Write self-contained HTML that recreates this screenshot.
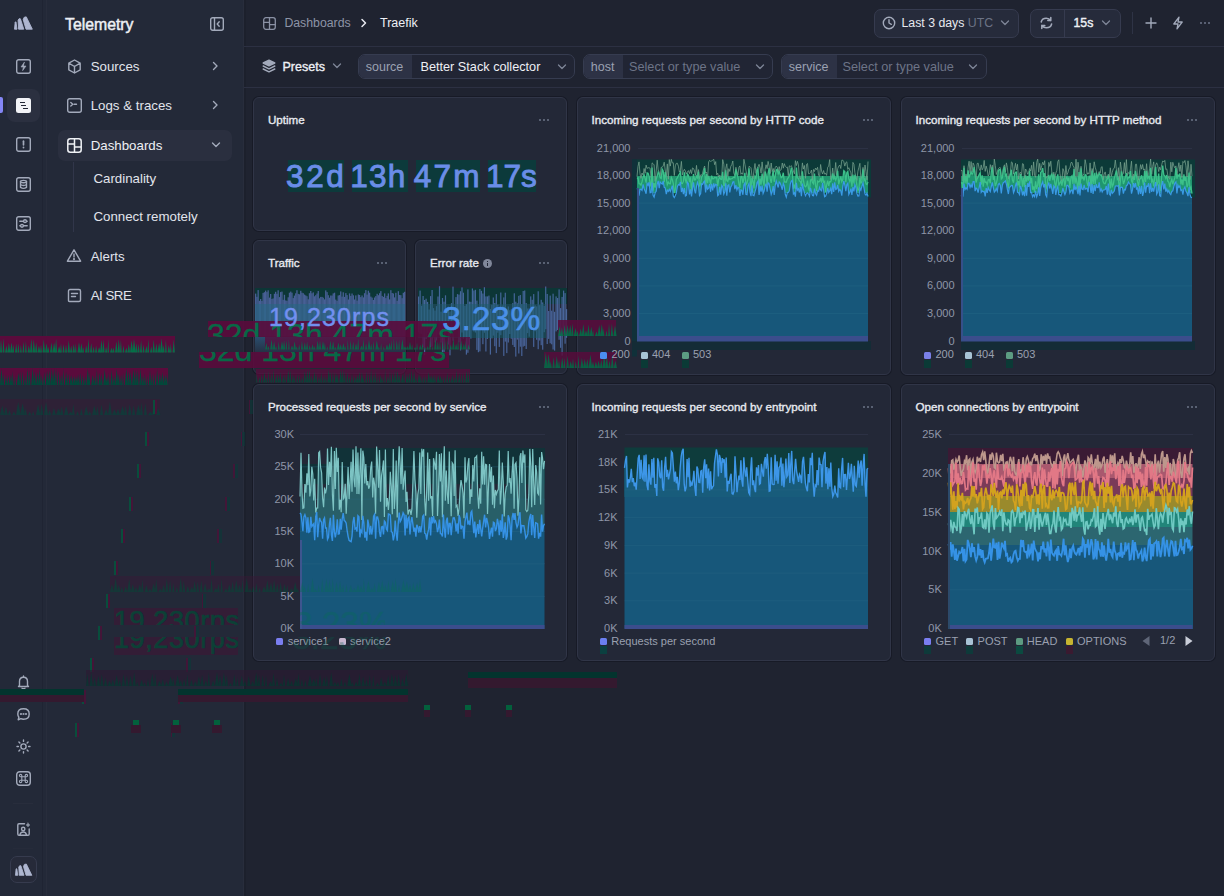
<!DOCTYPE html><html><head><meta charset="utf-8"><style>
*{box-sizing:border-box;margin:0;padding:0}
html,body{width:1224px;height:896px;overflow:hidden;background:#1f2330;font-family:"Liberation Sans",sans-serif;color:#e3e6ee}
.a{position:absolute;white-space:nowrap}
.card{position:absolute;background:#232837;border:1px solid #303547;border-radius:6px;box-shadow:0 0 0 1px rgba(10,12,20,0.35)}
.ttl{position:absolute;font-size:11.6px;font-weight:400;-webkit-text-stroke:0.35px #e8eaf0;color:#e8eaf0;white-space:nowrap}
.dots{position:absolute;width:11px;height:3px}
.dots i{position:absolute;top:0.2px;width:2.2px;height:2.2px;border-radius:50%;background:#6d7488}
.ax{position:absolute;font-size:10.5px;color:#8f96a8;text-align:right;white-space:nowrap;line-height:12px}
.lg{position:absolute;font-size:11px;color:#9aa0b0;white-space:nowrap;line-height:13px}
.sq{position:absolute;width:7px;height:7px;border-radius:1.5px}
.si{position:absolute;font-size:13.3px;color:#e1e4ec;white-space:nowrap;line-height:16px}
svg{position:absolute;overflow:visible}
</style></head><body>

<div class="a" style="left:0;top:0;width:47px;height:896px;background:#232938;border-right:1px solid #282d3c"></div><div class="a" style="left:42px;top:0;width:1px;height:896px;background:#1f2433"></div>
<div class="a" style="left:47px;top:0;width:197px;height:896px;background:#232938;border-right:1px solid #282d3c"></div><div class="a" style="left:244px;top:0;width:1.5px;height:896px;background:#1c202c"></div>
<div class="a" style="left:244px;top:46px;width:980px;height:1px;background:#2c3042"></div>
<div class="a" style="left:244px;top:87px;width:980px;height:1px;background:#2c3042"></div>
<svg style="left:13.9px;top:16px;width:19px;height:14px" viewBox="0 0 19 14"><g fill="#aeb6d0" stroke="#aeb6d0" stroke-width="0.9" stroke-linejoin="round"><path d="M0.5,13.2 L1.2,6.2 Q1.5,5.4 2,6.2 L3,13.2 Z"/><path d="M4.6,13.2 L4.1,4.3 Q4.8,2 6.4,2.8 L9.8,13.2 Z"/><path d="M12,13.2 L9.2,3.6 Q9.6,0.4 12.3,0.9 L18.3,13.2 Z"/></g></svg>
<svg style="left:16px;top:59px;width:15px;height:15px" viewBox="0 0 15 15" fill="none" stroke="#a3aabb" stroke-width="1.4" stroke-linecap="round" stroke-linejoin="round"><rect x="0.7" y="0.7" width="13.6" height="13.6" rx="2"/><path d="M8.3,3.3 L5,8 L7.4,8 L6.6,11.7 L10,7 L7.6,7 Z" fill="#a3aabb" stroke-width="0.6"/></svg>
<div class="a" style="left:7px;top:89px;width:33px;height:33px;border-radius:8px;background:#2b3040"></div>
<div class="a" style="left:0;top:97px;width:2.5px;height:16px;border-radius:0 2px 2px 0;background:#8486f5"></div>
<div class="a" style="left:16px;top:98px;width:15px;height:15px;border-radius:2.5px;background:#f2f3f7"></div>
<div class="a" style="left:19.5px;top:101.5px;width:5px;height:1.6px;background:#232736"></div>
<div class="a" style="left:21px;top:104.7px;width:5px;height:1.6px;background:#232736"></div>
<div class="a" style="left:22.5px;top:107.9px;width:5px;height:1.6px;background:#232736"></div>
<svg style="left:16px;top:137px;width:15px;height:15px" viewBox="0 0 15 15" fill="none" stroke="#a3aabb" stroke-width="1.4" stroke-linecap="round" stroke-linejoin="round"><rect x="0.7" y="0.7" width="13.6" height="13.6" rx="2"/><path d="M7.5,4.2 L7.5,7.8" stroke-width="1.7"/><circle cx="7.5" cy="10.5" r="0.9" fill="#a3aabb" stroke="none"/></svg>
<svg style="left:16px;top:177px;width:15px;height:15px" viewBox="0 0 15 15" fill="none" stroke="#a3aabb" stroke-width="1.4" stroke-linecap="round" stroke-linejoin="round"><rect x="0.7" y="0.7" width="13.6" height="13.6" rx="2"/><ellipse cx="7.5" cy="4.6" rx="3" ry="1.2"/><path d="M4.5,4.6 L4.5,10.4 Q7.5,12.4 10.5,10.4 L10.5,4.6 M4.5,7.5 Q7.5,9.5 10.5,7.5"/></svg>
<svg style="left:16px;top:216px;width:15px;height:15px" viewBox="0 0 15 15" fill="none" stroke="#a3aabb" stroke-width="1.4" stroke-linecap="round" stroke-linejoin="round"><rect x="0.7" y="0.7" width="13.6" height="13.6" rx="2"/><path d="M3.8,5.2 L7.5,5.2 M10.6,5.2 L11.2,5.2 M3.8,9.8 L4.4,9.8 M7.5,9.8 L11.2,9.8"/><circle cx="9" cy="5.2" r="1.4"/><circle cx="6" cy="9.8" r="1.4"/></svg>
<svg style="left:16px;top:675px;width:15px;height:15px" viewBox="0 0 15 15" fill="none" stroke="#a3aabb" stroke-width="1.4" stroke-linecap="round" stroke-linejoin="round"><path d="M3.5,10.5 L3.5,6.5 Q3.5,2.2 7.5,2.2 Q11.5,2.2 11.5,6.5 L11.5,10.5 L12.5,11.5 L2.5,11.5 Z"/><path d="M6,13.2 Q7.5,14.3 9,13.2"/><path d="M7.5,1 L7.5,2.2"/></svg>
<svg style="left:16px;top:707px;width:15px;height:15px" viewBox="0 0 15 15" fill="none" stroke="#a3aabb" stroke-width="1.4" stroke-linecap="round" stroke-linejoin="round"><path d="M7.5,1.8 Q13.2,1.8 13.2,7 Q13.2,12.2 7.5,12.2 Q6,12.2 4.8,11.7 L2.2,12.8 L2.9,10.3 Q1.8,9 1.8,7 Q1.8,1.8 7.5,1.8 Z"/><circle cx="5" cy="7" r="0.4" fill="#a3aabb"/><circle cx="7.5" cy="7" r="0.4" fill="#a3aabb"/><circle cx="10" cy="7" r="0.4" fill="#a3aabb"/></svg>
<svg style="left:16px;top:739px;width:15px;height:15px" viewBox="0 0 15 15" fill="none" stroke="#a3aabb" stroke-width="1.4" stroke-linecap="round" stroke-linejoin="round"><circle cx="7.5" cy="7.5" r="2.6"/><path d="M7.5,1 L7.5,2.4 M7.5,12.6 L7.5,14 M1,7.5 L2.4,7.5 M12.6,7.5 L14,7.5 M2.9,2.9 L3.9,3.9 M11.1,11.1 L12.1,12.1 M2.9,12.1 L3.9,11.1 M11.1,3.9 L12.1,2.9"/></svg>
<svg style="left:16px;top:771px;width:15px;height:15px" viewBox="0 0 15 15" fill="none" stroke="#a3aabb" stroke-width="1.4" stroke-linecap="round" stroke-linejoin="round"><rect x="0.7" y="0.7" width="13.6" height="13.6" rx="3"/><path d="M5.8,5.8 L9.2,5.8 L9.2,9.2 L5.8,9.2 Z M5.8,5.8 L5.8,4.6 A1.2,1.2 0 1 0 4.6,5.8 L5.8,5.8 M9.2,5.8 L9.2,4.6 A1.2,1.2 0 1 1 10.4,5.8 L9.2,5.8 M9.2,9.2 L10.4,9.2 A1.2,1.2 0 1 1 9.2,10.4 L9.2,9.2 M5.8,9.2 L5.8,10.4 A1.2,1.2 0 1 1 4.6,9.2 L5.8,9.2" stroke-width="1.1"/></svg>
<div class="a" style="left:13px;top:803px;width:20px;height:1px;background:#282d3c"></div>
<svg style="left:16px;top:822px;width:15px;height:15px" viewBox="0 0 15 15" fill="none" stroke="#a3aabb" stroke-width="1.4" stroke-linecap="round" stroke-linejoin="round"><path d="M8.5,1.8 L3,1.8 Q1.8,1.8 1.8,3 L1.8,12 Q1.8,13.2 3,13.2 L12,13.2 Q13.2,13.2 13.2,12 L13.2,7"/><circle cx="7.2" cy="7" r="1.7"/><path d="M4,13 Q4.3,10 7.2,10 Q10.1,10 10.4,13"/><path d="M12,1 L12.5,2.5 L14,3 L12.5,3.5 L12,5 L11.5,3.5 L10,3 L11.5,2.5 Z" fill="#a3aabb" stroke-width="0.5"/></svg>
<div class="a" style="left:13px;top:848px;width:20px;height:1px;background:#262b3a"></div>
<div class="a" style="left:10px;top:856px;width:27px;height:27px;border-radius:7px;border:1px solid #363b4e;background:#262a39"></div>
<svg style="left:14.5px;top:863px;width:17.5px;height:13.3px" viewBox="0 0 19 14"><g fill="#aeb6d0" stroke="#aeb6d0" stroke-width="0.9" stroke-linejoin="round"><path d="M0.5,13.2 L1.2,6.2 Q1.5,5.4 2,6.2 L3,13.2 Z"/><path d="M4.6,13.2 L4.1,4.3 Q4.8,2 6.4,2.8 L9.8,13.2 Z"/><path d="M12,13.2 L9.2,3.6 Q9.6,0.4 12.3,0.9 L18.3,13.2 Z"/></g></svg>
<div class="a" style="left:65px;top:15.5px;font-size:15.8px;font-weight:400;-webkit-text-stroke:0.45px #eef0f5;color:#eef0f5;line-height:18px">Telemetry</div>
<svg style="left:210px;top:17px;width:14px;height:14px" viewBox="0 0 14 14" fill="none" stroke="#a3aabb" stroke-width="1.4" stroke-linecap="round" stroke-linejoin="round"><rect x="0.7" y="0.7" width="12.6" height="12.6" rx="2"/><path d="M4.5,0.7 L4.5,13.3 M9.2,4.8 L7.2,7 L9.2,9.2"/></svg>
<svg style="left:67px;top:59px;width:15px;height:15px" viewBox="0 0 15 15" fill="none" stroke="#a3aabb" stroke-width="1.4" stroke-linecap="round" stroke-linejoin="round"><path d="M7.5,1 L13.2,4.2 L13.2,10.8 L7.5,14 L1.8,10.8 L1.8,4.2 Z M1.8,4.2 L7.5,7.5 L13.2,4.2 M7.5,7.5 L7.5,14"/></svg>
<div class="si" style="left:90.7px;top:58.8px">Sources</div>
<svg style="left:211px;top:61px;width:8px;height:10px" viewBox="0 0 8 10" fill="none" stroke="#a3aabb" stroke-width="1.4" stroke-linecap="round" stroke-linejoin="round"><path d="M2.5,1.5 L6,5 L2.5,8.5"/></svg>
<svg style="left:67px;top:98px;width:15px;height:15px" viewBox="0 0 15 15" fill="none" stroke="#a3aabb" stroke-width="1.4" stroke-linecap="round" stroke-linejoin="round"><rect x="0.7" y="0.7" width="13.6" height="13.6" rx="2"/><path d="M3.8,4.5 L5.8,6.3 L3.8,8.1 M7.2,6.3 L9.5,6.3"/></svg>
<div class="si" style="left:90.7px;top:97.8px">Logs &amp; traces</div>
<svg style="left:211px;top:100px;width:8px;height:10px" viewBox="0 0 8 10" fill="none" stroke="#a3aabb" stroke-width="1.4" stroke-linecap="round" stroke-linejoin="round"><path d="M2.5,1.5 L6,5 L2.5,8.5"/></svg>
<div class="a" style="left:58px;top:130px;width:174px;height:31px;border-radius:7px;background:#2a2f3f"></div>
<svg style="left:67px;top:138px;width:15px;height:15px" viewBox="0 0 15 15" fill="none" stroke="#f0f2f6" stroke-width="1.5"><rect x="0.8" y="0.8" width="13.4" height="13.4" rx="2.5"/><path d="M0.8,6 L7.5,6 M7.5,9 L14.2,9 M7.5,0.8 L7.5,14.2"/></svg>
<div class="si" style="left:90.7px;top:137.8px;color:#eef0f5">Dashboards</div>
<svg style="left:211px;top:141px;width:10px;height:8px" viewBox="0 0 10 8" fill="none" stroke="#a3aabb" stroke-width="1.4" stroke-linecap="round" stroke-linejoin="round"><path d="M1.5,2 L5,5.5 L8.5,2"/></svg>
<div class="a" style="left:73px;top:162px;width:1px;height:70px;background:#31364a"></div>
<div class="si" style="left:93.4px;top:171.4px">Cardinality</div>
<div class="si" style="left:93.4px;top:209.4px">Connect remotely</div>
<svg style="left:66px;top:248px;width:16px;height:15px" viewBox="0 0 16 15" fill="none" stroke="#a3aabb" stroke-width="1.4" stroke-linecap="round" stroke-linejoin="round"><path d="M8,1.8 L14.6,13.2 L1.4,13.2 Z" stroke-linejoin="round"/><path d="M8,6 L8,9"/><circle cx="8" cy="11.2" r="0.4" fill="#a3aabb"/></svg>
<div class="si" style="left:90.7px;top:248.8px">Alerts</div>
<svg style="left:67px;top:288px;width:15px;height:15px" viewBox="0 0 15 15" fill="none" stroke="#a3aabb" stroke-width="1.4" stroke-linecap="round" stroke-linejoin="round"><path d="M3,1.5 L12,1.5 Q13.5,1.5 13.5,3 L13.5,12 Q13.5,13.5 12,13.5 L2.5,13.5 Q1.5,13.5 1.5,12.5 L1.5,3 Q1.5,1.5 3,1.5 Z M4.5,5.5 L10.5,5.5 M4.5,8.5 L8.5,8.5"/></svg>
<div class="si" style="left:90.7px;top:287.8px;letter-spacing:-0.5px">AI SRE</div>
<svg style="left:263px;top:17px;width:13px;height:13px" viewBox="0 0 13 13" fill="none" stroke="#8a91a4" stroke-width="1.3" stroke-linecap="round" stroke-linejoin="round"><rect x="0.7" y="0.7" width="11.6" height="11.6" rx="2.2"/><path d="M0.7,5.3 L6.5,5.3 M6.5,7.7 L12.3,7.7 M6.5,0.7 L6.5,12.3"/></svg>
<div class="a" style="left:284.4px;top:16.3px;font-size:12.3px;color:#8d94a7;line-height:15px">Dashboards</div>
<svg style="left:360px;top:18px;width:8px;height:10px" viewBox="0 0 8 10" fill="none" stroke="#e8eaf0" stroke-width="1.5" stroke-linecap="round" stroke-linejoin="round"><path d="M2,1.5 L5.5,5 L2,8.5"/></svg>
<div class="a" style="left:380px;top:16.2px;font-size:12.5px;color:#eef0f5;line-height:15px">Traefik</div>
<div class="a" style="left:873.5px;top:9px;width:145.5px;height:29px;border-radius:7px;border:1px solid #363b4f;background:#262b3b"></div>
<svg style="left:882px;top:16px;width:14px;height:14px" viewBox="0 0 14 14" fill="none" stroke="#a3aabb" stroke-width="1.4" stroke-linecap="round" stroke-linejoin="round"><circle cx="7" cy="7" r="5.7"/><path d="M7,3.8 L7,7 L9.3,8.3"/></svg>
<div class="a" style="left:901.5px;top:16px;font-size:12.3px;color:#e6e9ef;line-height:15px">Last 3 days <span style="color:#6c7386">UTC</span></div>
<svg style="left:1000px;top:19px;width:10px;height:8px" viewBox="0 0 10 8" fill="none" stroke="#7e8597" stroke-width="1.3" stroke-linecap="round" stroke-linejoin="round"><path d="M1.5,2 L5,5.5 L8.5,2"/></svg>
<div class="a" style="left:1029.5px;top:9px;width:91px;height:29px;border-radius:7px;border:1px solid #363b4f;background:#262b3b"></div>
<div class="a" style="left:1063.5px;top:10px;width:1px;height:27px;background:#363b4f"></div>
<svg style="left:1039px;top:16px;width:15px;height:14px" viewBox="0 0 15 14" fill="none" stroke="#a3aabb" stroke-width="1.5" stroke-linecap="round" stroke-linejoin="round"><path d="M2.2,6 Q3,2.2 7.3,2.2 Q10.2,2.2 11.8,4.6 M12.6,8 Q11.8,11.8 7.3,11.8 Q4.4,11.8 2.8,9.4 M11.8,1.6 L11.8,4.6 L8.8,4.6 M2.8,12.4 L2.8,9.4 L5.8,9.4"/></svg>
<div class="a" style="left:1073.5px;top:15.5px;font-size:12.3px;font-weight:400;-webkit-text-stroke:0.4px #eef0f5;color:#eef0f5;line-height:14px">15s</div>
<svg style="left:1101px;top:19px;width:10px;height:8px" viewBox="0 0 10 8" fill="none" stroke="#7e8597" stroke-width="1.3" stroke-linecap="round" stroke-linejoin="round"><path d="M1.5,2 L5,5.5 L8.5,2"/></svg>
<div class="a" style="left:1132px;top:12px;width:1px;height:22px;background:#2e3345"></div>
<svg style="left:1145px;top:17px;width:12px;height:12px" viewBox="0 0 12 12" fill="none" stroke="#a3aabb" stroke-width="1.4" stroke-linecap="round" stroke-linejoin="round"><path d="M6,1 L6,11 M1,6 L11,6"/></svg>
<svg style="left:1171px;top:16px;width:14px;height:14px" viewBox="0 0 14 14" fill="none" stroke="#a3aabb" stroke-width="1.3" stroke-linecap="round" stroke-linejoin="round"><path d="M8,1.2 L2.8,8 L7,8 L6,12.8 L11.2,6 L7,6 Z"/></svg>
<div class="dots" style="left:1200px;top:21.5px"><i style="left:0"></i><i style="left:4px"></i><i style="left:8px"></i></div>
<svg style="left:262px;top:59px;width:14px;height:14px" viewBox="0 0 14 14" fill="none" stroke="#a3aabb" stroke-width="1.4" stroke-linecap="round" stroke-linejoin="round"><path d="M1.2,10 L7,12.8 L12.8,10" /><path d="M1.2,7 L7,9.8 L12.8,7" /><path d="M7,1.2 L12.8,4 L7,6.8 L1.2,4 Z" fill="#a3aabb"/></svg>
<div class="a" style="left:282.5px;top:60px;font-size:12.5px;font-weight:400;-webkit-text-stroke:0.35px #eef0f5;color:#eef0f5;line-height:15px">Presets</div>
<svg style="left:332px;top:62px;width:10px;height:8px" viewBox="0 0 10 8" fill="none" stroke="#7e8597" stroke-width="1.3" stroke-linecap="round" stroke-linejoin="round"><path d="M1.5,2 L5,5.5 L8.5,2"/></svg>
<div class="a" style="left:357.5px;top:54px;width:217.5px;height:25px;border-radius:7px;border:1px solid #363c50;background:#212534;overflow:hidden"><div class="a" style="left:0;top:0;width:53px;height:23px;background:#2d3245"></div></div><div class="a" style="left:365.8px;top:60px;font-size:12.5px;color:#9ba1b2;line-height:15px">source</div><div class="a" style="left:420.5px;top:60px;font-size:12.7px;color:#eef0f5;line-height:15px">Better Stack collector</div><svg style="left:557px;top:63px;width:10px;height:8px" viewBox="0 0 10 8" fill="none" stroke="#7e8597" stroke-width="1.3" stroke-linecap="round" stroke-linejoin="round"><path d="M1.5,2 L5,5.5 L8.5,2"/></svg>
<div class="a" style="left:582.5px;top:54px;width:190.5px;height:25px;border-radius:7px;border:1px solid #363c50;background:#212534;overflow:hidden"><div class="a" style="left:0;top:0;width:39.5px;height:23px;background:#2d3245"></div></div><div class="a" style="left:590.8px;top:60px;font-size:12.5px;color:#9ba1b2;line-height:15px">host</div><div class="a" style="left:629.0px;top:60px;font-size:12.7px;color:#6d7487;line-height:15px">Select or type value</div><svg style="left:754.5px;top:63px;width:10px;height:8px" viewBox="0 0 10 8" fill="none" stroke="#7e8597" stroke-width="1.3" stroke-linecap="round" stroke-linejoin="round"><path d="M1.5,2 L5,5.5 L8.5,2"/></svg>
<div class="a" style="left:780.5px;top:54px;width:206px;height:25px;border-radius:7px;border:1px solid #363c50;background:#212534;overflow:hidden"><div class="a" style="left:0;top:0;width:55.5px;height:23px;background:#2d3245"></div></div><div class="a" style="left:788.8px;top:60px;font-size:12.5px;color:#9ba1b2;line-height:15px">service</div><div class="a" style="left:842.5px;top:60px;font-size:12.7px;color:#6d7487;line-height:15px">Select or type value</div><svg style="left:968px;top:63px;width:10px;height:8px" viewBox="0 0 10 8" fill="none" stroke="#7e8597" stroke-width="1.3" stroke-linecap="round" stroke-linejoin="round"><path d="M1.5,2 L5,5.5 L8.5,2"/></svg>
<div class="card" style="left:253px;top:97px;width:314px;height:134px"></div>
<div class="ttl" style="left:268px;top:113.2px;line-height:13px">Uptime</div>
<div class="dots" style="left:538.5px;top:119px"><i style="left:0"></i><i style="left:4px"></i><i style="left:8px"></i></div>
<div class="card" style="left:253px;top:240px;width:153px;height:134px"></div>
<div class="ttl" style="left:268px;top:256.2px;line-height:13px">Traffic</div>
<div class="dots" style="left:377px;top:262px"><i style="left:0"></i><i style="left:4px"></i><i style="left:8px"></i></div>
<div class="card" style="left:415px;top:240px;width:152px;height:134px"></div>
<div class="ttl" style="left:430px;top:256.2px;line-height:13px">Error rate</div>
<div class="a" style="left:483px;top:258.5px;width:9px;height:9px;border-radius:50%;background:#80879a"></div>
<div class="a" style="left:487px;top:260.5px;width:1.2px;height:1.2px;background:#232736"></div><div class="a" style="left:487px;top:262.5px;width:1.2px;height:3px;background:#232736"></div>
<div class="dots" style="left:539px;top:262px"><i style="left:0"></i><i style="left:4px"></i><i style="left:8px"></i></div>
<div class="card" style="left:577px;top:97px;width:314px;height:278px"></div>
<div class="ttl" style="left:591.5px;top:113.2px;line-height:13px">Incoming requests per second by HTTP code</div>
<div class="dots" style="left:862.5px;top:119px"><i style="left:0"></i><i style="left:4px"></i><i style="left:8px"></i></div>
<div class="card" style="left:901px;top:97px;width:314px;height:278px"></div>
<div class="ttl" style="left:915.5px;top:113.2px;line-height:13px">Incoming requests per second by HTTP method</div>
<div class="dots" style="left:1186.5px;top:119px"><i style="left:0"></i><i style="left:4px"></i><i style="left:8px"></i></div>
<div class="card" style="left:253px;top:384px;width:314px;height:277px"></div>
<div class="ttl" style="left:268px;top:400.2px;line-height:13px">Processed requests per second by service</div>
<div class="dots" style="left:538.5px;top:406px"><i style="left:0"></i><i style="left:4px"></i><i style="left:8px"></i></div>
<div class="card" style="left:577px;top:384px;width:314px;height:277px"></div>
<div class="ttl" style="left:591.5px;top:400.2px;line-height:13px">Incoming requests per second by entrypoint</div>
<div class="dots" style="left:862.5px;top:406px"><i style="left:0"></i><i style="left:4px"></i><i style="left:8px"></i></div>
<div class="card" style="left:901px;top:384px;width:314px;height:277px"></div>
<div class="ttl" style="left:915.5px;top:400.2px;line-height:13px">Open connections by entrypoint</div>
<div class="dots" style="left:1186.5px;top:406px"><i style="left:0"></i><i style="left:4px"></i><i style="left:8px"></i></div>
<div class="ax" style="left:570.5px;top:141.5px;width:60px;font-size:11px">21,000</div>
<div class="a" style="left:637.5px;top:147.5px;width:230.5px;height:1px;background:#2c3144"></div>
<div class="ax" style="left:570.5px;top:169.1px;width:60px;font-size:11px">18,000</div>
<div class="a" style="left:637.5px;top:175.1px;width:230.5px;height:1px;background:#2c3144"></div>
<div class="ax" style="left:570.5px;top:196.6px;width:60px;font-size:11px">15,000</div>
<div class="a" style="left:637.5px;top:202.6px;width:230.5px;height:1px;background:#2c3144"></div>
<div class="ax" style="left:570.5px;top:224.2px;width:60px;font-size:11px">12,000</div>
<div class="a" style="left:637.5px;top:230.2px;width:230.5px;height:1px;background:#2c3144"></div>
<div class="ax" style="left:570.5px;top:251.8px;width:60px;font-size:11px">9,000</div>
<div class="a" style="left:637.5px;top:257.8px;width:230.5px;height:1px;background:#2c3144"></div>
<div class="ax" style="left:570.5px;top:279.4px;width:60px;font-size:11px">6,000</div>
<div class="a" style="left:637.5px;top:285.4px;width:230.5px;height:1px;background:#2c3144"></div>
<div class="ax" style="left:570.5px;top:306.9px;width:60px;font-size:11px">3,000</div>
<div class="a" style="left:637.5px;top:312.9px;width:230.5px;height:1px;background:#2c3144"></div>
<div class="ax" style="left:570.5px;top:334.5px;width:60px;font-size:11px">0</div>
<div class="a" style="left:637.5px;top:340.5px;width:230.5px;height:1px;background:#2c3144"></div>
<svg style="left:625px;top:140px;width:255px;height:220px" viewBox="625 140 255 220"><rect x="632" y="159.5" width="239" height="38" fill="#0c3a38"/><rect x="632" y="159.5" width="5" height="197" fill="#10313a"/><rect x="632" y="341" width="239" height="9" fill="#142c36" transform="translate(0,0)"/><rect x="637" y="176" width="231" height="17" fill="#1f9670"/><path d="M637.0,178.6 L638.0,177.9 L639.0,183.6 L640.0,183.8 L641.0,185.1 L642.0,181.9 L643.1,177.1 L644.1,174.8 L645.1,178.6 L646.1,182.6 L647.1,172.8 L648.1,173.2 L649.1,176.4 L650.1,183.4 L651.1,186.6 L652.1,167.6 L653.1,190.7 L654.1,183.2 L655.2,187.7 L656.2,179.1 L657.2,176.1 L658.2,172.0 L659.2,174.1 L660.2,177.9 L661.2,178.5 L662.2,169.2 L663.2,171.0 L664.2,182.2 L665.2,172.0 L666.3,178.7 L667.3,184.7 L668.3,182.2 L669.3,183.7 L670.3,183.8 L671.3,177.3 L672.3,179.6 L673.3,183.7 L674.3,193.0 L675.3,189.4 L676.3,179.4 L677.3,178.0 L678.4,175.5 L679.4,174.0 L680.4,172.1 L681.4,183.4 L682.4,183.6 L683.4,181.4 L684.4,172.4 L685.4,180.1 L686.4,183.4 L687.4,174.0 L688.4,175.2 L689.5,182.2 L690.5,177.3 L691.5,191.0 L692.5,181.7 L693.5,174.0 L694.5,179.9 L695.5,179.7 L696.5,176.1 L697.5,177.9 L698.5,171.6 L699.5,186.4 L700.6,183.7 L701.6,177.2 L702.6,175.2 L703.6,173.5 L704.6,168.0 L705.6,187.2 L706.6,174.0 L707.6,183.1 L708.6,175.9 L709.6,179.7 L710.6,184.5 L711.6,175.6 L712.7,178.8 L713.7,178.7 L714.7,177.4 L715.7,177.8 L716.7,177.4 L717.7,185.9 L718.7,179.1 L719.7,177.1 L720.7,179.1 L721.7,179.4 L722.7,171.8 L723.8,185.7 L724.8,185.7 L725.8,170.3 L726.8,180.7 L727.8,181.5 L728.8,177.6 L729.8,179.3 L730.8,178.8 L731.8,178.7 L732.8,177.9 L733.8,177.2 L734.8,177.7 L735.9,169.3 L736.9,174.0 L737.9,177.1 L738.9,183.7 L739.9,188.0 L740.9,176.3 L741.9,176.3 L742.9,183.1 L743.9,178.3 L744.9,172.8 L745.9,184.6 L747.0,183.1 L748.0,178.9 L749.0,168.4 L750.0,177.2 L751.0,190.2 L752.0,177.9 L753.0,180.9 L754.0,188.5 L755.0,176.3 L756.0,178.0 L757.0,170.5 L758.0,168.6 L759.1,188.3 L760.1,178.5 L761.1,184.6 L762.1,173.5 L763.1,181.1 L764.1,185.6 L765.1,171.5 L766.1,174.6 L767.1,184.7 L768.1,173.6 L769.1,168.2 L770.2,178.4 L771.2,182.9 L772.2,176.5 L773.2,170.5 L774.2,181.8 L775.2,176.3 L776.2,170.0 L777.2,169.5 L778.2,174.0 L779.2,171.1 L780.2,174.8 L781.2,177.7 L782.3,176.8 L783.3,172.7 L784.3,181.9 L785.3,182.0 L786.3,182.3 L787.3,179.1 L788.3,177.7 L789.3,175.9 L790.3,173.3 L791.3,167.6 L792.3,171.9 L793.4,188.8 L794.4,184.6 L795.4,188.9 L796.4,167.6 L797.4,177.9 L798.4,178.4 L799.4,181.0 L800.4,181.3 L801.4,185.9 L802.4,171.2 L803.4,180.2 L804.4,185.7 L805.5,186.8 L806.5,185.7 L807.5,180.6 L808.5,188.4 L809.5,191.0 L810.5,180.0 L811.5,179.3 L812.5,182.4 L813.5,183.7 L814.5,173.5 L815.5,185.0 L816.6,190.9 L817.6,181.2 L818.6,181.9 L819.6,181.4 L820.6,178.0 L821.6,182.7 L822.6,176.0 L823.6,182.3 L824.6,181.4 L825.6,191.9 L826.6,185.2 L827.7,180.6 L828.7,186.0 L829.7,181.6 L830.7,181.7 L831.7,179.1 L832.7,173.4 L833.7,179.6 L834.7,176.3 L835.7,180.0 L836.7,177.5 L837.7,170.7 L838.7,184.4 L839.8,179.8 L840.8,176.5 L841.8,181.7 L842.8,179.5 L843.8,170.7 L844.8,171.6 L845.8,182.3 L846.8,172.7 L847.8,171.4 L848.8,178.7 L849.8,181.6 L850.9,176.4 L851.9,186.7 L852.9,174.5 L853.9,183.4 L854.9,174.7 L855.9,179.0 L856.9,185.7 L857.9,190.4 L858.9,189.2 L859.9,177.7 L860.9,183.1 L861.9,181.8 L863.0,169.4 L864.0,180.6 L865.0,178.8 L866.0,183.9 L867.0,184.5 L868.0,182.0 L868.0,176.0 L867.0,176.0 L866.0,176.0 L865.0,176.0 L864.0,176.0 L863.0,176.0 L861.9,176.0 L860.9,176.0 L859.9,176.0 L858.9,176.0 L857.9,176.0 L856.9,176.0 L855.9,176.0 L854.9,176.0 L853.9,176.0 L852.9,176.0 L851.9,176.0 L850.9,176.0 L849.8,176.0 L848.8,176.0 L847.8,176.0 L846.8,176.0 L845.8,176.0 L844.8,176.0 L843.8,176.0 L842.8,176.0 L841.8,176.0 L840.8,176.0 L839.8,176.0 L838.7,176.0 L837.7,176.0 L836.7,176.0 L835.7,176.0 L834.7,176.0 L833.7,176.0 L832.7,176.0 L831.7,176.0 L830.7,176.0 L829.7,176.0 L828.7,176.0 L827.7,176.0 L826.6,176.0 L825.6,176.0 L824.6,176.0 L823.6,176.0 L822.6,176.0 L821.6,176.0 L820.6,176.0 L819.6,176.0 L818.6,176.0 L817.6,176.0 L816.6,176.0 L815.5,176.0 L814.5,176.0 L813.5,176.0 L812.5,176.0 L811.5,176.0 L810.5,176.0 L809.5,176.0 L808.5,176.0 L807.5,176.0 L806.5,176.0 L805.5,176.0 L804.4,176.0 L803.4,176.0 L802.4,176.0 L801.4,176.0 L800.4,176.0 L799.4,176.0 L798.4,176.0 L797.4,176.0 L796.4,176.0 L795.4,176.0 L794.4,176.0 L793.4,176.0 L792.3,176.0 L791.3,176.0 L790.3,176.0 L789.3,176.0 L788.3,176.0 L787.3,176.0 L786.3,176.0 L785.3,176.0 L784.3,176.0 L783.3,176.0 L782.3,176.0 L781.2,176.0 L780.2,176.0 L779.2,176.0 L778.2,176.0 L777.2,176.0 L776.2,176.0 L775.2,176.0 L774.2,176.0 L773.2,176.0 L772.2,176.0 L771.2,176.0 L770.2,176.0 L769.1,176.0 L768.1,176.0 L767.1,176.0 L766.1,176.0 L765.1,176.0 L764.1,176.0 L763.1,176.0 L762.1,176.0 L761.1,176.0 L760.1,176.0 L759.1,176.0 L758.0,176.0 L757.0,176.0 L756.0,176.0 L755.0,176.0 L754.0,176.0 L753.0,176.0 L752.0,176.0 L751.0,176.0 L750.0,176.0 L749.0,176.0 L748.0,176.0 L747.0,176.0 L745.9,176.0 L744.9,176.0 L743.9,176.0 L742.9,176.0 L741.9,176.0 L740.9,176.0 L739.9,176.0 L738.9,176.0 L737.9,176.0 L736.9,176.0 L735.9,176.0 L734.8,176.0 L733.8,176.0 L732.8,176.0 L731.8,176.0 L730.8,176.0 L729.8,176.0 L728.8,176.0 L727.8,176.0 L726.8,176.0 L725.8,176.0 L724.8,176.0 L723.8,176.0 L722.7,176.0 L721.7,176.0 L720.7,176.0 L719.7,176.0 L718.7,176.0 L717.7,176.0 L716.7,176.0 L715.7,176.0 L714.7,176.0 L713.7,176.0 L712.7,176.0 L711.6,176.0 L710.6,176.0 L709.6,176.0 L708.6,176.0 L707.6,176.0 L706.6,176.0 L705.6,176.0 L704.6,176.0 L703.6,176.0 L702.6,176.0 L701.6,176.0 L700.6,176.0 L699.5,176.0 L698.5,176.0 L697.5,176.0 L696.5,176.0 L695.5,176.0 L694.5,176.0 L693.5,176.0 L692.5,176.0 L691.5,176.0 L690.5,176.0 L689.5,176.0 L688.4,176.0 L687.4,176.0 L686.4,176.0 L685.4,176.0 L684.4,176.0 L683.4,176.0 L682.4,176.0 L681.4,176.0 L680.4,176.0 L679.4,176.0 L678.4,176.0 L677.3,176.0 L676.3,176.0 L675.3,176.0 L674.3,176.0 L673.3,176.0 L672.3,176.0 L671.3,176.0 L670.3,176.0 L669.3,176.0 L668.3,176.0 L667.3,176.0 L666.3,176.0 L665.2,176.0 L664.2,176.0 L663.2,176.0 L662.2,176.0 L661.2,176.0 L660.2,176.0 L659.2,176.0 L658.2,176.0 L657.2,176.0 L656.2,176.0 L655.2,176.0 L654.1,176.0 L653.1,176.0 L652.1,176.0 L651.1,176.0 L650.1,176.0 L649.1,176.0 L648.1,176.0 L647.1,176.0 L646.1,176.0 L645.1,176.0 L644.1,176.0 L643.1,176.0 L642.0,176.0 L641.0,176.0 L640.0,176.0 L639.0,176.0 L638.0,176.0 L637.0,176.0 Z" fill="#23946e" opacity="0.8"/><path d="M637.0,188.3 L638.0,189.8 L639.0,195.6 L640.0,189.5 L641.0,189.2 L642.0,190.4 L643.1,184.4 L644.1,188.5 L645.1,190.9 L646.1,193.8 L647.1,183.5 L648.1,185.2 L649.1,182.2 L650.1,192.7 L651.1,192.5 L652.1,182.5 L653.1,195.4 L654.1,197.1 L655.2,192.6 L656.2,191.3 L657.2,184.1 L658.2,180.8 L659.2,188.2 L660.2,182.1 L661.2,183.2 L662.2,184.2 L663.2,181.1 L664.2,187.3 L665.2,187.8 L666.3,194.1 L667.3,190.1 L668.3,191.3 L669.3,189.3 L670.3,191.5 L671.3,188.7 L672.3,185.6 L673.3,196.1 L674.3,197.6 L675.3,195.5 L676.3,193.2 L677.3,186.8 L678.4,184.5 L679.4,185.1 L680.4,181.8 L681.4,192.0 L682.4,187.9 L683.4,194.1 L684.4,188.0 L685.4,195.9 L686.4,195.3 L687.4,182.3 L688.4,183.6 L689.5,194.5 L690.5,189.4 L691.5,196.4 L692.5,188.5 L693.5,182.4 L694.5,190.0 L695.5,193.4 L696.5,186.1 L697.5,182.3 L698.5,185.4 L699.5,195.6 L700.6,193.9 L701.6,183.9 L702.6,184.4 L703.6,182.2 L704.6,181.2 L705.6,192.4 L706.6,184.6 L707.6,189.2 L708.6,188.2 L709.6,184.2 L710.6,191.8 L711.6,183.8 L712.7,190.4 L713.7,183.3 L714.7,186.9 L715.7,184.3 L716.7,184.8 L717.7,195.6 L718.7,194.6 L719.7,186.8 L720.7,194.6 L721.7,185.4 L722.7,186.8 L723.8,194.1 L724.8,191.9 L725.8,183.3 L726.8,195.6 L727.8,185.6 L728.8,184.8 L729.8,192.5 L730.8,186.9 L731.8,185.6 L732.8,182.0 L733.8,181.7 L734.8,189.2 L735.9,185.1 L736.9,190.0 L737.9,187.2 L738.9,188.0 L739.9,195.9 L740.9,189.8 L741.9,190.3 L742.9,194.8 L743.9,185.0 L744.9,183.1 L745.9,194.4 L747.0,194.7 L748.0,186.0 L749.0,183.8 L750.0,191.9 L751.0,196.2 L752.0,185.4 L753.0,195.4 L754.0,195.8 L755.0,191.6 L756.0,188.2 L757.0,182.8 L758.0,181.0 L759.1,194.9 L760.1,185.9 L761.1,191.7 L762.1,185.7 L763.1,193.5 L764.1,191.1 L765.1,186.2 L766.1,183.6 L767.1,191.6 L768.1,182.8 L769.1,183.9 L770.2,189.1 L771.2,194.4 L772.2,191.6 L773.2,186.0 L774.2,194.9 L775.2,185.4 L776.2,181.1 L777.2,184.3 L778.2,187.5 L779.2,182.0 L780.2,183.0 L781.2,186.1 L782.3,189.7 L783.3,183.5 L784.3,186.1 L785.3,194.5 L786.3,197.2 L787.3,192.6 L788.3,192.5 L789.3,190.8 L790.3,183.8 L791.3,181.1 L792.3,180.4 L793.4,194.0 L794.4,192.8 L795.4,196.7 L796.4,182.8 L797.4,190.2 L798.4,188.9 L799.4,192.5 L800.4,186.8 L801.4,196.3 L802.4,183.6 L803.4,188.9 L804.4,192.6 L805.5,195.7 L806.5,193.6 L807.5,192.8 L808.5,194.1 L809.5,196.1 L810.5,187.8 L811.5,191.7 L812.5,195.5 L813.5,195.7 L814.5,188.7 L815.5,193.4 L816.6,195.2 L817.6,191.0 L818.6,191.2 L819.6,187.5 L820.6,190.0 L821.6,190.8 L822.6,182.9 L823.6,190.2 L824.6,196.7 L825.6,196.0 L826.6,193.5 L827.7,188.0 L828.7,192.4 L829.7,190.8 L830.7,188.4 L831.7,194.1 L832.7,183.4 L833.7,192.0 L834.7,182.3 L835.7,189.5 L836.7,188.8 L837.7,184.8 L838.7,191.4 L839.8,189.3 L840.8,190.8 L841.8,195.7 L842.8,186.3 L843.8,181.1 L844.8,184.8 L845.8,191.1 L846.8,184.8 L847.8,183.3 L848.8,194.4 L849.8,192.3 L850.9,188.6 L851.9,194.9 L852.9,187.2 L853.9,191.3 L854.9,184.7 L855.9,187.3 L856.9,193.4 L857.9,196.0 L858.9,195.9 L859.9,188.3 L860.9,190.2 L861.9,186.4 L863.0,183.0 L864.0,188.1 L865.0,194.0 L866.0,195.1 L867.0,193.1 L868.0,196.5 L868.0,341.0 L867.0,341.0 L866.0,341.0 L865.0,341.0 L864.0,341.0 L863.0,341.0 L861.9,341.0 L860.9,341.0 L859.9,341.0 L858.9,341.0 L857.9,341.0 L856.9,341.0 L855.9,341.0 L854.9,341.0 L853.9,341.0 L852.9,341.0 L851.9,341.0 L850.9,341.0 L849.8,341.0 L848.8,341.0 L847.8,341.0 L846.8,341.0 L845.8,341.0 L844.8,341.0 L843.8,341.0 L842.8,341.0 L841.8,341.0 L840.8,341.0 L839.8,341.0 L838.7,341.0 L837.7,341.0 L836.7,341.0 L835.7,341.0 L834.7,341.0 L833.7,341.0 L832.7,341.0 L831.7,341.0 L830.7,341.0 L829.7,341.0 L828.7,341.0 L827.7,341.0 L826.6,341.0 L825.6,341.0 L824.6,341.0 L823.6,341.0 L822.6,341.0 L821.6,341.0 L820.6,341.0 L819.6,341.0 L818.6,341.0 L817.6,341.0 L816.6,341.0 L815.5,341.0 L814.5,341.0 L813.5,341.0 L812.5,341.0 L811.5,341.0 L810.5,341.0 L809.5,341.0 L808.5,341.0 L807.5,341.0 L806.5,341.0 L805.5,341.0 L804.4,341.0 L803.4,341.0 L802.4,341.0 L801.4,341.0 L800.4,341.0 L799.4,341.0 L798.4,341.0 L797.4,341.0 L796.4,341.0 L795.4,341.0 L794.4,341.0 L793.4,341.0 L792.3,341.0 L791.3,341.0 L790.3,341.0 L789.3,341.0 L788.3,341.0 L787.3,341.0 L786.3,341.0 L785.3,341.0 L784.3,341.0 L783.3,341.0 L782.3,341.0 L781.2,341.0 L780.2,341.0 L779.2,341.0 L778.2,341.0 L777.2,341.0 L776.2,341.0 L775.2,341.0 L774.2,341.0 L773.2,341.0 L772.2,341.0 L771.2,341.0 L770.2,341.0 L769.1,341.0 L768.1,341.0 L767.1,341.0 L766.1,341.0 L765.1,341.0 L764.1,341.0 L763.1,341.0 L762.1,341.0 L761.1,341.0 L760.1,341.0 L759.1,341.0 L758.0,341.0 L757.0,341.0 L756.0,341.0 L755.0,341.0 L754.0,341.0 L753.0,341.0 L752.0,341.0 L751.0,341.0 L750.0,341.0 L749.0,341.0 L748.0,341.0 L747.0,341.0 L745.9,341.0 L744.9,341.0 L743.9,341.0 L742.9,341.0 L741.9,341.0 L740.9,341.0 L739.9,341.0 L738.9,341.0 L737.9,341.0 L736.9,341.0 L735.9,341.0 L734.8,341.0 L733.8,341.0 L732.8,341.0 L731.8,341.0 L730.8,341.0 L729.8,341.0 L728.8,341.0 L727.8,341.0 L726.8,341.0 L725.8,341.0 L724.8,341.0 L723.8,341.0 L722.7,341.0 L721.7,341.0 L720.7,341.0 L719.7,341.0 L718.7,341.0 L717.7,341.0 L716.7,341.0 L715.7,341.0 L714.7,341.0 L713.7,341.0 L712.7,341.0 L711.6,341.0 L710.6,341.0 L709.6,341.0 L708.6,341.0 L707.6,341.0 L706.6,341.0 L705.6,341.0 L704.6,341.0 L703.6,341.0 L702.6,341.0 L701.6,341.0 L700.6,341.0 L699.5,341.0 L698.5,341.0 L697.5,341.0 L696.5,341.0 L695.5,341.0 L694.5,341.0 L693.5,341.0 L692.5,341.0 L691.5,341.0 L690.5,341.0 L689.5,341.0 L688.4,341.0 L687.4,341.0 L686.4,341.0 L685.4,341.0 L684.4,341.0 L683.4,341.0 L682.4,341.0 L681.4,341.0 L680.4,341.0 L679.4,341.0 L678.4,341.0 L677.3,341.0 L676.3,341.0 L675.3,341.0 L674.3,341.0 L673.3,341.0 L672.3,341.0 L671.3,341.0 L670.3,341.0 L669.3,341.0 L668.3,341.0 L667.3,341.0 L666.3,341.0 L665.2,341.0 L664.2,341.0 L663.2,341.0 L662.2,341.0 L661.2,341.0 L660.2,341.0 L659.2,341.0 L658.2,341.0 L657.2,341.0 L656.2,341.0 L655.2,341.0 L654.1,341.0 L653.1,341.0 L652.1,341.0 L651.1,341.0 L650.1,341.0 L649.1,341.0 L648.1,341.0 L647.1,341.0 L646.1,341.0 L645.1,341.0 L644.1,341.0 L643.1,341.0 L642.0,341.0 L641.0,341.0 L640.0,341.0 L639.0,341.0 L638.0,341.0 L637.0,341.0 Z" fill="#17577a"/><path d="M637.0,176.6 L638.0,166.4 L639.0,161.9 L640.0,173.7 L641.0,178.4 L642.0,173.0 L643.1,175.1 L644.1,168.5 L645.1,173.2 L646.1,165.1 L647.1,168.4 L648.1,167.7 L649.1,167.8 L650.1,168.2 L651.1,177.6 L652.1,162.9 L653.1,163.7 L654.1,164.9 L655.2,181.3 L656.2,171.0 L657.2,160.2 L658.2,170.0 L659.2,172.1 L660.2,175.9 L661.2,167.3 L662.2,167.2 L663.2,166.0 L664.2,162.2 L665.2,170.0 L666.3,176.7 L667.3,163.9 L668.3,179.2 L669.3,159.6 L670.3,166.1 L671.3,159.3 L672.3,162.9 L673.3,162.8 L674.3,175.5 L675.3,165.8 L676.3,163.4 L677.3,163.2 L678.4,166.2 L679.4,172.0 L680.4,170.1 L681.4,161.4 L682.4,174.8 L683.4,171.3 L684.4,169.3 L685.4,171.1 L686.4,174.0 L687.4,172.0 L688.4,170.6 L689.5,173.6 L690.5,169.7 L691.5,173.6 L692.5,167.9 L693.5,168.5 L694.5,170.9 L695.5,175.4 L696.5,165.4 L697.5,175.9 L698.5,169.6 L699.5,178.7 L700.6,174.9 L701.6,175.2 L702.6,173.2 L703.6,168.8 L704.6,166.0 L705.6,173.0 L706.6,172.0 L707.6,178.3 L708.6,162.0 L709.6,160.4 L710.6,161.5 L711.6,160.9 L712.7,160.3 L713.7,159.2 L714.7,164.7 L715.7,161.6 L716.7,174.8 L717.7,173.2 L718.7,177.1 L719.7,175.1 L720.7,176.2 L721.7,177.4 L722.7,159.6 L723.8,164.2 L724.8,180.3 L725.8,168.3 L726.8,163.8 L727.8,176.4 L728.8,168.7 L729.8,171.5 L730.8,166.3 L731.8,164.6 L732.8,161.0 L733.8,173.0 L734.8,175.7 L735.9,167.3 L736.9,172.0 L737.9,175.1 L738.9,167.3 L739.9,165.9 L740.9,174.3 L741.9,172.8 L742.9,174.4 L743.9,159.3 L744.9,164.3 L745.9,170.1 L747.0,175.8 L748.0,176.9 L749.0,166.4 L750.0,166.8 L751.0,167.8 L752.0,175.9 L753.0,178.9 L754.0,170.2 L755.0,163.5 L756.0,173.4 L757.0,168.5 L758.0,166.6 L759.1,164.3 L760.1,167.9 L761.1,173.1 L762.1,161.9 L763.1,171.4 L764.1,180.9 L765.1,169.5 L766.1,164.8 L767.1,168.6 L768.1,161.4 L769.1,166.2 L770.2,173.5 L771.2,163.0 L772.2,171.6 L773.2,168.5 L774.2,172.3 L775.2,167.7 L776.2,166.1 L777.2,167.2 L778.2,172.0 L779.2,166.6 L780.2,170.6 L781.2,169.6 L782.3,163.0 L783.3,168.2 L784.3,163.7 L785.3,166.4 L786.3,167.4 L787.3,167.0 L788.3,175.7 L789.3,165.8 L790.3,166.6 L791.3,165.6 L792.3,168.1 L793.4,170.9 L794.4,173.9 L795.4,160.7 L796.4,165.6 L797.4,161.3 L798.4,164.8 L799.4,177.6 L800.4,179.3 L801.4,174.5 L802.4,162.9 L803.4,169.1 L804.4,165.5 L805.5,178.3 L806.5,164.4 L807.5,163.5 L808.5,173.7 L809.5,173.7 L810.5,172.6 L811.5,170.0 L812.5,180.4 L813.5,169.5 L814.5,171.5 L815.5,168.0 L816.6,169.7 L817.6,167.3 L818.6,175.4 L819.6,176.3 L820.6,164.5 L821.6,171.1 L822.6,174.0 L823.6,170.5 L824.6,174.2 L825.6,173.2 L826.6,175.4 L827.7,167.2 L828.7,166.1 L829.7,159.6 L830.7,179.5 L831.7,177.1 L832.7,168.0 L833.7,177.6 L834.7,174.3 L835.7,162.5 L836.7,175.5 L837.7,168.7 L838.7,166.2 L839.8,165.0 L840.8,168.5 L841.8,160.2 L842.8,160.2 L843.8,161.7 L844.8,166.1 L845.8,162.6 L846.8,161.8 L847.8,169.4 L848.8,167.7 L849.8,170.3 L850.9,172.8 L851.9,180.5 L852.9,162.4 L853.9,164.2 L854.9,172.7 L855.9,177.0 L856.9,180.4 L857.9,171.2 L858.9,167.4 L859.9,163.3 L860.9,179.9 L861.9,176.6 L863.0,167.4 L864.0,177.2 L865.0,165.0 L866.0,171.3 L867.0,179.9 L868.0,161.5" fill="none" stroke="#76a08c" stroke-width="0.9" opacity="0.85"/><path d="M637.0,178.6 L638.0,177.9 L639.0,183.6 L640.0,183.8 L641.0,185.1 L642.0,181.9 L643.1,177.1 L644.1,174.8 L645.1,178.6 L646.1,182.6 L647.1,172.8 L648.1,173.2 L649.1,176.4 L650.1,183.4 L651.1,186.6 L652.1,167.6 L653.1,190.7 L654.1,183.2 L655.2,187.7 L656.2,179.1 L657.2,176.1 L658.2,172.0 L659.2,174.1 L660.2,177.9 L661.2,178.5 L662.2,169.2 L663.2,171.0 L664.2,182.2 L665.2,172.0 L666.3,178.7 L667.3,184.7 L668.3,182.2 L669.3,183.7 L670.3,183.8 L671.3,177.3 L672.3,179.6 L673.3,183.7 L674.3,193.0 L675.3,189.4 L676.3,179.4 L677.3,178.0 L678.4,175.5 L679.4,174.0 L680.4,172.1 L681.4,183.4 L682.4,183.6 L683.4,181.4 L684.4,172.4 L685.4,180.1 L686.4,183.4 L687.4,174.0 L688.4,175.2 L689.5,182.2 L690.5,177.3 L691.5,191.0 L692.5,181.7 L693.5,174.0 L694.5,179.9 L695.5,179.7 L696.5,176.1 L697.5,177.9 L698.5,171.6 L699.5,186.4 L700.6,183.7 L701.6,177.2 L702.6,175.2 L703.6,173.5 L704.6,168.0 L705.6,187.2 L706.6,174.0 L707.6,183.1 L708.6,175.9 L709.6,179.7 L710.6,184.5 L711.6,175.6 L712.7,178.8 L713.7,178.7 L714.7,177.4 L715.7,177.8 L716.7,177.4 L717.7,185.9 L718.7,179.1 L719.7,177.1 L720.7,179.1 L721.7,179.4 L722.7,171.8 L723.8,185.7 L724.8,185.7 L725.8,170.3 L726.8,180.7 L727.8,181.5 L728.8,177.6 L729.8,179.3 L730.8,178.8 L731.8,178.7 L732.8,177.9 L733.8,177.2 L734.8,177.7 L735.9,169.3 L736.9,174.0 L737.9,177.1 L738.9,183.7 L739.9,188.0 L740.9,176.3 L741.9,176.3 L742.9,183.1 L743.9,178.3 L744.9,172.8 L745.9,184.6 L747.0,183.1 L748.0,178.9 L749.0,168.4 L750.0,177.2 L751.0,190.2 L752.0,177.9 L753.0,180.9 L754.0,188.5 L755.0,176.3 L756.0,178.0 L757.0,170.5 L758.0,168.6 L759.1,188.3 L760.1,178.5 L761.1,184.6 L762.1,173.5 L763.1,181.1 L764.1,185.6 L765.1,171.5 L766.1,174.6 L767.1,184.7 L768.1,173.6 L769.1,168.2 L770.2,178.4 L771.2,182.9 L772.2,176.5 L773.2,170.5 L774.2,181.8 L775.2,176.3 L776.2,170.0 L777.2,169.5 L778.2,174.0 L779.2,171.1 L780.2,174.8 L781.2,177.7 L782.3,176.8 L783.3,172.7 L784.3,181.9 L785.3,182.0 L786.3,182.3 L787.3,179.1 L788.3,177.7 L789.3,175.9 L790.3,173.3 L791.3,167.6 L792.3,171.9 L793.4,188.8 L794.4,184.6 L795.4,188.9 L796.4,167.6 L797.4,177.9 L798.4,178.4 L799.4,181.0 L800.4,181.3 L801.4,185.9 L802.4,171.2 L803.4,180.2 L804.4,185.7 L805.5,186.8 L806.5,185.7 L807.5,180.6 L808.5,188.4 L809.5,191.0 L810.5,180.0 L811.5,179.3 L812.5,182.4 L813.5,183.7 L814.5,173.5 L815.5,185.0 L816.6,190.9 L817.6,181.2 L818.6,181.9 L819.6,181.4 L820.6,178.0 L821.6,182.7 L822.6,176.0 L823.6,182.3 L824.6,181.4 L825.6,191.9 L826.6,185.2 L827.7,180.6 L828.7,186.0 L829.7,181.6 L830.7,181.7 L831.7,179.1 L832.7,173.4 L833.7,179.6 L834.7,176.3 L835.7,180.0 L836.7,177.5 L837.7,170.7 L838.7,184.4 L839.8,179.8 L840.8,176.5 L841.8,181.7 L842.8,179.5 L843.8,170.7 L844.8,171.6 L845.8,182.3 L846.8,172.7 L847.8,171.4 L848.8,178.7 L849.8,181.6 L850.9,176.4 L851.9,186.7 L852.9,174.5 L853.9,183.4 L854.9,174.7 L855.9,179.0 L856.9,185.7 L857.9,190.4 L858.9,189.2 L859.9,177.7 L860.9,183.1 L861.9,181.8 L863.0,169.4 L864.0,180.6 L865.0,178.8 L866.0,183.9 L867.0,184.5 L868.0,182.0" fill="none" stroke="#3cc08a" stroke-width="1.3"/><path d="M637.0,188.3 L638.0,189.8 L639.0,195.6 L640.0,189.5 L641.0,189.2 L642.0,190.4 L643.1,184.4 L644.1,188.5 L645.1,190.9 L646.1,193.8 L647.1,183.5 L648.1,185.2 L649.1,182.2 L650.1,192.7 L651.1,192.5 L652.1,182.5 L653.1,195.4 L654.1,197.1 L655.2,192.6 L656.2,191.3 L657.2,184.1 L658.2,180.8 L659.2,188.2 L660.2,182.1 L661.2,183.2 L662.2,184.2 L663.2,181.1 L664.2,187.3 L665.2,187.8 L666.3,194.1 L667.3,190.1 L668.3,191.3 L669.3,189.3 L670.3,191.5 L671.3,188.7 L672.3,185.6 L673.3,196.1 L674.3,197.6 L675.3,195.5 L676.3,193.2 L677.3,186.8 L678.4,184.5 L679.4,185.1 L680.4,181.8 L681.4,192.0 L682.4,187.9 L683.4,194.1 L684.4,188.0 L685.4,195.9 L686.4,195.3 L687.4,182.3 L688.4,183.6 L689.5,194.5 L690.5,189.4 L691.5,196.4 L692.5,188.5 L693.5,182.4 L694.5,190.0 L695.5,193.4 L696.5,186.1 L697.5,182.3 L698.5,185.4 L699.5,195.6 L700.6,193.9 L701.6,183.9 L702.6,184.4 L703.6,182.2 L704.6,181.2 L705.6,192.4 L706.6,184.6 L707.6,189.2 L708.6,188.2 L709.6,184.2 L710.6,191.8 L711.6,183.8 L712.7,190.4 L713.7,183.3 L714.7,186.9 L715.7,184.3 L716.7,184.8 L717.7,195.6 L718.7,194.6 L719.7,186.8 L720.7,194.6 L721.7,185.4 L722.7,186.8 L723.8,194.1 L724.8,191.9 L725.8,183.3 L726.8,195.6 L727.8,185.6 L728.8,184.8 L729.8,192.5 L730.8,186.9 L731.8,185.6 L732.8,182.0 L733.8,181.7 L734.8,189.2 L735.9,185.1 L736.9,190.0 L737.9,187.2 L738.9,188.0 L739.9,195.9 L740.9,189.8 L741.9,190.3 L742.9,194.8 L743.9,185.0 L744.9,183.1 L745.9,194.4 L747.0,194.7 L748.0,186.0 L749.0,183.8 L750.0,191.9 L751.0,196.2 L752.0,185.4 L753.0,195.4 L754.0,195.8 L755.0,191.6 L756.0,188.2 L757.0,182.8 L758.0,181.0 L759.1,194.9 L760.1,185.9 L761.1,191.7 L762.1,185.7 L763.1,193.5 L764.1,191.1 L765.1,186.2 L766.1,183.6 L767.1,191.6 L768.1,182.8 L769.1,183.9 L770.2,189.1 L771.2,194.4 L772.2,191.6 L773.2,186.0 L774.2,194.9 L775.2,185.4 L776.2,181.1 L777.2,184.3 L778.2,187.5 L779.2,182.0 L780.2,183.0 L781.2,186.1 L782.3,189.7 L783.3,183.5 L784.3,186.1 L785.3,194.5 L786.3,197.2 L787.3,192.6 L788.3,192.5 L789.3,190.8 L790.3,183.8 L791.3,181.1 L792.3,180.4 L793.4,194.0 L794.4,192.8 L795.4,196.7 L796.4,182.8 L797.4,190.2 L798.4,188.9 L799.4,192.5 L800.4,186.8 L801.4,196.3 L802.4,183.6 L803.4,188.9 L804.4,192.6 L805.5,195.7 L806.5,193.6 L807.5,192.8 L808.5,194.1 L809.5,196.1 L810.5,187.8 L811.5,191.7 L812.5,195.5 L813.5,195.7 L814.5,188.7 L815.5,193.4 L816.6,195.2 L817.6,191.0 L818.6,191.2 L819.6,187.5 L820.6,190.0 L821.6,190.8 L822.6,182.9 L823.6,190.2 L824.6,196.7 L825.6,196.0 L826.6,193.5 L827.7,188.0 L828.7,192.4 L829.7,190.8 L830.7,188.4 L831.7,194.1 L832.7,183.4 L833.7,192.0 L834.7,182.3 L835.7,189.5 L836.7,188.8 L837.7,184.8 L838.7,191.4 L839.8,189.3 L840.8,190.8 L841.8,195.7 L842.8,186.3 L843.8,181.1 L844.8,184.8 L845.8,191.1 L846.8,184.8 L847.8,183.3 L848.8,194.4 L849.8,192.3 L850.9,188.6 L851.9,194.9 L852.9,187.2 L853.9,191.3 L854.9,184.7 L855.9,187.3 L856.9,193.4 L857.9,196.0 L858.9,195.9 L859.9,188.3 L860.9,190.2 L861.9,186.4 L863.0,183.0 L864.0,188.1 L865.0,194.0 L866.0,195.1 L867.0,193.1 L868.0,196.5" fill="none" stroke="#3a9be6" stroke-width="1.2"/><rect x="637" y="202.6" width="231" height="1" fill="#216484" opacity="0.6"/><rect x="637" y="230.2" width="231" height="1" fill="#216484" opacity="0.6"/><rect x="637" y="257.8" width="231" height="1" fill="#216484" opacity="0.6"/><rect x="637" y="285.4" width="231" height="1" fill="#216484" opacity="0.6"/><rect x="637" y="312.9" width="231" height="1" fill="#216484" opacity="0.6"/><rect x="637" y="336" width="231" height="5.5" fill="#3b4d8c"/><rect x="637" y="188" width="2" height="153" fill="#36508a"/></svg>
<div class="sq" style="left:641px;top:351.5px;background:#a9c3d6"></div>
<div class="lg" style="left:652px;top:348.3px">404</div>
<div class="sq" style="left:681.5px;top:351.5px;background:#5d9b82"></div>
<div class="lg" style="left:693px;top:348.3px">503</div>
<div class="ax" style="left:894.5px;top:141.5px;width:60px;font-size:11px">21,000</div>
<div class="a" style="left:961.5px;top:147.5px;width:230.5px;height:1px;background:#2c3144"></div>
<div class="ax" style="left:894.5px;top:169.1px;width:60px;font-size:11px">18,000</div>
<div class="a" style="left:961.5px;top:175.1px;width:230.5px;height:1px;background:#2c3144"></div>
<div class="ax" style="left:894.5px;top:196.6px;width:60px;font-size:11px">15,000</div>
<div class="a" style="left:961.5px;top:202.6px;width:230.5px;height:1px;background:#2c3144"></div>
<div class="ax" style="left:894.5px;top:224.2px;width:60px;font-size:11px">12,000</div>
<div class="a" style="left:961.5px;top:230.2px;width:230.5px;height:1px;background:#2c3144"></div>
<div class="ax" style="left:894.5px;top:251.8px;width:60px;font-size:11px">9,000</div>
<div class="a" style="left:961.5px;top:257.8px;width:230.5px;height:1px;background:#2c3144"></div>
<div class="ax" style="left:894.5px;top:279.4px;width:60px;font-size:11px">6,000</div>
<div class="a" style="left:961.5px;top:285.4px;width:230.5px;height:1px;background:#2c3144"></div>
<div class="ax" style="left:894.5px;top:306.9px;width:60px;font-size:11px">3,000</div>
<div class="a" style="left:961.5px;top:312.9px;width:230.5px;height:1px;background:#2c3144"></div>
<div class="ax" style="left:894.5px;top:334.5px;width:60px;font-size:11px">0</div>
<div class="a" style="left:961.5px;top:340.5px;width:230.5px;height:1px;background:#2c3144"></div>
<svg style="left:949px;top:140px;width:255px;height:220px" viewBox="949 140 255 220"><rect x="961" y="159.5" width="234" height="38" fill="#0c3a38"/><rect x="637" y="341" width="234" height="9" fill="#142c36" transform="translate(324,0)"/><rect x="961" y="176" width="231" height="17" fill="#1f9670"/><path d="M961.0,183.0 L962.0,182.8 L963.0,190.0 L964.0,167.7 L965.0,183.3 L966.0,175.9 L967.1,184.2 L968.1,170.3 L969.1,177.6 L970.1,174.8 L971.1,171.8 L972.1,174.4 L973.1,172.2 L974.1,167.2 L975.1,175.2 L976.1,182.7 L977.1,178.9 L978.1,177.1 L979.2,174.5 L980.2,172.7 L981.2,184.6 L982.2,175.4 L983.2,186.7 L984.2,178.1 L985.2,182.4 L986.2,182.1 L987.2,184.9 L988.2,179.9 L989.2,179.4 L990.3,183.2 L991.3,171.8 L992.3,167.2 L993.3,179.8 L994.3,177.4 L995.3,186.0 L996.3,183.3 L997.3,179.1 L998.3,170.9 L999.3,169.6 L1000.3,169.6 L1001.3,179.0 L1002.4,177.8 L1003.4,169.6 L1004.4,166.8 L1005.4,175.8 L1006.4,174.4 L1007.4,183.6 L1008.4,188.3 L1009.4,177.4 L1010.4,174.7 L1011.4,169.7 L1012.4,179.9 L1013.5,182.7 L1014.5,174.3 L1015.5,172.3 L1016.5,172.1 L1017.5,185.5 L1018.5,181.1 L1019.5,187.4 L1020.5,174.1 L1021.5,177.4 L1022.5,186.7 L1023.5,177.8 L1024.6,187.3 L1025.6,175.4 L1026.6,181.7 L1027.6,176.2 L1028.6,180.6 L1029.6,170.5 L1030.6,183.4 L1031.6,177.9 L1032.6,189.8 L1033.6,186.4 L1034.6,192.0 L1035.6,181.3 L1036.7,189.0 L1037.7,184.6 L1038.7,174.2 L1039.7,191.6 L1040.7,172.3 L1041.7,171.6 L1042.7,168.1 L1043.7,176.9 L1044.7,173.2 L1045.7,186.0 L1046.7,188.0 L1047.8,179.2 L1048.8,174.8 L1049.8,180.9 L1050.8,175.8 L1051.8,174.0 L1052.8,180.2 L1053.8,174.2 L1054.8,183.1 L1055.8,187.7 L1056.8,178.5 L1057.8,174.3 L1058.8,185.6 L1059.9,183.1 L1060.9,181.0 L1061.9,185.7 L1062.9,179.7 L1063.9,178.7 L1064.9,186.6 L1065.9,179.3 L1066.9,176.7 L1067.9,181.1 L1068.9,177.5 L1069.9,188.0 L1071.0,177.0 L1072.0,175.8 L1073.0,183.8 L1074.0,169.0 L1075.0,183.7 L1076.0,177.3 L1077.0,183.4 L1078.0,189.6 L1079.0,172.0 L1080.0,190.8 L1081.0,168.3 L1082.0,178.4 L1083.1,177.3 L1084.1,180.5 L1085.1,174.5 L1086.1,175.1 L1087.1,182.9 L1088.1,186.0 L1089.1,176.2 L1090.1,176.0 L1091.1,188.0 L1092.1,170.5 L1093.1,183.9 L1094.2,172.7 L1095.2,184.1 L1096.2,172.5 L1097.2,178.1 L1098.2,175.8 L1099.2,173.5 L1100.2,175.2 L1101.2,174.9 L1102.2,177.9 L1103.2,181.9 L1104.2,183.7 L1105.2,183.7 L1106.3,180.4 L1107.3,179.0 L1108.3,176.1 L1109.3,179.5 L1110.3,188.5 L1111.3,178.5 L1112.3,186.4 L1113.3,184.6 L1114.3,178.1 L1115.3,174.8 L1116.3,170.5 L1117.4,179.4 L1118.4,178.3 L1119.4,190.8 L1120.4,181.0 L1121.4,171.3 L1122.4,176.7 L1123.4,183.9 L1124.4,181.3 L1125.4,176.8 L1126.4,173.1 L1127.4,179.2 L1128.4,177.6 L1129.5,177.6 L1130.5,170.8 L1131.5,180.9 L1132.5,183.0 L1133.5,176.3 L1134.5,179.9 L1135.5,170.8 L1136.5,176.1 L1137.5,181.3 L1138.5,186.4 L1139.5,179.3 L1140.6,178.6 L1141.6,175.3 L1142.6,180.6 L1143.6,185.2 L1144.6,170.9 L1145.6,181.9 L1146.6,170.9 L1147.6,178.1 L1148.6,176.5 L1149.6,179.5 L1150.6,167.9 L1151.7,181.7 L1152.7,179.8 L1153.7,186.5 L1154.7,176.9 L1155.7,167.0 L1156.7,186.0 L1157.7,182.8 L1158.7,173.6 L1159.7,188.7 L1160.7,191.0 L1161.7,175.0 L1162.7,165.5 L1163.8,175.0 L1164.8,175.9 L1165.8,178.3 L1166.8,175.0 L1167.8,181.2 L1168.8,182.2 L1169.8,187.0 L1170.8,182.1 L1171.8,179.2 L1172.8,184.2 L1173.8,180.9 L1174.9,177.7 L1175.9,167.9 L1176.9,178.8 L1177.9,175.0 L1178.9,176.0 L1179.9,173.5 L1180.9,184.5 L1181.9,179.5 L1182.9,185.2 L1183.9,174.4 L1184.9,180.9 L1185.9,176.8 L1187.0,187.3 L1188.0,184.8 L1189.0,172.5 L1190.0,189.7 L1191.0,187.4 L1192.0,193.6 L1192.0,176.0 L1191.0,176.0 L1190.0,176.0 L1189.0,176.0 L1188.0,176.0 L1187.0,176.0 L1185.9,176.0 L1184.9,176.0 L1183.9,176.0 L1182.9,176.0 L1181.9,176.0 L1180.9,176.0 L1179.9,176.0 L1178.9,176.0 L1177.9,176.0 L1176.9,176.0 L1175.9,176.0 L1174.9,176.0 L1173.8,176.0 L1172.8,176.0 L1171.8,176.0 L1170.8,176.0 L1169.8,176.0 L1168.8,176.0 L1167.8,176.0 L1166.8,176.0 L1165.8,176.0 L1164.8,176.0 L1163.8,176.0 L1162.7,176.0 L1161.7,176.0 L1160.7,176.0 L1159.7,176.0 L1158.7,176.0 L1157.7,176.0 L1156.7,176.0 L1155.7,176.0 L1154.7,176.0 L1153.7,176.0 L1152.7,176.0 L1151.7,176.0 L1150.6,176.0 L1149.6,176.0 L1148.6,176.0 L1147.6,176.0 L1146.6,176.0 L1145.6,176.0 L1144.6,176.0 L1143.6,176.0 L1142.6,176.0 L1141.6,176.0 L1140.6,176.0 L1139.5,176.0 L1138.5,176.0 L1137.5,176.0 L1136.5,176.0 L1135.5,176.0 L1134.5,176.0 L1133.5,176.0 L1132.5,176.0 L1131.5,176.0 L1130.5,176.0 L1129.5,176.0 L1128.4,176.0 L1127.4,176.0 L1126.4,176.0 L1125.4,176.0 L1124.4,176.0 L1123.4,176.0 L1122.4,176.0 L1121.4,176.0 L1120.4,176.0 L1119.4,176.0 L1118.4,176.0 L1117.4,176.0 L1116.3,176.0 L1115.3,176.0 L1114.3,176.0 L1113.3,176.0 L1112.3,176.0 L1111.3,176.0 L1110.3,176.0 L1109.3,176.0 L1108.3,176.0 L1107.3,176.0 L1106.3,176.0 L1105.2,176.0 L1104.2,176.0 L1103.2,176.0 L1102.2,176.0 L1101.2,176.0 L1100.2,176.0 L1099.2,176.0 L1098.2,176.0 L1097.2,176.0 L1096.2,176.0 L1095.2,176.0 L1094.2,176.0 L1093.1,176.0 L1092.1,176.0 L1091.1,176.0 L1090.1,176.0 L1089.1,176.0 L1088.1,176.0 L1087.1,176.0 L1086.1,176.0 L1085.1,176.0 L1084.1,176.0 L1083.1,176.0 L1082.0,176.0 L1081.0,176.0 L1080.0,176.0 L1079.0,176.0 L1078.0,176.0 L1077.0,176.0 L1076.0,176.0 L1075.0,176.0 L1074.0,176.0 L1073.0,176.0 L1072.0,176.0 L1071.0,176.0 L1069.9,176.0 L1068.9,176.0 L1067.9,176.0 L1066.9,176.0 L1065.9,176.0 L1064.9,176.0 L1063.9,176.0 L1062.9,176.0 L1061.9,176.0 L1060.9,176.0 L1059.9,176.0 L1058.8,176.0 L1057.8,176.0 L1056.8,176.0 L1055.8,176.0 L1054.8,176.0 L1053.8,176.0 L1052.8,176.0 L1051.8,176.0 L1050.8,176.0 L1049.8,176.0 L1048.8,176.0 L1047.8,176.0 L1046.7,176.0 L1045.7,176.0 L1044.7,176.0 L1043.7,176.0 L1042.7,176.0 L1041.7,176.0 L1040.7,176.0 L1039.7,176.0 L1038.7,176.0 L1037.7,176.0 L1036.7,176.0 L1035.6,176.0 L1034.6,176.0 L1033.6,176.0 L1032.6,176.0 L1031.6,176.0 L1030.6,176.0 L1029.6,176.0 L1028.6,176.0 L1027.6,176.0 L1026.6,176.0 L1025.6,176.0 L1024.6,176.0 L1023.5,176.0 L1022.5,176.0 L1021.5,176.0 L1020.5,176.0 L1019.5,176.0 L1018.5,176.0 L1017.5,176.0 L1016.5,176.0 L1015.5,176.0 L1014.5,176.0 L1013.5,176.0 L1012.4,176.0 L1011.4,176.0 L1010.4,176.0 L1009.4,176.0 L1008.4,176.0 L1007.4,176.0 L1006.4,176.0 L1005.4,176.0 L1004.4,176.0 L1003.4,176.0 L1002.4,176.0 L1001.3,176.0 L1000.3,176.0 L999.3,176.0 L998.3,176.0 L997.3,176.0 L996.3,176.0 L995.3,176.0 L994.3,176.0 L993.3,176.0 L992.3,176.0 L991.3,176.0 L990.3,176.0 L989.2,176.0 L988.2,176.0 L987.2,176.0 L986.2,176.0 L985.2,176.0 L984.2,176.0 L983.2,176.0 L982.2,176.0 L981.2,176.0 L980.2,176.0 L979.2,176.0 L978.1,176.0 L977.1,176.0 L976.1,176.0 L975.1,176.0 L974.1,176.0 L973.1,176.0 L972.1,176.0 L971.1,176.0 L970.1,176.0 L969.1,176.0 L968.1,176.0 L967.1,176.0 L966.0,176.0 L965.0,176.0 L964.0,176.0 L963.0,176.0 L962.0,176.0 L961.0,176.0 Z" fill="#23946e" opacity="0.8"/><path d="M961.0,195.5 L962.0,196.8 L963.0,196.2 L964.0,183.7 L965.0,189.6 L966.0,187.9 L967.1,189.3 L968.1,183.4 L969.1,183.4 L970.1,187.3 L971.1,184.5 L972.1,187.6 L973.1,181.5 L974.1,181.5 L975.1,191.1 L976.1,188.1 L977.1,189.1 L978.1,192.6 L979.2,187.4 L980.2,182.0 L981.2,192.3 L982.2,190.9 L983.2,191.7 L984.2,191.3 L985.2,196.5 L986.2,188.0 L987.2,192.8 L988.2,187.6 L989.2,189.9 L990.3,191.6 L991.3,186.5 L992.3,182.3 L993.3,187.6 L994.3,192.1 L995.3,190.9 L996.3,188.5 L997.3,191.1 L998.3,184.4 L999.3,183.4 L1000.3,185.5 L1001.3,193.3 L1002.4,185.0 L1003.4,182.5 L1004.4,181.9 L1005.4,180.9 L1006.4,184.3 L1007.4,189.4 L1008.4,194.0 L1009.4,187.2 L1010.4,186.7 L1011.4,185.4 L1012.4,185.5 L1013.5,192.7 L1014.5,190.3 L1015.5,185.5 L1016.5,182.5 L1017.5,192.4 L1018.5,192.7 L1019.5,194.6 L1020.5,185.8 L1021.5,189.2 L1022.5,195.4 L1023.5,191.4 L1024.6,196.2 L1025.6,185.0 L1026.6,195.7 L1027.6,183.2 L1028.6,186.8 L1029.6,181.4 L1030.6,192.6 L1031.6,192.4 L1032.6,196.8 L1033.6,194.8 L1034.6,196.7 L1035.6,190.8 L1036.7,196.7 L1037.7,194.0 L1038.7,187.4 L1039.7,196.0 L1040.7,188.2 L1041.7,184.2 L1042.7,181.8 L1043.7,187.4 L1044.7,184.1 L1045.7,194.9 L1046.7,196.8 L1047.8,185.8 L1048.8,182.5 L1049.8,188.5 L1050.8,183.9 L1051.8,188.9 L1052.8,193.8 L1053.8,185.9 L1054.8,187.3 L1055.8,194.9 L1056.8,189.0 L1057.8,186.6 L1058.8,194.6 L1059.9,194.6 L1060.9,195.9 L1061.9,192.9 L1062.9,188.2 L1063.9,191.8 L1064.9,194.5 L1065.9,192.0 L1066.9,185.4 L1067.9,185.3 L1068.9,187.1 L1069.9,192.9 L1071.0,190.5 L1072.0,190.0 L1073.0,194.1 L1074.0,183.8 L1075.0,190.2 L1076.0,186.6 L1077.0,189.6 L1078.0,194.2 L1079.0,185.9 L1080.0,195.4 L1081.0,183.5 L1082.0,189.1 L1083.1,189.7 L1084.1,185.0 L1085.1,189.3 L1086.1,188.6 L1087.1,188.2 L1088.1,192.2 L1089.1,181.9 L1090.1,186.1 L1091.1,192.9 L1092.1,184.1 L1093.1,193.9 L1094.2,185.2 L1095.2,191.2 L1096.2,184.3 L1097.2,187.5 L1098.2,187.6 L1099.2,182.4 L1100.2,191.1 L1101.2,189.0 L1102.2,191.9 L1103.2,190.0 L1104.2,190.0 L1105.2,189.6 L1106.3,186.0 L1107.3,194.6 L1108.3,183.5 L1109.3,193.9 L1110.3,195.3 L1111.3,189.9 L1112.3,193.4 L1113.3,192.3 L1114.3,191.1 L1115.3,186.1 L1116.3,185.8 L1117.4,186.2 L1118.4,185.6 L1119.4,195.5 L1120.4,187.5 L1121.4,187.1 L1122.4,187.5 L1123.4,193.6 L1124.4,189.4 L1125.4,189.9 L1126.4,185.4 L1127.4,185.1 L1128.4,182.1 L1129.5,183.6 L1130.5,184.6 L1131.5,193.7 L1132.5,189.7 L1133.5,183.2 L1134.5,187.6 L1135.5,183.0 L1136.5,189.1 L1137.5,188.1 L1138.5,194.4 L1139.5,186.1 L1140.6,193.9 L1141.6,185.9 L1142.6,195.9 L1143.6,192.1 L1144.6,182.5 L1145.6,192.7 L1146.6,186.1 L1147.6,186.5 L1148.6,183.2 L1149.6,193.3 L1150.6,183.4 L1151.7,191.8 L1152.7,187.8 L1153.7,191.6 L1154.7,186.2 L1155.7,182.1 L1156.7,194.3 L1157.7,192.2 L1158.7,184.4 L1159.7,195.6 L1160.7,196.3 L1161.7,185.2 L1162.7,181.1 L1163.8,189.5 L1164.8,183.6 L1165.8,191.7 L1166.8,188.9 L1167.8,192.2 L1168.8,190.5 L1169.8,193.4 L1170.8,194.6 L1171.8,191.4 L1172.8,190.8 L1173.8,186.6 L1174.9,183.0 L1175.9,181.9 L1176.9,193.4 L1177.9,185.2 L1178.9,187.3 L1179.9,185.9 L1180.9,190.4 L1181.9,189.7 L1182.9,194.6 L1183.9,188.9 L1184.9,186.9 L1185.9,191.0 L1187.0,193.0 L1188.0,196.1 L1189.0,187.2 L1190.0,194.6 L1191.0,197.2 L1192.0,197.6 L1192.0,341.0 L1191.0,341.0 L1190.0,341.0 L1189.0,341.0 L1188.0,341.0 L1187.0,341.0 L1185.9,341.0 L1184.9,341.0 L1183.9,341.0 L1182.9,341.0 L1181.9,341.0 L1180.9,341.0 L1179.9,341.0 L1178.9,341.0 L1177.9,341.0 L1176.9,341.0 L1175.9,341.0 L1174.9,341.0 L1173.8,341.0 L1172.8,341.0 L1171.8,341.0 L1170.8,341.0 L1169.8,341.0 L1168.8,341.0 L1167.8,341.0 L1166.8,341.0 L1165.8,341.0 L1164.8,341.0 L1163.8,341.0 L1162.7,341.0 L1161.7,341.0 L1160.7,341.0 L1159.7,341.0 L1158.7,341.0 L1157.7,341.0 L1156.7,341.0 L1155.7,341.0 L1154.7,341.0 L1153.7,341.0 L1152.7,341.0 L1151.7,341.0 L1150.6,341.0 L1149.6,341.0 L1148.6,341.0 L1147.6,341.0 L1146.6,341.0 L1145.6,341.0 L1144.6,341.0 L1143.6,341.0 L1142.6,341.0 L1141.6,341.0 L1140.6,341.0 L1139.5,341.0 L1138.5,341.0 L1137.5,341.0 L1136.5,341.0 L1135.5,341.0 L1134.5,341.0 L1133.5,341.0 L1132.5,341.0 L1131.5,341.0 L1130.5,341.0 L1129.5,341.0 L1128.4,341.0 L1127.4,341.0 L1126.4,341.0 L1125.4,341.0 L1124.4,341.0 L1123.4,341.0 L1122.4,341.0 L1121.4,341.0 L1120.4,341.0 L1119.4,341.0 L1118.4,341.0 L1117.4,341.0 L1116.3,341.0 L1115.3,341.0 L1114.3,341.0 L1113.3,341.0 L1112.3,341.0 L1111.3,341.0 L1110.3,341.0 L1109.3,341.0 L1108.3,341.0 L1107.3,341.0 L1106.3,341.0 L1105.2,341.0 L1104.2,341.0 L1103.2,341.0 L1102.2,341.0 L1101.2,341.0 L1100.2,341.0 L1099.2,341.0 L1098.2,341.0 L1097.2,341.0 L1096.2,341.0 L1095.2,341.0 L1094.2,341.0 L1093.1,341.0 L1092.1,341.0 L1091.1,341.0 L1090.1,341.0 L1089.1,341.0 L1088.1,341.0 L1087.1,341.0 L1086.1,341.0 L1085.1,341.0 L1084.1,341.0 L1083.1,341.0 L1082.0,341.0 L1081.0,341.0 L1080.0,341.0 L1079.0,341.0 L1078.0,341.0 L1077.0,341.0 L1076.0,341.0 L1075.0,341.0 L1074.0,341.0 L1073.0,341.0 L1072.0,341.0 L1071.0,341.0 L1069.9,341.0 L1068.9,341.0 L1067.9,341.0 L1066.9,341.0 L1065.9,341.0 L1064.9,341.0 L1063.9,341.0 L1062.9,341.0 L1061.9,341.0 L1060.9,341.0 L1059.9,341.0 L1058.8,341.0 L1057.8,341.0 L1056.8,341.0 L1055.8,341.0 L1054.8,341.0 L1053.8,341.0 L1052.8,341.0 L1051.8,341.0 L1050.8,341.0 L1049.8,341.0 L1048.8,341.0 L1047.8,341.0 L1046.7,341.0 L1045.7,341.0 L1044.7,341.0 L1043.7,341.0 L1042.7,341.0 L1041.7,341.0 L1040.7,341.0 L1039.7,341.0 L1038.7,341.0 L1037.7,341.0 L1036.7,341.0 L1035.6,341.0 L1034.6,341.0 L1033.6,341.0 L1032.6,341.0 L1031.6,341.0 L1030.6,341.0 L1029.6,341.0 L1028.6,341.0 L1027.6,341.0 L1026.6,341.0 L1025.6,341.0 L1024.6,341.0 L1023.5,341.0 L1022.5,341.0 L1021.5,341.0 L1020.5,341.0 L1019.5,341.0 L1018.5,341.0 L1017.5,341.0 L1016.5,341.0 L1015.5,341.0 L1014.5,341.0 L1013.5,341.0 L1012.4,341.0 L1011.4,341.0 L1010.4,341.0 L1009.4,341.0 L1008.4,341.0 L1007.4,341.0 L1006.4,341.0 L1005.4,341.0 L1004.4,341.0 L1003.4,341.0 L1002.4,341.0 L1001.3,341.0 L1000.3,341.0 L999.3,341.0 L998.3,341.0 L997.3,341.0 L996.3,341.0 L995.3,341.0 L994.3,341.0 L993.3,341.0 L992.3,341.0 L991.3,341.0 L990.3,341.0 L989.2,341.0 L988.2,341.0 L987.2,341.0 L986.2,341.0 L985.2,341.0 L984.2,341.0 L983.2,341.0 L982.2,341.0 L981.2,341.0 L980.2,341.0 L979.2,341.0 L978.1,341.0 L977.1,341.0 L976.1,341.0 L975.1,341.0 L974.1,341.0 L973.1,341.0 L972.1,341.0 L971.1,341.0 L970.1,341.0 L969.1,341.0 L968.1,341.0 L967.1,341.0 L966.0,341.0 L965.0,341.0 L964.0,341.0 L963.0,341.0 L962.0,341.0 L961.0,341.0 Z" fill="#17577a"/><path d="M961.0,170.7 L962.0,170.2 L963.0,181.1 L964.0,165.7 L965.0,179.9 L966.0,173.9 L967.1,178.4 L968.1,167.1 L969.1,161.2 L970.1,172.8 L971.1,161.6 L972.1,172.4 L973.1,163.1 L974.1,165.2 L975.1,173.2 L976.1,180.7 L977.1,163.6 L978.1,163.0 L979.2,168.7 L980.2,170.7 L981.2,164.9 L982.2,169.9 L983.2,167.8 L984.2,160.4 L985.2,171.4 L986.2,166.1 L987.2,169.8 L988.2,176.0 L989.2,174.3 L990.3,164.6 L991.3,169.8 L992.3,165.2 L993.3,176.6 L994.3,159.1 L995.3,165.5 L996.3,174.5 L997.3,171.8 L998.3,168.9 L999.3,167.6 L1000.3,167.6 L1001.3,175.9 L1002.4,175.8 L1003.4,167.6 L1004.4,164.8 L1005.4,172.2 L1006.4,162.9 L1007.4,167.5 L1008.4,178.8 L1009.4,175.4 L1010.4,172.7 L1011.4,161.9 L1012.4,162.7 L1013.5,174.1 L1014.5,168.7 L1015.5,163.3 L1016.5,170.1 L1017.5,164.3 L1018.5,179.1 L1019.5,173.3 L1020.5,172.1 L1021.5,175.4 L1022.5,163.6 L1023.5,164.2 L1024.6,178.8 L1025.6,169.0 L1026.6,170.6 L1027.6,174.2 L1028.6,172.9 L1029.6,168.5 L1030.6,171.0 L1031.6,165.3 L1032.6,175.6 L1033.6,161.9 L1034.6,175.7 L1035.6,177.3 L1036.7,162.3 L1037.7,159.1 L1038.7,172.2 L1039.7,163.3 L1040.7,170.3 L1041.7,165.7 L1042.7,162.2 L1043.7,164.9 L1044.7,160.7 L1045.7,178.5 L1046.7,176.7 L1047.8,177.0 L1048.8,162.4 L1049.8,166.4 L1050.8,161.2 L1051.8,172.0 L1052.8,178.2 L1053.8,172.2 L1054.8,178.4 L1055.8,173.1 L1056.8,170.4 L1057.8,161.6 L1058.8,159.8 L1059.9,173.2 L1060.9,179.0 L1061.9,181.6 L1062.9,168.6 L1063.9,171.0 L1064.9,179.3 L1065.9,165.5 L1066.9,174.7 L1067.9,172.8 L1068.9,169.0 L1069.9,168.0 L1071.0,162.6 L1072.0,162.4 L1073.0,165.8 L1074.0,167.0 L1075.0,177.8 L1076.0,159.2 L1077.0,176.4 L1078.0,162.2 L1079.0,170.0 L1080.0,180.2 L1081.0,166.3 L1082.0,176.4 L1083.1,175.3 L1084.1,173.5 L1085.1,159.7 L1086.1,164.8 L1087.1,174.4 L1088.1,172.7 L1089.1,174.2 L1090.1,162.9 L1091.1,179.4 L1092.1,168.5 L1093.1,172.6 L1094.2,161.8 L1095.2,167.2 L1096.2,170.5 L1097.2,176.1 L1098.2,173.8 L1099.2,171.5 L1100.2,173.2 L1101.2,167.1 L1102.2,166.7 L1103.2,179.9 L1104.2,174.4 L1105.2,171.9 L1106.3,178.4 L1107.3,177.0 L1108.3,174.1 L1109.3,177.5 L1110.3,167.8 L1111.3,176.5 L1112.3,172.3 L1113.3,168.8 L1114.3,168.2 L1115.3,160.1 L1116.3,168.5 L1117.4,177.4 L1118.4,167.7 L1119.4,180.8 L1120.4,162.0 L1121.4,169.3 L1122.4,174.7 L1123.4,173.5 L1124.4,162.6 L1125.4,173.6 L1126.4,159.6 L1127.4,175.6 L1128.4,172.5 L1129.5,173.8 L1130.5,168.8 L1131.5,161.2 L1132.5,179.3 L1133.5,174.3 L1134.5,177.9 L1135.5,164.3 L1136.5,164.2 L1137.5,175.6 L1138.5,180.2 L1139.5,172.1 L1140.6,164.6 L1141.6,169.2 L1142.6,164.5 L1143.6,170.1 L1144.6,168.9 L1145.6,174.6 L1146.6,163.7 L1147.6,176.1 L1148.6,174.5 L1149.6,168.3 L1150.6,159.0 L1151.7,174.3 L1152.7,166.5 L1153.7,161.9 L1154.7,174.9 L1155.7,165.0 L1156.7,162.8 L1157.7,165.5 L1158.7,171.6 L1159.7,167.1 L1160.7,169.9 L1161.7,164.8 L1162.7,160.9 L1163.8,162.0 L1164.8,160.4 L1165.8,169.5 L1166.8,168.9 L1167.8,175.2 L1168.8,178.2 L1169.8,179.1 L1170.8,162.2 L1171.8,171.8 L1172.8,162.3 L1173.8,165.8 L1174.9,167.9 L1175.9,165.9 L1176.9,176.8 L1177.9,168.8 L1178.9,162.7 L1179.9,171.5 L1180.9,165.0 L1181.9,177.5 L1182.9,161.5 L1183.9,162.6 L1184.9,160.5 L1185.9,165.8 L1187.0,177.0 L1188.0,160.8 L1189.0,170.5 L1190.0,179.6 L1191.0,164.3 L1192.0,176.1" fill="none" stroke="#76a08c" stroke-width="0.9" opacity="0.85"/><path d="M961.0,183.0 L962.0,182.8 L963.0,190.0 L964.0,167.7 L965.0,183.3 L966.0,175.9 L967.1,184.2 L968.1,170.3 L969.1,177.6 L970.1,174.8 L971.1,171.8 L972.1,174.4 L973.1,172.2 L974.1,167.2 L975.1,175.2 L976.1,182.7 L977.1,178.9 L978.1,177.1 L979.2,174.5 L980.2,172.7 L981.2,184.6 L982.2,175.4 L983.2,186.7 L984.2,178.1 L985.2,182.4 L986.2,182.1 L987.2,184.9 L988.2,179.9 L989.2,179.4 L990.3,183.2 L991.3,171.8 L992.3,167.2 L993.3,179.8 L994.3,177.4 L995.3,186.0 L996.3,183.3 L997.3,179.1 L998.3,170.9 L999.3,169.6 L1000.3,169.6 L1001.3,179.0 L1002.4,177.8 L1003.4,169.6 L1004.4,166.8 L1005.4,175.8 L1006.4,174.4 L1007.4,183.6 L1008.4,188.3 L1009.4,177.4 L1010.4,174.7 L1011.4,169.7 L1012.4,179.9 L1013.5,182.7 L1014.5,174.3 L1015.5,172.3 L1016.5,172.1 L1017.5,185.5 L1018.5,181.1 L1019.5,187.4 L1020.5,174.1 L1021.5,177.4 L1022.5,186.7 L1023.5,177.8 L1024.6,187.3 L1025.6,175.4 L1026.6,181.7 L1027.6,176.2 L1028.6,180.6 L1029.6,170.5 L1030.6,183.4 L1031.6,177.9 L1032.6,189.8 L1033.6,186.4 L1034.6,192.0 L1035.6,181.3 L1036.7,189.0 L1037.7,184.6 L1038.7,174.2 L1039.7,191.6 L1040.7,172.3 L1041.7,171.6 L1042.7,168.1 L1043.7,176.9 L1044.7,173.2 L1045.7,186.0 L1046.7,188.0 L1047.8,179.2 L1048.8,174.8 L1049.8,180.9 L1050.8,175.8 L1051.8,174.0 L1052.8,180.2 L1053.8,174.2 L1054.8,183.1 L1055.8,187.7 L1056.8,178.5 L1057.8,174.3 L1058.8,185.6 L1059.9,183.1 L1060.9,181.0 L1061.9,185.7 L1062.9,179.7 L1063.9,178.7 L1064.9,186.6 L1065.9,179.3 L1066.9,176.7 L1067.9,181.1 L1068.9,177.5 L1069.9,188.0 L1071.0,177.0 L1072.0,175.8 L1073.0,183.8 L1074.0,169.0 L1075.0,183.7 L1076.0,177.3 L1077.0,183.4 L1078.0,189.6 L1079.0,172.0 L1080.0,190.8 L1081.0,168.3 L1082.0,178.4 L1083.1,177.3 L1084.1,180.5 L1085.1,174.5 L1086.1,175.1 L1087.1,182.9 L1088.1,186.0 L1089.1,176.2 L1090.1,176.0 L1091.1,188.0 L1092.1,170.5 L1093.1,183.9 L1094.2,172.7 L1095.2,184.1 L1096.2,172.5 L1097.2,178.1 L1098.2,175.8 L1099.2,173.5 L1100.2,175.2 L1101.2,174.9 L1102.2,177.9 L1103.2,181.9 L1104.2,183.7 L1105.2,183.7 L1106.3,180.4 L1107.3,179.0 L1108.3,176.1 L1109.3,179.5 L1110.3,188.5 L1111.3,178.5 L1112.3,186.4 L1113.3,184.6 L1114.3,178.1 L1115.3,174.8 L1116.3,170.5 L1117.4,179.4 L1118.4,178.3 L1119.4,190.8 L1120.4,181.0 L1121.4,171.3 L1122.4,176.7 L1123.4,183.9 L1124.4,181.3 L1125.4,176.8 L1126.4,173.1 L1127.4,179.2 L1128.4,177.6 L1129.5,177.6 L1130.5,170.8 L1131.5,180.9 L1132.5,183.0 L1133.5,176.3 L1134.5,179.9 L1135.5,170.8 L1136.5,176.1 L1137.5,181.3 L1138.5,186.4 L1139.5,179.3 L1140.6,178.6 L1141.6,175.3 L1142.6,180.6 L1143.6,185.2 L1144.6,170.9 L1145.6,181.9 L1146.6,170.9 L1147.6,178.1 L1148.6,176.5 L1149.6,179.5 L1150.6,167.9 L1151.7,181.7 L1152.7,179.8 L1153.7,186.5 L1154.7,176.9 L1155.7,167.0 L1156.7,186.0 L1157.7,182.8 L1158.7,173.6 L1159.7,188.7 L1160.7,191.0 L1161.7,175.0 L1162.7,165.5 L1163.8,175.0 L1164.8,175.9 L1165.8,178.3 L1166.8,175.0 L1167.8,181.2 L1168.8,182.2 L1169.8,187.0 L1170.8,182.1 L1171.8,179.2 L1172.8,184.2 L1173.8,180.9 L1174.9,177.7 L1175.9,167.9 L1176.9,178.8 L1177.9,175.0 L1178.9,176.0 L1179.9,173.5 L1180.9,184.5 L1181.9,179.5 L1182.9,185.2 L1183.9,174.4 L1184.9,180.9 L1185.9,176.8 L1187.0,187.3 L1188.0,184.8 L1189.0,172.5 L1190.0,189.7 L1191.0,187.4 L1192.0,193.6" fill="none" stroke="#3cc08a" stroke-width="1.3"/><path d="M961.0,195.5 L962.0,196.8 L963.0,196.2 L964.0,183.7 L965.0,189.6 L966.0,187.9 L967.1,189.3 L968.1,183.4 L969.1,183.4 L970.1,187.3 L971.1,184.5 L972.1,187.6 L973.1,181.5 L974.1,181.5 L975.1,191.1 L976.1,188.1 L977.1,189.1 L978.1,192.6 L979.2,187.4 L980.2,182.0 L981.2,192.3 L982.2,190.9 L983.2,191.7 L984.2,191.3 L985.2,196.5 L986.2,188.0 L987.2,192.8 L988.2,187.6 L989.2,189.9 L990.3,191.6 L991.3,186.5 L992.3,182.3 L993.3,187.6 L994.3,192.1 L995.3,190.9 L996.3,188.5 L997.3,191.1 L998.3,184.4 L999.3,183.4 L1000.3,185.5 L1001.3,193.3 L1002.4,185.0 L1003.4,182.5 L1004.4,181.9 L1005.4,180.9 L1006.4,184.3 L1007.4,189.4 L1008.4,194.0 L1009.4,187.2 L1010.4,186.7 L1011.4,185.4 L1012.4,185.5 L1013.5,192.7 L1014.5,190.3 L1015.5,185.5 L1016.5,182.5 L1017.5,192.4 L1018.5,192.7 L1019.5,194.6 L1020.5,185.8 L1021.5,189.2 L1022.5,195.4 L1023.5,191.4 L1024.6,196.2 L1025.6,185.0 L1026.6,195.7 L1027.6,183.2 L1028.6,186.8 L1029.6,181.4 L1030.6,192.6 L1031.6,192.4 L1032.6,196.8 L1033.6,194.8 L1034.6,196.7 L1035.6,190.8 L1036.7,196.7 L1037.7,194.0 L1038.7,187.4 L1039.7,196.0 L1040.7,188.2 L1041.7,184.2 L1042.7,181.8 L1043.7,187.4 L1044.7,184.1 L1045.7,194.9 L1046.7,196.8 L1047.8,185.8 L1048.8,182.5 L1049.8,188.5 L1050.8,183.9 L1051.8,188.9 L1052.8,193.8 L1053.8,185.9 L1054.8,187.3 L1055.8,194.9 L1056.8,189.0 L1057.8,186.6 L1058.8,194.6 L1059.9,194.6 L1060.9,195.9 L1061.9,192.9 L1062.9,188.2 L1063.9,191.8 L1064.9,194.5 L1065.9,192.0 L1066.9,185.4 L1067.9,185.3 L1068.9,187.1 L1069.9,192.9 L1071.0,190.5 L1072.0,190.0 L1073.0,194.1 L1074.0,183.8 L1075.0,190.2 L1076.0,186.6 L1077.0,189.6 L1078.0,194.2 L1079.0,185.9 L1080.0,195.4 L1081.0,183.5 L1082.0,189.1 L1083.1,189.7 L1084.1,185.0 L1085.1,189.3 L1086.1,188.6 L1087.1,188.2 L1088.1,192.2 L1089.1,181.9 L1090.1,186.1 L1091.1,192.9 L1092.1,184.1 L1093.1,193.9 L1094.2,185.2 L1095.2,191.2 L1096.2,184.3 L1097.2,187.5 L1098.2,187.6 L1099.2,182.4 L1100.2,191.1 L1101.2,189.0 L1102.2,191.9 L1103.2,190.0 L1104.2,190.0 L1105.2,189.6 L1106.3,186.0 L1107.3,194.6 L1108.3,183.5 L1109.3,193.9 L1110.3,195.3 L1111.3,189.9 L1112.3,193.4 L1113.3,192.3 L1114.3,191.1 L1115.3,186.1 L1116.3,185.8 L1117.4,186.2 L1118.4,185.6 L1119.4,195.5 L1120.4,187.5 L1121.4,187.1 L1122.4,187.5 L1123.4,193.6 L1124.4,189.4 L1125.4,189.9 L1126.4,185.4 L1127.4,185.1 L1128.4,182.1 L1129.5,183.6 L1130.5,184.6 L1131.5,193.7 L1132.5,189.7 L1133.5,183.2 L1134.5,187.6 L1135.5,183.0 L1136.5,189.1 L1137.5,188.1 L1138.5,194.4 L1139.5,186.1 L1140.6,193.9 L1141.6,185.9 L1142.6,195.9 L1143.6,192.1 L1144.6,182.5 L1145.6,192.7 L1146.6,186.1 L1147.6,186.5 L1148.6,183.2 L1149.6,193.3 L1150.6,183.4 L1151.7,191.8 L1152.7,187.8 L1153.7,191.6 L1154.7,186.2 L1155.7,182.1 L1156.7,194.3 L1157.7,192.2 L1158.7,184.4 L1159.7,195.6 L1160.7,196.3 L1161.7,185.2 L1162.7,181.1 L1163.8,189.5 L1164.8,183.6 L1165.8,191.7 L1166.8,188.9 L1167.8,192.2 L1168.8,190.5 L1169.8,193.4 L1170.8,194.6 L1171.8,191.4 L1172.8,190.8 L1173.8,186.6 L1174.9,183.0 L1175.9,181.9 L1176.9,193.4 L1177.9,185.2 L1178.9,187.3 L1179.9,185.9 L1180.9,190.4 L1181.9,189.7 L1182.9,194.6 L1183.9,188.9 L1184.9,186.9 L1185.9,191.0 L1187.0,193.0 L1188.0,196.1 L1189.0,187.2 L1190.0,194.6 L1191.0,197.2 L1192.0,197.6" fill="none" stroke="#3a9be6" stroke-width="1.2"/><rect x="961" y="202.6" width="231" height="1" fill="#216484" opacity="0.6"/><rect x="961" y="230.2" width="231" height="1" fill="#216484" opacity="0.6"/><rect x="961" y="257.8" width="231" height="1" fill="#216484" opacity="0.6"/><rect x="961" y="285.4" width="231" height="1" fill="#216484" opacity="0.6"/><rect x="961" y="312.9" width="231" height="1" fill="#216484" opacity="0.6"/><rect x="961" y="336" width="231" height="5.5" fill="#3b4d8c"/><rect x="961" y="188" width="2" height="153" fill="#36508a"/></svg>
<div class="sq" style="left:924px;top:351.5px;background:#7a80e8"></div>
<div class="lg" style="left:935.5px;top:348.3px">200</div>
<div class="sq" style="left:965px;top:351.5px;background:#a9c3d6"></div>
<div class="lg" style="left:976px;top:348.3px">404</div>
<div class="sq" style="left:1005.5px;top:351.5px;background:#5d9b82"></div>
<div class="lg" style="left:1017px;top:348.3px">503</div>
<div class="ax" style="left:234px;top:427.9px;width:60px;font-size:11px">30K</div>
<div class="a" style="left:300px;top:433.9px;width:244.5px;height:1px;background:#2c3144"></div>
<div class="ax" style="left:234px;top:460.3px;width:60px;font-size:11px">25K</div>
<div class="a" style="left:300px;top:466.3px;width:244.5px;height:1px;background:#2c3144"></div>
<div class="ax" style="left:234px;top:492.6px;width:60px;font-size:11px">20K</div>
<div class="a" style="left:300px;top:498.6px;width:244.5px;height:1px;background:#2c3144"></div>
<div class="ax" style="left:234px;top:525.0px;width:60px;font-size:11px">15K</div>
<div class="a" style="left:300px;top:531.0px;width:244.5px;height:1px;background:#2c3144"></div>
<div class="ax" style="left:234px;top:557.4px;width:60px;font-size:11px">10K</div>
<div class="a" style="left:300px;top:563.4px;width:244.5px;height:1px;background:#2c3144"></div>
<div class="ax" style="left:234px;top:589.8px;width:60px;font-size:11px">5K</div>
<div class="a" style="left:300px;top:595.8px;width:244.5px;height:1px;background:#2c3144"></div>
<div class="ax" style="left:234px;top:622.1px;width:60px;font-size:11px">0K</div>
<div class="a" style="left:300px;top:628.1px;width:244.5px;height:1px;background:#2c3144"></div>
<svg style="left:295px;top:430px;width:255px;height:202px" viewBox="295 430 255 202"><rect x="328" y="448" width="217" height="16" fill="#113238"/><rect x="300" y="464" width="245" height="20" fill="#113238"/><path d="M300.0,496.5 L301.0,452.8 L302.0,491.7 L302.9,508.3 L303.9,507.8 L304.9,484.1 L305.9,492.7 L306.9,473.3 L307.9,485.1 L308.8,454.0 L309.8,496.5 L310.8,490.4 L311.8,466.9 L312.8,474.0 L313.7,500.5 L314.7,478.8 L315.7,512.5 L316.7,508.1 L317.7,508.0 L318.7,452.7 L319.6,451.6 L320.6,467.4 L321.6,472.7 L322.6,498.2 L323.6,507.2 L324.5,487.6 L325.5,493.3 L326.5,488.4 L327.5,448.5 L328.5,485.0 L329.5,461.8 L330.4,476.9 L331.4,446.7 L332.4,494.5 L333.4,510.8 L334.4,451.1 L335.3,488.9 L336.3,447.7 L337.3,472.0 L338.3,457.8 L339.3,509.7 L340.3,499.9 L341.2,512.3 L342.2,462.1 L343.2,499.2 L344.2,497.8 L345.2,483.8 L346.2,513.8 L347.1,492.2 L348.1,466.9 L349.1,499.1 L350.1,481.6 L351.1,461.8 L352.0,491.7 L353.0,449.6 L354.0,479.2 L355.0,487.2 L356.0,446.2 L357.0,494.0 L357.9,452.5 L358.9,494.1 L359.9,471.2 L360.9,448.2 L361.9,520.0 L362.8,450.7 L363.8,457.6 L364.8,483.4 L365.8,464.1 L366.8,485.3 L367.8,481.1 L368.7,488.7 L369.7,486.2 L370.7,467.8 L371.7,461.6 L372.7,497.4 L373.6,477.7 L374.6,484.5 L375.6,513.8 L376.6,446.6 L377.6,466.5 L378.6,487.7 L379.5,450.0 L380.5,501.8 L381.5,475.7 L382.5,469.4 L383.5,460.4 L384.4,517.1 L385.4,449.4 L386.4,506.8 L387.4,498.1 L388.4,510.0 L389.4,497.9 L390.3,471.7 L391.3,486.7 L392.3,514.2 L393.3,449.0 L394.3,508.9 L395.2,495.8 L396.2,460.6 L397.2,517.5 L398.2,468.2 L399.2,446.3 L400.2,465.8 L401.1,484.1 L402.1,448.1 L403.1,489.8 L404.1,478.9 L405.1,470.6 L406.0,501.9 L407.0,491.8 L408.0,514.5 L409.0,510.4 L410.0,509.7 L411.0,515.0 L411.9,508.9 L412.9,482.0 L413.9,451.1 L414.9,479.1 L415.9,491.8 L416.8,517.7 L417.8,494.4 L418.8,488.5 L419.8,452.4 L420.8,494.1 L421.8,448.7 L422.7,456.6 L423.7,449.2 L424.7,500.2 L425.7,515.7 L426.7,490.0 L427.7,452.5 L428.6,500.7 L429.6,458.9 L430.6,498.5 L431.6,496.1 L432.6,515.9 L433.5,458.2 L434.5,463.3 L435.5,469.6 L436.5,451.7 L437.5,516.0 L438.5,492.1 L439.4,453.9 L440.4,481.4 L441.4,453.3 L442.4,517.3 L443.4,472.6 L444.3,446.2 L445.3,500.8 L446.3,470.5 L447.3,494.1 L448.3,503.9 L449.3,451.5 L450.2,486.4 L451.2,516.3 L452.2,462.8 L453.2,464.5 L454.2,495.9 L455.1,450.3 L456.1,506.7 L457.1,505.4 L458.1,516.0 L459.1,507.7 L460.1,489.0 L461.0,480.0 L462.0,485.7 L463.0,493.1 L464.0,518.3 L465.0,457.3 L465.9,482.6 L466.9,479.3 L467.9,464.2 L468.9,458.1 L469.9,504.0 L470.9,489.3 L471.8,497.0 L472.8,465.0 L473.8,481.5 L474.8,457.8 L475.8,457.2 L476.7,456.0 L477.7,494.0 L478.7,508.7 L479.7,488.3 L480.7,503.7 L481.7,451.8 L482.6,484.4 L483.6,456.3 L484.6,484.8 L485.6,464.4 L486.6,464.8 L487.5,514.0 L488.5,486.6 L489.5,464.0 L490.5,482.3 L491.5,467.0 L492.5,504.8 L493.4,475.4 L494.4,508.3 L495.4,490.0 L496.4,494.2 L497.4,491.0 L498.3,489.4 L499.3,450.6 L500.3,504.5 L501.3,491.4 L502.3,462.6 L503.3,482.8 L504.2,516.4 L505.2,494.4 L506.2,486.9 L507.2,485.3 L508.2,451.1 L509.2,482.7 L510.1,478.0 L511.1,493.6 L512.1,472.8 L513.1,456.7 L514.1,508.8 L515.0,464.4 L516.0,462.7 L517.0,478.2 L518.0,515.8 L519.0,497.8 L520.0,456.5 L520.9,453.1 L521.9,483.0 L522.9,450.6 L523.9,462.8 L524.9,454.4 L525.8,509.9 L526.8,511.5 L527.8,510.3 L528.8,494.4 L529.8,448.9 L530.8,466.4 L531.7,507.3 L532.7,449.0 L533.7,482.9 L534.7,504.9 L535.7,465.0 L536.6,471.7 L537.6,493.0 L538.6,494.5 L539.6,457.3 L540.6,504.5 L541.6,452.1 L542.5,457.9 L543.5,469.3 L544.5,460.9 L544.5,523.7 L543.5,525.7 L542.5,531.7 L541.6,514.6 L540.6,536.6 L539.6,532.9 L538.6,538.6 L537.6,523.9 L536.6,523.0 L535.7,522.7 L534.7,538.0 L533.7,527.3 L532.7,515.0 L531.7,535.3 L530.8,514.1 L529.8,516.9 L528.8,522.7 L527.8,533.9 L526.8,536.8 L525.8,538.2 L524.9,531.6 L523.9,525.8 L522.9,525.8 L521.9,525.5 L520.9,533.5 L520.0,512.2 L519.0,516.3 L518.0,524.9 L517.0,527.2 L516.0,522.6 L515.0,513.1 L514.1,519.9 L513.1,513.0 L512.1,517.9 L511.1,540.3 L510.1,525.5 L509.2,518.4 L508.2,515.2 L507.2,536.1 L506.2,539.6 L505.2,522.2 L504.2,532.8 L503.3,538.0 L502.3,514.4 L501.3,531.6 L500.3,520.2 L499.3,535.2 L498.3,523.3 L497.4,518.9 L496.4,528.5 L495.4,531.1 L494.4,522.9 L493.4,522.2 L492.5,536.6 L491.5,527.6 L490.5,532.6 L489.5,538.9 L488.5,527.2 L487.5,522.1 L486.6,517.9 L485.6,527.4 L484.6,514.7 L483.6,521.7 L482.6,528.6 L481.7,536.4 L480.7,528.8 L479.7,519.8 L478.7,534.0 L477.7,524.1 L476.7,529.8 L475.8,537.5 L474.8,521.6 L473.8,533.2 L472.8,521.6 L471.8,511.2 L470.9,512.6 L469.9,525.2 L468.9,520.7 L467.9,524.6 L466.9,512.6 L465.9,517.1 L465.0,521.5 L464.0,538.6 L463.0,526.5 L462.0,526.2 L461.0,529.2 L460.1,518.4 L459.1,515.1 L458.1,533.7 L457.1,523.3 L456.1,531.5 L455.1,521.3 L454.2,517.7 L453.2,517.8 L452.2,524.1 L451.2,535.1 L450.2,523.4 L449.3,523.5 L448.3,534.4 L447.3,517.6 L446.3,520.9 L445.3,537.7 L444.3,528.5 L443.4,514.5 L442.4,536.4 L441.4,533.8 L440.4,533.6 L439.4,519.5 L438.5,528.2 L437.5,532.1 L436.5,523.8 L435.5,520.7 L434.5,522.1 L433.5,516.2 L432.6,523.4 L431.6,516.8 L430.6,535.4 L429.6,517.5 L428.6,529.4 L427.7,533.1 L426.7,539.6 L425.7,534.0 L424.7,533.2 L423.7,515.0 L422.7,516.2 L421.8,526.2 L420.8,532.5 L419.8,526.0 L418.8,532.6 L417.8,527.0 L416.8,524.8 L415.9,536.7 L414.9,527.7 L413.9,531.7 L412.9,524.3 L411.9,517.2 L411.0,521.7 L410.0,534.5 L409.0,517.1 L408.0,518.5 L407.0,528.5 L406.0,514.8 L405.1,535.5 L404.1,514.7 L403.1,512.8 L402.1,516.8 L401.1,519.9 L400.2,521.6 L399.2,512.6 L398.2,523.7 L397.2,540.7 L396.2,533.3 L395.2,520.5 L394.3,535.3 L393.3,540.3 L392.3,532.4 L391.3,531.7 L390.3,515.2 L389.4,514.4 L388.4,514.0 L387.4,530.6 L386.4,529.2 L385.4,522.4 L384.4,521.1 L383.5,534.5 L382.5,526.5 L381.5,526.9 L380.5,536.9 L379.5,531.9 L378.6,521.0 L377.6,517.0 L376.6,517.1 L375.6,538.8 L374.6,514.3 L373.6,516.1 L372.7,529.0 L371.7,534.5 L370.7,525.8 L369.7,534.7 L368.7,524.5 L367.8,519.5 L366.8,540.7 L365.8,531.8 L364.8,537.6 L363.8,522.6 L362.8,515.8 L361.9,532.3 L360.9,530.4 L359.9,537.3 L358.9,516.8 L357.9,515.7 L357.0,531.5 L356.0,528.0 L355.0,529.0 L354.0,517.0 L353.0,522.1 L352.0,536.1 L351.1,541.7 L350.1,541.2 L349.1,540.3 L348.1,536.3 L347.1,530.3 L346.2,523.1 L345.2,521.3 L344.2,520.6 L343.2,513.0 L342.2,519.0 L341.2,529.6 L340.3,518.7 L339.3,533.7 L338.3,534.0 L337.3,519.2 L336.3,531.8 L335.3,537.3 L334.4,531.9 L333.4,514.8 L332.4,541.0 L331.4,535.0 L330.4,517.9 L329.5,523.5 L328.5,537.2 L327.5,539.3 L326.5,528.0 L325.5,528.0 L324.5,517.9 L323.6,519.6 L322.6,538.8 L321.6,522.2 L320.6,520.9 L319.6,517.9 L318.7,524.9 L317.7,537.3 L316.7,512.1 L315.7,516.5 L314.7,540.1 L313.7,523.9 L312.8,525.0 L311.8,526.5 L310.8,516.9 L309.8,531.6 L308.8,532.3 L307.9,517.3 L306.9,532.8 L305.9,517.8 L304.9,514.7 L303.9,516.9 L302.9,531.2 L302.0,522.3 L301.0,514.3 L300.0,512.9 Z" fill="#285f68"/><path d="M300.0,512.9 L301.0,514.3 L302.0,522.3 L302.9,531.2 L303.9,516.9 L304.9,514.7 L305.9,517.8 L306.9,532.8 L307.9,517.3 L308.8,532.3 L309.8,531.6 L310.8,516.9 L311.8,526.5 L312.8,525.0 L313.7,523.9 L314.7,540.1 L315.7,516.5 L316.7,512.1 L317.7,537.3 L318.7,524.9 L319.6,517.9 L320.6,520.9 L321.6,522.2 L322.6,538.8 L323.6,519.6 L324.5,517.9 L325.5,528.0 L326.5,528.0 L327.5,539.3 L328.5,537.2 L329.5,523.5 L330.4,517.9 L331.4,535.0 L332.4,541.0 L333.4,514.8 L334.4,531.9 L335.3,537.3 L336.3,531.8 L337.3,519.2 L338.3,534.0 L339.3,533.7 L340.3,518.7 L341.2,529.6 L342.2,519.0 L343.2,513.0 L344.2,520.6 L345.2,521.3 L346.2,523.1 L347.1,530.3 L348.1,536.3 L349.1,540.3 L350.1,541.2 L351.1,541.7 L352.0,536.1 L353.0,522.1 L354.0,517.0 L355.0,529.0 L356.0,528.0 L357.0,531.5 L357.9,515.7 L358.9,516.8 L359.9,537.3 L360.9,530.4 L361.9,532.3 L362.8,515.8 L363.8,522.6 L364.8,537.6 L365.8,531.8 L366.8,540.7 L367.8,519.5 L368.7,524.5 L369.7,534.7 L370.7,525.8 L371.7,534.5 L372.7,529.0 L373.6,516.1 L374.6,514.3 L375.6,538.8 L376.6,517.1 L377.6,517.0 L378.6,521.0 L379.5,531.9 L380.5,536.9 L381.5,526.9 L382.5,526.5 L383.5,534.5 L384.4,521.1 L385.4,522.4 L386.4,529.2 L387.4,530.6 L388.4,514.0 L389.4,514.4 L390.3,515.2 L391.3,531.7 L392.3,532.4 L393.3,540.3 L394.3,535.3 L395.2,520.5 L396.2,533.3 L397.2,540.7 L398.2,523.7 L399.2,512.6 L400.2,521.6 L401.1,519.9 L402.1,516.8 L403.1,512.8 L404.1,514.7 L405.1,535.5 L406.0,514.8 L407.0,528.5 L408.0,518.5 L409.0,517.1 L410.0,534.5 L411.0,521.7 L411.9,517.2 L412.9,524.3 L413.9,531.7 L414.9,527.7 L415.9,536.7 L416.8,524.8 L417.8,527.0 L418.8,532.6 L419.8,526.0 L420.8,532.5 L421.8,526.2 L422.7,516.2 L423.7,515.0 L424.7,533.2 L425.7,534.0 L426.7,539.6 L427.7,533.1 L428.6,529.4 L429.6,517.5 L430.6,535.4 L431.6,516.8 L432.6,523.4 L433.5,516.2 L434.5,522.1 L435.5,520.7 L436.5,523.8 L437.5,532.1 L438.5,528.2 L439.4,519.5 L440.4,533.6 L441.4,533.8 L442.4,536.4 L443.4,514.5 L444.3,528.5 L445.3,537.7 L446.3,520.9 L447.3,517.6 L448.3,534.4 L449.3,523.5 L450.2,523.4 L451.2,535.1 L452.2,524.1 L453.2,517.8 L454.2,517.7 L455.1,521.3 L456.1,531.5 L457.1,523.3 L458.1,533.7 L459.1,515.1 L460.1,518.4 L461.0,529.2 L462.0,526.2 L463.0,526.5 L464.0,538.6 L465.0,521.5 L465.9,517.1 L466.9,512.6 L467.9,524.6 L468.9,520.7 L469.9,525.2 L470.9,512.6 L471.8,511.2 L472.8,521.6 L473.8,533.2 L474.8,521.6 L475.8,537.5 L476.7,529.8 L477.7,524.1 L478.7,534.0 L479.7,519.8 L480.7,528.8 L481.7,536.4 L482.6,528.6 L483.6,521.7 L484.6,514.7 L485.6,527.4 L486.6,517.9 L487.5,522.1 L488.5,527.2 L489.5,538.9 L490.5,532.6 L491.5,527.6 L492.5,536.6 L493.4,522.2 L494.4,522.9 L495.4,531.1 L496.4,528.5 L497.4,518.9 L498.3,523.3 L499.3,535.2 L500.3,520.2 L501.3,531.6 L502.3,514.4 L503.3,538.0 L504.2,532.8 L505.2,522.2 L506.2,539.6 L507.2,536.1 L508.2,515.2 L509.2,518.4 L510.1,525.5 L511.1,540.3 L512.1,517.9 L513.1,513.0 L514.1,519.9 L515.0,513.1 L516.0,522.6 L517.0,527.2 L518.0,524.9 L519.0,516.3 L520.0,512.2 L520.9,533.5 L521.9,525.5 L522.9,525.8 L523.9,525.8 L524.9,531.6 L525.8,538.2 L526.8,536.8 L527.8,533.9 L528.8,522.7 L529.8,516.9 L530.8,514.1 L531.7,535.3 L532.7,515.0 L533.7,527.3 L534.7,538.0 L535.7,522.7 L536.6,523.0 L537.6,523.9 L538.6,538.6 L539.6,532.9 L540.6,536.6 L541.6,514.6 L542.5,531.7 L543.5,525.7 L544.5,523.7 L544.5,628.5 L543.5,628.5 L542.5,628.5 L541.6,628.5 L540.6,628.5 L539.6,628.5 L538.6,628.5 L537.6,628.5 L536.6,628.5 L535.7,628.5 L534.7,628.5 L533.7,628.5 L532.7,628.5 L531.7,628.5 L530.8,628.5 L529.8,628.5 L528.8,628.5 L527.8,628.5 L526.8,628.5 L525.8,628.5 L524.9,628.5 L523.9,628.5 L522.9,628.5 L521.9,628.5 L520.9,628.5 L520.0,628.5 L519.0,628.5 L518.0,628.5 L517.0,628.5 L516.0,628.5 L515.0,628.5 L514.1,628.5 L513.1,628.5 L512.1,628.5 L511.1,628.5 L510.1,628.5 L509.2,628.5 L508.2,628.5 L507.2,628.5 L506.2,628.5 L505.2,628.5 L504.2,628.5 L503.3,628.5 L502.3,628.5 L501.3,628.5 L500.3,628.5 L499.3,628.5 L498.3,628.5 L497.4,628.5 L496.4,628.5 L495.4,628.5 L494.4,628.5 L493.4,628.5 L492.5,628.5 L491.5,628.5 L490.5,628.5 L489.5,628.5 L488.5,628.5 L487.5,628.5 L486.6,628.5 L485.6,628.5 L484.6,628.5 L483.6,628.5 L482.6,628.5 L481.7,628.5 L480.7,628.5 L479.7,628.5 L478.7,628.5 L477.7,628.5 L476.7,628.5 L475.8,628.5 L474.8,628.5 L473.8,628.5 L472.8,628.5 L471.8,628.5 L470.9,628.5 L469.9,628.5 L468.9,628.5 L467.9,628.5 L466.9,628.5 L465.9,628.5 L465.0,628.5 L464.0,628.5 L463.0,628.5 L462.0,628.5 L461.0,628.5 L460.1,628.5 L459.1,628.5 L458.1,628.5 L457.1,628.5 L456.1,628.5 L455.1,628.5 L454.2,628.5 L453.2,628.5 L452.2,628.5 L451.2,628.5 L450.2,628.5 L449.3,628.5 L448.3,628.5 L447.3,628.5 L446.3,628.5 L445.3,628.5 L444.3,628.5 L443.4,628.5 L442.4,628.5 L441.4,628.5 L440.4,628.5 L439.4,628.5 L438.5,628.5 L437.5,628.5 L436.5,628.5 L435.5,628.5 L434.5,628.5 L433.5,628.5 L432.6,628.5 L431.6,628.5 L430.6,628.5 L429.6,628.5 L428.6,628.5 L427.7,628.5 L426.7,628.5 L425.7,628.5 L424.7,628.5 L423.7,628.5 L422.7,628.5 L421.8,628.5 L420.8,628.5 L419.8,628.5 L418.8,628.5 L417.8,628.5 L416.8,628.5 L415.9,628.5 L414.9,628.5 L413.9,628.5 L412.9,628.5 L411.9,628.5 L411.0,628.5 L410.0,628.5 L409.0,628.5 L408.0,628.5 L407.0,628.5 L406.0,628.5 L405.1,628.5 L404.1,628.5 L403.1,628.5 L402.1,628.5 L401.1,628.5 L400.2,628.5 L399.2,628.5 L398.2,628.5 L397.2,628.5 L396.2,628.5 L395.2,628.5 L394.3,628.5 L393.3,628.5 L392.3,628.5 L391.3,628.5 L390.3,628.5 L389.4,628.5 L388.4,628.5 L387.4,628.5 L386.4,628.5 L385.4,628.5 L384.4,628.5 L383.5,628.5 L382.5,628.5 L381.5,628.5 L380.5,628.5 L379.5,628.5 L378.6,628.5 L377.6,628.5 L376.6,628.5 L375.6,628.5 L374.6,628.5 L373.6,628.5 L372.7,628.5 L371.7,628.5 L370.7,628.5 L369.7,628.5 L368.7,628.5 L367.8,628.5 L366.8,628.5 L365.8,628.5 L364.8,628.5 L363.8,628.5 L362.8,628.5 L361.9,628.5 L360.9,628.5 L359.9,628.5 L358.9,628.5 L357.9,628.5 L357.0,628.5 L356.0,628.5 L355.0,628.5 L354.0,628.5 L353.0,628.5 L352.0,628.5 L351.1,628.5 L350.1,628.5 L349.1,628.5 L348.1,628.5 L347.1,628.5 L346.2,628.5 L345.2,628.5 L344.2,628.5 L343.2,628.5 L342.2,628.5 L341.2,628.5 L340.3,628.5 L339.3,628.5 L338.3,628.5 L337.3,628.5 L336.3,628.5 L335.3,628.5 L334.4,628.5 L333.4,628.5 L332.4,628.5 L331.4,628.5 L330.4,628.5 L329.5,628.5 L328.5,628.5 L327.5,628.5 L326.5,628.5 L325.5,628.5 L324.5,628.5 L323.6,628.5 L322.6,628.5 L321.6,628.5 L320.6,628.5 L319.6,628.5 L318.7,628.5 L317.7,628.5 L316.7,628.5 L315.7,628.5 L314.7,628.5 L313.7,628.5 L312.8,628.5 L311.8,628.5 L310.8,628.5 L309.8,628.5 L308.8,628.5 L307.9,628.5 L306.9,628.5 L305.9,628.5 L304.9,628.5 L303.9,628.5 L302.9,628.5 L302.0,628.5 L301.0,628.5 L300.0,628.5 Z" fill="#17577a"/><rect x="300" y="466.3" width="244.5" height="1" fill="#2a6a88" opacity="0.35"/><rect x="300" y="498.6" width="244.5" height="1" fill="#2a6a88" opacity="0.35"/><rect x="300" y="531.0" width="244.5" height="1" fill="#2a6a88" opacity="0.35"/><rect x="300" y="563.4" width="244.5" height="1" fill="#2a6a88" opacity="0.35"/><rect x="300" y="595.8" width="244.5" height="1" fill="#2a6a88" opacity="0.35"/><path d="M300.0,496.5 L301.0,452.8 L302.0,491.7 L302.9,508.3 L303.9,507.8 L304.9,484.1 L305.9,492.7 L306.9,473.3 L307.9,485.1 L308.8,454.0 L309.8,496.5 L310.8,490.4 L311.8,466.9 L312.8,474.0 L313.7,500.5 L314.7,478.8 L315.7,512.5 L316.7,508.1 L317.7,508.0 L318.7,452.7 L319.6,451.6 L320.6,467.4 L321.6,472.7 L322.6,498.2 L323.6,507.2 L324.5,487.6 L325.5,493.3 L326.5,488.4 L327.5,448.5 L328.5,485.0 L329.5,461.8 L330.4,476.9 L331.4,446.7 L332.4,494.5 L333.4,510.8 L334.4,451.1 L335.3,488.9 L336.3,447.7 L337.3,472.0 L338.3,457.8 L339.3,509.7 L340.3,499.9 L341.2,512.3 L342.2,462.1 L343.2,499.2 L344.2,497.8 L345.2,483.8 L346.2,513.8 L347.1,492.2 L348.1,466.9 L349.1,499.1 L350.1,481.6 L351.1,461.8 L352.0,491.7 L353.0,449.6 L354.0,479.2 L355.0,487.2 L356.0,446.2 L357.0,494.0 L357.9,452.5 L358.9,494.1 L359.9,471.2 L360.9,448.2 L361.9,520.0 L362.8,450.7 L363.8,457.6 L364.8,483.4 L365.8,464.1 L366.8,485.3 L367.8,481.1 L368.7,488.7 L369.7,486.2 L370.7,467.8 L371.7,461.6 L372.7,497.4 L373.6,477.7 L374.6,484.5 L375.6,513.8 L376.6,446.6 L377.6,466.5 L378.6,487.7 L379.5,450.0 L380.5,501.8 L381.5,475.7 L382.5,469.4 L383.5,460.4 L384.4,517.1 L385.4,449.4 L386.4,506.8 L387.4,498.1 L388.4,510.0 L389.4,497.9 L390.3,471.7 L391.3,486.7 L392.3,514.2 L393.3,449.0 L394.3,508.9 L395.2,495.8 L396.2,460.6 L397.2,517.5 L398.2,468.2 L399.2,446.3 L400.2,465.8 L401.1,484.1 L402.1,448.1 L403.1,489.8 L404.1,478.9 L405.1,470.6 L406.0,501.9 L407.0,491.8 L408.0,514.5 L409.0,510.4 L410.0,509.7 L411.0,515.0 L411.9,508.9 L412.9,482.0 L413.9,451.1 L414.9,479.1 L415.9,491.8 L416.8,517.7 L417.8,494.4 L418.8,488.5 L419.8,452.4 L420.8,494.1 L421.8,448.7 L422.7,456.6 L423.7,449.2 L424.7,500.2 L425.7,515.7 L426.7,490.0 L427.7,452.5 L428.6,500.7 L429.6,458.9 L430.6,498.5 L431.6,496.1 L432.6,515.9 L433.5,458.2 L434.5,463.3 L435.5,469.6 L436.5,451.7 L437.5,516.0 L438.5,492.1 L439.4,453.9 L440.4,481.4 L441.4,453.3 L442.4,517.3 L443.4,472.6 L444.3,446.2 L445.3,500.8 L446.3,470.5 L447.3,494.1 L448.3,503.9 L449.3,451.5 L450.2,486.4 L451.2,516.3 L452.2,462.8 L453.2,464.5 L454.2,495.9 L455.1,450.3 L456.1,506.7 L457.1,505.4 L458.1,516.0 L459.1,507.7 L460.1,489.0 L461.0,480.0 L462.0,485.7 L463.0,493.1 L464.0,518.3 L465.0,457.3 L465.9,482.6 L466.9,479.3 L467.9,464.2 L468.9,458.1 L469.9,504.0 L470.9,489.3 L471.8,497.0 L472.8,465.0 L473.8,481.5 L474.8,457.8 L475.8,457.2 L476.7,456.0 L477.7,494.0 L478.7,508.7 L479.7,488.3 L480.7,503.7 L481.7,451.8 L482.6,484.4 L483.6,456.3 L484.6,484.8 L485.6,464.4 L486.6,464.8 L487.5,514.0 L488.5,486.6 L489.5,464.0 L490.5,482.3 L491.5,467.0 L492.5,504.8 L493.4,475.4 L494.4,508.3 L495.4,490.0 L496.4,494.2 L497.4,491.0 L498.3,489.4 L499.3,450.6 L500.3,504.5 L501.3,491.4 L502.3,462.6 L503.3,482.8 L504.2,516.4 L505.2,494.4 L506.2,486.9 L507.2,485.3 L508.2,451.1 L509.2,482.7 L510.1,478.0 L511.1,493.6 L512.1,472.8 L513.1,456.7 L514.1,508.8 L515.0,464.4 L516.0,462.7 L517.0,478.2 L518.0,515.8 L519.0,497.8 L520.0,456.5 L520.9,453.1 L521.9,483.0 L522.9,450.6 L523.9,462.8 L524.9,454.4 L525.8,509.9 L526.8,511.5 L527.8,510.3 L528.8,494.4 L529.8,448.9 L530.8,466.4 L531.7,507.3 L532.7,449.0 L533.7,482.9 L534.7,504.9 L535.7,465.0 L536.6,471.7 L537.6,493.0 L538.6,494.5 L539.6,457.3 L540.6,504.5 L541.6,452.1 L542.5,457.9 L543.5,469.3 L544.5,460.9" fill="none" stroke="#7cc3c3" stroke-width="1.2"/><path d="M300.0,512.9 L301.0,514.3 L302.0,522.3 L302.9,531.2 L303.9,516.9 L304.9,514.7 L305.9,517.8 L306.9,532.8 L307.9,517.3 L308.8,532.3 L309.8,531.6 L310.8,516.9 L311.8,526.5 L312.8,525.0 L313.7,523.9 L314.7,540.1 L315.7,516.5 L316.7,512.1 L317.7,537.3 L318.7,524.9 L319.6,517.9 L320.6,520.9 L321.6,522.2 L322.6,538.8 L323.6,519.6 L324.5,517.9 L325.5,528.0 L326.5,528.0 L327.5,539.3 L328.5,537.2 L329.5,523.5 L330.4,517.9 L331.4,535.0 L332.4,541.0 L333.4,514.8 L334.4,531.9 L335.3,537.3 L336.3,531.8 L337.3,519.2 L338.3,534.0 L339.3,533.7 L340.3,518.7 L341.2,529.6 L342.2,519.0 L343.2,513.0 L344.2,520.6 L345.2,521.3 L346.2,523.1 L347.1,530.3 L348.1,536.3 L349.1,540.3 L350.1,541.2 L351.1,541.7 L352.0,536.1 L353.0,522.1 L354.0,517.0 L355.0,529.0 L356.0,528.0 L357.0,531.5 L357.9,515.7 L358.9,516.8 L359.9,537.3 L360.9,530.4 L361.9,532.3 L362.8,515.8 L363.8,522.6 L364.8,537.6 L365.8,531.8 L366.8,540.7 L367.8,519.5 L368.7,524.5 L369.7,534.7 L370.7,525.8 L371.7,534.5 L372.7,529.0 L373.6,516.1 L374.6,514.3 L375.6,538.8 L376.6,517.1 L377.6,517.0 L378.6,521.0 L379.5,531.9 L380.5,536.9 L381.5,526.9 L382.5,526.5 L383.5,534.5 L384.4,521.1 L385.4,522.4 L386.4,529.2 L387.4,530.6 L388.4,514.0 L389.4,514.4 L390.3,515.2 L391.3,531.7 L392.3,532.4 L393.3,540.3 L394.3,535.3 L395.2,520.5 L396.2,533.3 L397.2,540.7 L398.2,523.7 L399.2,512.6 L400.2,521.6 L401.1,519.9 L402.1,516.8 L403.1,512.8 L404.1,514.7 L405.1,535.5 L406.0,514.8 L407.0,528.5 L408.0,518.5 L409.0,517.1 L410.0,534.5 L411.0,521.7 L411.9,517.2 L412.9,524.3 L413.9,531.7 L414.9,527.7 L415.9,536.7 L416.8,524.8 L417.8,527.0 L418.8,532.6 L419.8,526.0 L420.8,532.5 L421.8,526.2 L422.7,516.2 L423.7,515.0 L424.7,533.2 L425.7,534.0 L426.7,539.6 L427.7,533.1 L428.6,529.4 L429.6,517.5 L430.6,535.4 L431.6,516.8 L432.6,523.4 L433.5,516.2 L434.5,522.1 L435.5,520.7 L436.5,523.8 L437.5,532.1 L438.5,528.2 L439.4,519.5 L440.4,533.6 L441.4,533.8 L442.4,536.4 L443.4,514.5 L444.3,528.5 L445.3,537.7 L446.3,520.9 L447.3,517.6 L448.3,534.4 L449.3,523.5 L450.2,523.4 L451.2,535.1 L452.2,524.1 L453.2,517.8 L454.2,517.7 L455.1,521.3 L456.1,531.5 L457.1,523.3 L458.1,533.7 L459.1,515.1 L460.1,518.4 L461.0,529.2 L462.0,526.2 L463.0,526.5 L464.0,538.6 L465.0,521.5 L465.9,517.1 L466.9,512.6 L467.9,524.6 L468.9,520.7 L469.9,525.2 L470.9,512.6 L471.8,511.2 L472.8,521.6 L473.8,533.2 L474.8,521.6 L475.8,537.5 L476.7,529.8 L477.7,524.1 L478.7,534.0 L479.7,519.8 L480.7,528.8 L481.7,536.4 L482.6,528.6 L483.6,521.7 L484.6,514.7 L485.6,527.4 L486.6,517.9 L487.5,522.1 L488.5,527.2 L489.5,538.9 L490.5,532.6 L491.5,527.6 L492.5,536.6 L493.4,522.2 L494.4,522.9 L495.4,531.1 L496.4,528.5 L497.4,518.9 L498.3,523.3 L499.3,535.2 L500.3,520.2 L501.3,531.6 L502.3,514.4 L503.3,538.0 L504.2,532.8 L505.2,522.2 L506.2,539.6 L507.2,536.1 L508.2,515.2 L509.2,518.4 L510.1,525.5 L511.1,540.3 L512.1,517.9 L513.1,513.0 L514.1,519.9 L515.0,513.1 L516.0,522.6 L517.0,527.2 L518.0,524.9 L519.0,516.3 L520.0,512.2 L520.9,533.5 L521.9,525.5 L522.9,525.8 L523.9,525.8 L524.9,531.6 L525.8,538.2 L526.8,536.8 L527.8,533.9 L528.8,522.7 L529.8,516.9 L530.8,514.1 L531.7,535.3 L532.7,515.0 L533.7,527.3 L534.7,538.0 L535.7,522.7 L536.6,523.0 L537.6,523.9 L538.6,538.6 L539.6,532.9 L540.6,536.6 L541.6,514.6 L542.5,531.7 L543.5,525.7 L544.5,523.7" fill="none" stroke="#3592e6" stroke-width="1.4"/><rect x="300" y="625" width="244.5" height="4" fill="#3b4d8c"/><rect x="300" y="540" width="2" height="89" fill="#3e558f"/></svg>
<div class="sq" style="left:275.8px;top:638px;background:#7a7ef0"></div>
<div class="lg" style="left:287.7px;top:634.8px">service1</div>
<div class="sq" style="left:338.5px;top:638px;background:#c8b8d0"></div>
<div class="lg" style="left:350px;top:634.8px">service2</div>
<div class="ax" style="left:557.5px;top:427.9px;width:60px;font-size:11px">21K</div>
<div class="a" style="left:624.5px;top:433.9px;width:243.5px;height:1px;background:#2c3144"></div>
<div class="ax" style="left:557.5px;top:455.6px;width:60px;font-size:11px">18K</div>
<div class="a" style="left:624.5px;top:461.6px;width:243.5px;height:1px;background:#2c3144"></div>
<div class="ax" style="left:557.5px;top:483.4px;width:60px;font-size:11px">15K</div>
<div class="a" style="left:624.5px;top:489.4px;width:243.5px;height:1px;background:#2c3144"></div>
<div class="ax" style="left:557.5px;top:511.1px;width:60px;font-size:11px">12K</div>
<div class="a" style="left:624.5px;top:517.1px;width:243.5px;height:1px;background:#2c3144"></div>
<div class="ax" style="left:557.5px;top:538.9px;width:60px;font-size:11px">9K</div>
<div class="a" style="left:624.5px;top:544.9px;width:243.5px;height:1px;background:#2c3144"></div>
<div class="ax" style="left:557.5px;top:566.6px;width:60px;font-size:11px">6K</div>
<div class="a" style="left:624.5px;top:572.6px;width:243.5px;height:1px;background:#2c3144"></div>
<div class="ax" style="left:557.5px;top:594.3px;width:60px;font-size:11px">3K</div>
<div class="a" style="left:624.5px;top:600.3px;width:243.5px;height:1px;background:#2c3144"></div>
<div class="ax" style="left:557.5px;top:622.1px;width:60px;font-size:11px">0K</div>
<div class="a" style="left:624.5px;top:628.1px;width:243.5px;height:1px;background:#2c3144"></div>
<svg style="left:620px;top:430px;width:252px;height:215px" viewBox="620 430 252 215"><rect x="624.5" y="447.5" width="243.5" height="49" fill="#0e3c3c"/><clipPath id="ec"><rect x="620" y="440" width="260" height="57"/></clipPath><path d="M624.5,467.9 L625.5,460.3 L626.5,456.0 L627.4,487.5 L628.4,479.3 L629.4,482.5 L630.4,477.2 L631.3,468.8 L632.3,482.2 L633.3,478.1 L634.3,486.2 L635.3,482.6 L636.2,489.6 L637.2,473.7 L638.2,458.2 L639.2,454.9 L640.1,479.0 L641.1,459.8 L642.1,477.0 L643.1,479.0 L644.1,455.2 L645.0,481.7 L646.0,454.6 L647.0,485.2 L648.0,490.2 L648.9,464.2 L649.9,481.0 L650.9,484.6 L651.9,459.1 L652.9,477.6 L653.8,457.7 L654.8,487.8 L655.8,484.1 L656.8,496.0 L657.7,458.3 L658.7,462.2 L659.7,476.0 L660.7,478.3 L661.7,460.3 L662.6,487.2 L663.6,490.8 L664.6,468.0 L665.6,456.7 L666.6,477.0 L667.5,469.8 L668.5,479.4 L669.5,474.0 L670.5,468.7 L671.4,451.5 L672.4,452.9 L673.4,467.2 L674.4,481.7 L675.4,471.5 L676.3,483.3 L677.3,476.8 L678.3,490.2 L679.3,483.1 L680.2,467.3 L681.2,456.3 L682.2,450.9 L683.2,448.7 L684.2,483.8 L685.1,491.3 L686.1,487.5 L687.1,459.0 L688.1,477.1 L689.0,457.7 L690.0,486.8 L691.0,482.5 L692.0,485.7 L693.0,480.2 L693.9,470.9 L694.9,487.6 L695.9,495.9 L696.9,466.4 L697.8,469.0 L698.8,482.3 L699.8,482.6 L700.8,471.1 L701.8,470.5 L702.7,492.7 L703.7,467.3 L704.7,459.4 L705.7,478.3 L706.6,464.4 L707.6,488.5 L708.6,468.6 L709.6,490.5 L710.6,471.3 L711.5,489.3 L712.5,487.1 L713.5,485.8 L714.5,463.2 L715.4,456.5 L716.4,449.4 L717.4,454.5 L718.4,476.5 L719.4,454.9 L720.3,458.0 L721.3,472.9 L722.3,458.1 L723.3,462.6 L724.2,459.2 L725.2,477.8 L726.2,457.5 L727.2,491.4 L728.2,480.9 L729.1,483.8 L730.1,477.4 L731.1,473.8 L732.1,493.5 L733.0,494.1 L734.0,491.1 L735.0,456.3 L736.0,473.5 L737.0,492.2 L737.9,482.8 L738.9,475.5 L739.9,480.0 L740.9,460.4 L741.8,480.3 L742.8,486.7 L743.8,457.2 L744.8,470.3 L745.8,476.6 L746.7,467.3 L747.7,479.7 L748.7,492.6 L749.7,494.5 L750.7,469.0 L751.6,457.2 L752.6,485.1 L753.6,480.3 L754.6,488.7 L755.5,492.1 L756.5,467.3 L757.5,475.6 L758.5,465.0 L759.5,484.3 L760.4,483.5 L761.4,463.8 L762.4,471.2 L763.4,476.7 L764.3,462.2 L765.3,457.1 L766.3,468.7 L767.3,453.7 L768.3,468.9 L769.2,491.2 L770.2,490.7 L771.2,457.3 L772.2,483.9 L773.1,484.5 L774.1,484.3 L775.1,454.8 L776.1,480.6 L777.1,461.4 L778.0,483.8 L779.0,467.5 L780.0,466.1 L781.0,457.5 L781.9,485.8 L782.9,463.5 L783.9,487.2 L784.9,476.4 L785.9,458.5 L786.8,476.8 L787.8,475.1 L788.8,453.0 L789.8,483.0 L790.7,465.1 L791.7,450.9 L792.7,480.1 L793.7,484.2 L794.7,470.3 L795.6,458.9 L796.6,471.3 L797.6,476.4 L798.6,481.9 L799.5,474.3 L800.5,476.2 L801.5,483.2 L802.5,461.6 L803.5,456.9 L804.4,469.1 L805.4,483.2 L806.4,488.1 L807.4,491.3 L808.3,474.0 L809.3,482.4 L810.3,457.9 L811.3,465.2 L812.3,452.7 L813.2,483.4 L814.2,496.7 L815.2,485.1 L816.2,486.3 L817.1,470.1 L818.1,485.2 L819.1,457.5 L820.1,464.3 L821.1,464.8 L822.0,487.1 L823.0,461.7 L824.0,456.0 L825.0,451.9 L825.9,483.6 L826.9,467.1 L827.9,489.2 L828.9,468.2 L829.9,486.6 L830.8,462.5 L831.8,488.3 L832.8,496.5 L833.8,494.1 L834.8,485.5 L835.7,492.6 L836.7,494.8 L837.7,497.4 L838.7,468.2 L839.6,487.2 L840.6,487.9 L841.6,469.3 L842.6,457.9 L843.6,487.3 L844.5,474.7 L845.5,474.6 L846.5,490.0 L847.5,475.7 L848.4,462.8 L849.4,479.0 L850.4,475.6 L851.4,463.7 L852.4,479.4 L853.3,491.7 L854.3,465.8 L855.3,485.1 L856.3,486.4 L857.2,476.6 L858.2,460.5 L859.2,477.6 L860.2,464.5 L861.2,460.5 L862.1,485.8 L863.1,465.6 L864.1,453.9 L865.1,484.1 L866.0,496.6 L867.0,469.3 L868.0,468.2 L868.0,628.5 L867.0,628.5 L866.0,628.5 L865.1,628.5 L864.1,628.5 L863.1,628.5 L862.1,628.5 L861.2,628.5 L860.2,628.5 L859.2,628.5 L858.2,628.5 L857.2,628.5 L856.3,628.5 L855.3,628.5 L854.3,628.5 L853.3,628.5 L852.4,628.5 L851.4,628.5 L850.4,628.5 L849.4,628.5 L848.4,628.5 L847.5,628.5 L846.5,628.5 L845.5,628.5 L844.5,628.5 L843.6,628.5 L842.6,628.5 L841.6,628.5 L840.6,628.5 L839.6,628.5 L838.7,628.5 L837.7,628.5 L836.7,628.5 L835.7,628.5 L834.8,628.5 L833.8,628.5 L832.8,628.5 L831.8,628.5 L830.8,628.5 L829.9,628.5 L828.9,628.5 L827.9,628.5 L826.9,628.5 L825.9,628.5 L825.0,628.5 L824.0,628.5 L823.0,628.5 L822.0,628.5 L821.1,628.5 L820.1,628.5 L819.1,628.5 L818.1,628.5 L817.1,628.5 L816.2,628.5 L815.2,628.5 L814.2,628.5 L813.2,628.5 L812.3,628.5 L811.3,628.5 L810.3,628.5 L809.3,628.5 L808.3,628.5 L807.4,628.5 L806.4,628.5 L805.4,628.5 L804.4,628.5 L803.5,628.5 L802.5,628.5 L801.5,628.5 L800.5,628.5 L799.5,628.5 L798.6,628.5 L797.6,628.5 L796.6,628.5 L795.6,628.5 L794.7,628.5 L793.7,628.5 L792.7,628.5 L791.7,628.5 L790.7,628.5 L789.8,628.5 L788.8,628.5 L787.8,628.5 L786.8,628.5 L785.9,628.5 L784.9,628.5 L783.9,628.5 L782.9,628.5 L781.9,628.5 L781.0,628.5 L780.0,628.5 L779.0,628.5 L778.0,628.5 L777.1,628.5 L776.1,628.5 L775.1,628.5 L774.1,628.5 L773.1,628.5 L772.2,628.5 L771.2,628.5 L770.2,628.5 L769.2,628.5 L768.3,628.5 L767.3,628.5 L766.3,628.5 L765.3,628.5 L764.3,628.5 L763.4,628.5 L762.4,628.5 L761.4,628.5 L760.4,628.5 L759.5,628.5 L758.5,628.5 L757.5,628.5 L756.5,628.5 L755.5,628.5 L754.6,628.5 L753.6,628.5 L752.6,628.5 L751.6,628.5 L750.7,628.5 L749.7,628.5 L748.7,628.5 L747.7,628.5 L746.7,628.5 L745.8,628.5 L744.8,628.5 L743.8,628.5 L742.8,628.5 L741.8,628.5 L740.9,628.5 L739.9,628.5 L738.9,628.5 L737.9,628.5 L737.0,628.5 L736.0,628.5 L735.0,628.5 L734.0,628.5 L733.0,628.5 L732.1,628.5 L731.1,628.5 L730.1,628.5 L729.1,628.5 L728.2,628.5 L727.2,628.5 L726.2,628.5 L725.2,628.5 L724.2,628.5 L723.3,628.5 L722.3,628.5 L721.3,628.5 L720.3,628.5 L719.4,628.5 L718.4,628.5 L717.4,628.5 L716.4,628.5 L715.4,628.5 L714.5,628.5 L713.5,628.5 L712.5,628.5 L711.5,628.5 L710.6,628.5 L709.6,628.5 L708.6,628.5 L707.6,628.5 L706.6,628.5 L705.7,628.5 L704.7,628.5 L703.7,628.5 L702.7,628.5 L701.8,628.5 L700.8,628.5 L699.8,628.5 L698.8,628.5 L697.8,628.5 L696.9,628.5 L695.9,628.5 L694.9,628.5 L693.9,628.5 L693.0,628.5 L692.0,628.5 L691.0,628.5 L690.0,628.5 L689.0,628.5 L688.1,628.5 L687.1,628.5 L686.1,628.5 L685.1,628.5 L684.2,628.5 L683.2,628.5 L682.2,628.5 L681.2,628.5 L680.2,628.5 L679.3,628.5 L678.3,628.5 L677.3,628.5 L676.3,628.5 L675.4,628.5 L674.4,628.5 L673.4,628.5 L672.4,628.5 L671.4,628.5 L670.5,628.5 L669.5,628.5 L668.5,628.5 L667.5,628.5 L666.6,628.5 L665.6,628.5 L664.6,628.5 L663.6,628.5 L662.6,628.5 L661.7,628.5 L660.7,628.5 L659.7,628.5 L658.7,628.5 L657.7,628.5 L656.8,628.5 L655.8,628.5 L654.8,628.5 L653.8,628.5 L652.9,628.5 L651.9,628.5 L650.9,628.5 L649.9,628.5 L648.9,628.5 L648.0,628.5 L647.0,628.5 L646.0,628.5 L645.0,628.5 L644.1,628.5 L643.1,628.5 L642.1,628.5 L641.1,628.5 L640.1,628.5 L639.2,628.5 L638.2,628.5 L637.2,628.5 L636.2,628.5 L635.3,628.5 L634.3,628.5 L633.3,628.5 L632.3,628.5 L631.3,628.5 L630.4,628.5 L629.4,628.5 L628.4,628.5 L627.4,628.5 L626.5,628.5 L625.5,628.5 L624.5,628.5 Z" fill="#17577a"/><path d="M624.5,467.9 L625.5,460.3 L626.5,456.0 L627.4,487.5 L628.4,479.3 L629.4,482.5 L630.4,477.2 L631.3,468.8 L632.3,482.2 L633.3,478.1 L634.3,486.2 L635.3,482.6 L636.2,489.6 L637.2,473.7 L638.2,458.2 L639.2,454.9 L640.1,479.0 L641.1,459.8 L642.1,477.0 L643.1,479.0 L644.1,455.2 L645.0,481.7 L646.0,454.6 L647.0,485.2 L648.0,490.2 L648.9,464.2 L649.9,481.0 L650.9,484.6 L651.9,459.1 L652.9,477.6 L653.8,457.7 L654.8,487.8 L655.8,484.1 L656.8,496.0 L657.7,458.3 L658.7,462.2 L659.7,476.0 L660.7,478.3 L661.7,460.3 L662.6,487.2 L663.6,490.8 L664.6,468.0 L665.6,456.7 L666.6,477.0 L667.5,469.8 L668.5,479.4 L669.5,474.0 L670.5,468.7 L671.4,451.5 L672.4,452.9 L673.4,467.2 L674.4,481.7 L675.4,471.5 L676.3,483.3 L677.3,476.8 L678.3,490.2 L679.3,483.1 L680.2,467.3 L681.2,456.3 L682.2,450.9 L683.2,448.7 L684.2,483.8 L685.1,491.3 L686.1,487.5 L687.1,459.0 L688.1,477.1 L689.0,457.7 L690.0,486.8 L691.0,482.5 L692.0,485.7 L693.0,480.2 L693.9,470.9 L694.9,487.6 L695.9,495.9 L696.9,466.4 L697.8,469.0 L698.8,482.3 L699.8,482.6 L700.8,471.1 L701.8,470.5 L702.7,492.7 L703.7,467.3 L704.7,459.4 L705.7,478.3 L706.6,464.4 L707.6,488.5 L708.6,468.6 L709.6,490.5 L710.6,471.3 L711.5,489.3 L712.5,487.1 L713.5,485.8 L714.5,463.2 L715.4,456.5 L716.4,449.4 L717.4,454.5 L718.4,476.5 L719.4,454.9 L720.3,458.0 L721.3,472.9 L722.3,458.1 L723.3,462.6 L724.2,459.2 L725.2,477.8 L726.2,457.5 L727.2,491.4 L728.2,480.9 L729.1,483.8 L730.1,477.4 L731.1,473.8 L732.1,493.5 L733.0,494.1 L734.0,491.1 L735.0,456.3 L736.0,473.5 L737.0,492.2 L737.9,482.8 L738.9,475.5 L739.9,480.0 L740.9,460.4 L741.8,480.3 L742.8,486.7 L743.8,457.2 L744.8,470.3 L745.8,476.6 L746.7,467.3 L747.7,479.7 L748.7,492.6 L749.7,494.5 L750.7,469.0 L751.6,457.2 L752.6,485.1 L753.6,480.3 L754.6,488.7 L755.5,492.1 L756.5,467.3 L757.5,475.6 L758.5,465.0 L759.5,484.3 L760.4,483.5 L761.4,463.8 L762.4,471.2 L763.4,476.7 L764.3,462.2 L765.3,457.1 L766.3,468.7 L767.3,453.7 L768.3,468.9 L769.2,491.2 L770.2,490.7 L771.2,457.3 L772.2,483.9 L773.1,484.5 L774.1,484.3 L775.1,454.8 L776.1,480.6 L777.1,461.4 L778.0,483.8 L779.0,467.5 L780.0,466.1 L781.0,457.5 L781.9,485.8 L782.9,463.5 L783.9,487.2 L784.9,476.4 L785.9,458.5 L786.8,476.8 L787.8,475.1 L788.8,453.0 L789.8,483.0 L790.7,465.1 L791.7,450.9 L792.7,480.1 L793.7,484.2 L794.7,470.3 L795.6,458.9 L796.6,471.3 L797.6,476.4 L798.6,481.9 L799.5,474.3 L800.5,476.2 L801.5,483.2 L802.5,461.6 L803.5,456.9 L804.4,469.1 L805.4,483.2 L806.4,488.1 L807.4,491.3 L808.3,474.0 L809.3,482.4 L810.3,457.9 L811.3,465.2 L812.3,452.7 L813.2,483.4 L814.2,496.7 L815.2,485.1 L816.2,486.3 L817.1,470.1 L818.1,485.2 L819.1,457.5 L820.1,464.3 L821.1,464.8 L822.0,487.1 L823.0,461.7 L824.0,456.0 L825.0,451.9 L825.9,483.6 L826.9,467.1 L827.9,489.2 L828.9,468.2 L829.9,486.6 L830.8,462.5 L831.8,488.3 L832.8,496.5 L833.8,494.1 L834.8,485.5 L835.7,492.6 L836.7,494.8 L837.7,497.4 L838.7,468.2 L839.6,487.2 L840.6,487.9 L841.6,469.3 L842.6,457.9 L843.6,487.3 L844.5,474.7 L845.5,474.6 L846.5,490.0 L847.5,475.7 L848.4,462.8 L849.4,479.0 L850.4,475.6 L851.4,463.7 L852.4,479.4 L853.3,491.7 L854.3,465.8 L855.3,485.1 L856.3,486.4 L857.2,476.6 L858.2,460.5 L859.2,477.6 L860.2,464.5 L861.2,460.5 L862.1,485.8 L863.1,465.6 L864.1,453.9 L865.1,484.1 L866.0,496.6 L867.0,469.3 L868.0,468.2 L868.0,628.5 L867.0,628.5 L866.0,628.5 L865.1,628.5 L864.1,628.5 L863.1,628.5 L862.1,628.5 L861.2,628.5 L860.2,628.5 L859.2,628.5 L858.2,628.5 L857.2,628.5 L856.3,628.5 L855.3,628.5 L854.3,628.5 L853.3,628.5 L852.4,628.5 L851.4,628.5 L850.4,628.5 L849.4,628.5 L848.4,628.5 L847.5,628.5 L846.5,628.5 L845.5,628.5 L844.5,628.5 L843.6,628.5 L842.6,628.5 L841.6,628.5 L840.6,628.5 L839.6,628.5 L838.7,628.5 L837.7,628.5 L836.7,628.5 L835.7,628.5 L834.8,628.5 L833.8,628.5 L832.8,628.5 L831.8,628.5 L830.8,628.5 L829.9,628.5 L828.9,628.5 L827.9,628.5 L826.9,628.5 L825.9,628.5 L825.0,628.5 L824.0,628.5 L823.0,628.5 L822.0,628.5 L821.1,628.5 L820.1,628.5 L819.1,628.5 L818.1,628.5 L817.1,628.5 L816.2,628.5 L815.2,628.5 L814.2,628.5 L813.2,628.5 L812.3,628.5 L811.3,628.5 L810.3,628.5 L809.3,628.5 L808.3,628.5 L807.4,628.5 L806.4,628.5 L805.4,628.5 L804.4,628.5 L803.5,628.5 L802.5,628.5 L801.5,628.5 L800.5,628.5 L799.5,628.5 L798.6,628.5 L797.6,628.5 L796.6,628.5 L795.6,628.5 L794.7,628.5 L793.7,628.5 L792.7,628.5 L791.7,628.5 L790.7,628.5 L789.8,628.5 L788.8,628.5 L787.8,628.5 L786.8,628.5 L785.9,628.5 L784.9,628.5 L783.9,628.5 L782.9,628.5 L781.9,628.5 L781.0,628.5 L780.0,628.5 L779.0,628.5 L778.0,628.5 L777.1,628.5 L776.1,628.5 L775.1,628.5 L774.1,628.5 L773.1,628.5 L772.2,628.5 L771.2,628.5 L770.2,628.5 L769.2,628.5 L768.3,628.5 L767.3,628.5 L766.3,628.5 L765.3,628.5 L764.3,628.5 L763.4,628.5 L762.4,628.5 L761.4,628.5 L760.4,628.5 L759.5,628.5 L758.5,628.5 L757.5,628.5 L756.5,628.5 L755.5,628.5 L754.6,628.5 L753.6,628.5 L752.6,628.5 L751.6,628.5 L750.7,628.5 L749.7,628.5 L748.7,628.5 L747.7,628.5 L746.7,628.5 L745.8,628.5 L744.8,628.5 L743.8,628.5 L742.8,628.5 L741.8,628.5 L740.9,628.5 L739.9,628.5 L738.9,628.5 L737.9,628.5 L737.0,628.5 L736.0,628.5 L735.0,628.5 L734.0,628.5 L733.0,628.5 L732.1,628.5 L731.1,628.5 L730.1,628.5 L729.1,628.5 L728.2,628.5 L727.2,628.5 L726.2,628.5 L725.2,628.5 L724.2,628.5 L723.3,628.5 L722.3,628.5 L721.3,628.5 L720.3,628.5 L719.4,628.5 L718.4,628.5 L717.4,628.5 L716.4,628.5 L715.4,628.5 L714.5,628.5 L713.5,628.5 L712.5,628.5 L711.5,628.5 L710.6,628.5 L709.6,628.5 L708.6,628.5 L707.6,628.5 L706.6,628.5 L705.7,628.5 L704.7,628.5 L703.7,628.5 L702.7,628.5 L701.8,628.5 L700.8,628.5 L699.8,628.5 L698.8,628.5 L697.8,628.5 L696.9,628.5 L695.9,628.5 L694.9,628.5 L693.9,628.5 L693.0,628.5 L692.0,628.5 L691.0,628.5 L690.0,628.5 L689.0,628.5 L688.1,628.5 L687.1,628.5 L686.1,628.5 L685.1,628.5 L684.2,628.5 L683.2,628.5 L682.2,628.5 L681.2,628.5 L680.2,628.5 L679.3,628.5 L678.3,628.5 L677.3,628.5 L676.3,628.5 L675.4,628.5 L674.4,628.5 L673.4,628.5 L672.4,628.5 L671.4,628.5 L670.5,628.5 L669.5,628.5 L668.5,628.5 L667.5,628.5 L666.6,628.5 L665.6,628.5 L664.6,628.5 L663.6,628.5 L662.6,628.5 L661.7,628.5 L660.7,628.5 L659.7,628.5 L658.7,628.5 L657.7,628.5 L656.8,628.5 L655.8,628.5 L654.8,628.5 L653.8,628.5 L652.9,628.5 L651.9,628.5 L650.9,628.5 L649.9,628.5 L648.9,628.5 L648.0,628.5 L647.0,628.5 L646.0,628.5 L645.0,628.5 L644.1,628.5 L643.1,628.5 L642.1,628.5 L641.1,628.5 L640.1,628.5 L639.2,628.5 L638.2,628.5 L637.2,628.5 L636.2,628.5 L635.3,628.5 L634.3,628.5 L633.3,628.5 L632.3,628.5 L631.3,628.5 L630.4,628.5 L629.4,628.5 L628.4,628.5 L627.4,628.5 L626.5,628.5 L625.5,628.5 L624.5,628.5 Z" fill="#185c7b" clip-path="url(#ec)"/><rect x="624.5" y="489.4" width="243.5" height="1" fill="#2a6a88" opacity="0.35"/><rect x="624.5" y="517.1" width="243.5" height="1" fill="#2a6a88" opacity="0.35"/><rect x="624.5" y="544.9" width="243.5" height="1" fill="#2a6a88" opacity="0.35"/><rect x="624.5" y="572.6" width="243.5" height="1" fill="#2a6a88" opacity="0.35"/><rect x="624.5" y="600.3" width="243.5" height="1" fill="#2a6a88" opacity="0.35"/><path d="M624.5,467.9 L625.5,460.3 L626.5,456.0 L627.4,487.5 L628.4,479.3 L629.4,482.5 L630.4,477.2 L631.3,468.8 L632.3,482.2 L633.3,478.1 L634.3,486.2 L635.3,482.6 L636.2,489.6 L637.2,473.7 L638.2,458.2 L639.2,454.9 L640.1,479.0 L641.1,459.8 L642.1,477.0 L643.1,479.0 L644.1,455.2 L645.0,481.7 L646.0,454.6 L647.0,485.2 L648.0,490.2 L648.9,464.2 L649.9,481.0 L650.9,484.6 L651.9,459.1 L652.9,477.6 L653.8,457.7 L654.8,487.8 L655.8,484.1 L656.8,496.0 L657.7,458.3 L658.7,462.2 L659.7,476.0 L660.7,478.3 L661.7,460.3 L662.6,487.2 L663.6,490.8 L664.6,468.0 L665.6,456.7 L666.6,477.0 L667.5,469.8 L668.5,479.4 L669.5,474.0 L670.5,468.7 L671.4,451.5 L672.4,452.9 L673.4,467.2 L674.4,481.7 L675.4,471.5 L676.3,483.3 L677.3,476.8 L678.3,490.2 L679.3,483.1 L680.2,467.3 L681.2,456.3 L682.2,450.9 L683.2,448.7 L684.2,483.8 L685.1,491.3 L686.1,487.5 L687.1,459.0 L688.1,477.1 L689.0,457.7 L690.0,486.8 L691.0,482.5 L692.0,485.7 L693.0,480.2 L693.9,470.9 L694.9,487.6 L695.9,495.9 L696.9,466.4 L697.8,469.0 L698.8,482.3 L699.8,482.6 L700.8,471.1 L701.8,470.5 L702.7,492.7 L703.7,467.3 L704.7,459.4 L705.7,478.3 L706.6,464.4 L707.6,488.5 L708.6,468.6 L709.6,490.5 L710.6,471.3 L711.5,489.3 L712.5,487.1 L713.5,485.8 L714.5,463.2 L715.4,456.5 L716.4,449.4 L717.4,454.5 L718.4,476.5 L719.4,454.9 L720.3,458.0 L721.3,472.9 L722.3,458.1 L723.3,462.6 L724.2,459.2 L725.2,477.8 L726.2,457.5 L727.2,491.4 L728.2,480.9 L729.1,483.8 L730.1,477.4 L731.1,473.8 L732.1,493.5 L733.0,494.1 L734.0,491.1 L735.0,456.3 L736.0,473.5 L737.0,492.2 L737.9,482.8 L738.9,475.5 L739.9,480.0 L740.9,460.4 L741.8,480.3 L742.8,486.7 L743.8,457.2 L744.8,470.3 L745.8,476.6 L746.7,467.3 L747.7,479.7 L748.7,492.6 L749.7,494.5 L750.7,469.0 L751.6,457.2 L752.6,485.1 L753.6,480.3 L754.6,488.7 L755.5,492.1 L756.5,467.3 L757.5,475.6 L758.5,465.0 L759.5,484.3 L760.4,483.5 L761.4,463.8 L762.4,471.2 L763.4,476.7 L764.3,462.2 L765.3,457.1 L766.3,468.7 L767.3,453.7 L768.3,468.9 L769.2,491.2 L770.2,490.7 L771.2,457.3 L772.2,483.9 L773.1,484.5 L774.1,484.3 L775.1,454.8 L776.1,480.6 L777.1,461.4 L778.0,483.8 L779.0,467.5 L780.0,466.1 L781.0,457.5 L781.9,485.8 L782.9,463.5 L783.9,487.2 L784.9,476.4 L785.9,458.5 L786.8,476.8 L787.8,475.1 L788.8,453.0 L789.8,483.0 L790.7,465.1 L791.7,450.9 L792.7,480.1 L793.7,484.2 L794.7,470.3 L795.6,458.9 L796.6,471.3 L797.6,476.4 L798.6,481.9 L799.5,474.3 L800.5,476.2 L801.5,483.2 L802.5,461.6 L803.5,456.9 L804.4,469.1 L805.4,483.2 L806.4,488.1 L807.4,491.3 L808.3,474.0 L809.3,482.4 L810.3,457.9 L811.3,465.2 L812.3,452.7 L813.2,483.4 L814.2,496.7 L815.2,485.1 L816.2,486.3 L817.1,470.1 L818.1,485.2 L819.1,457.5 L820.1,464.3 L821.1,464.8 L822.0,487.1 L823.0,461.7 L824.0,456.0 L825.0,451.9 L825.9,483.6 L826.9,467.1 L827.9,489.2 L828.9,468.2 L829.9,486.6 L830.8,462.5 L831.8,488.3 L832.8,496.5 L833.8,494.1 L834.8,485.5 L835.7,492.6 L836.7,494.8 L837.7,497.4 L838.7,468.2 L839.6,487.2 L840.6,487.9 L841.6,469.3 L842.6,457.9 L843.6,487.3 L844.5,474.7 L845.5,474.6 L846.5,490.0 L847.5,475.7 L848.4,462.8 L849.4,479.0 L850.4,475.6 L851.4,463.7 L852.4,479.4 L853.3,491.7 L854.3,465.8 L855.3,485.1 L856.3,486.4 L857.2,476.6 L858.2,460.5 L859.2,477.6 L860.2,464.5 L861.2,460.5 L862.1,485.8 L863.1,465.6 L864.1,453.9 L865.1,484.1 L866.0,496.6 L867.0,469.3 L868.0,468.2" fill="none" stroke="#3d96e8" stroke-width="1.4"/><rect x="624.5" y="625" width="243.5" height="4" fill="#3b4d8c"/></svg>
<div class="sq" style="left:600px;top:638px;background:#6b7ff0"></div>
<div class="lg" style="left:611.3px;top:634.8px">Requests per second</div>
<div class="ax" style="left:881.8px;top:427.9px;width:60px;font-size:11px">25K</div>
<div class="a" style="left:948.5px;top:433.9px;width:244.0px;height:1px;background:#2c3144"></div>
<div class="ax" style="left:881.8px;top:466.8px;width:60px;font-size:11px">20K</div>
<div class="a" style="left:948.5px;top:472.8px;width:244.0px;height:1px;background:#2c3144"></div>
<div class="ax" style="left:881.8px;top:505.6px;width:60px;font-size:11px">15K</div>
<div class="a" style="left:948.5px;top:511.6px;width:244.0px;height:1px;background:#2c3144"></div>
<div class="ax" style="left:881.8px;top:544.5px;width:60px;font-size:11px">10K</div>
<div class="a" style="left:948.5px;top:550.5px;width:244.0px;height:1px;background:#2c3144"></div>
<div class="ax" style="left:881.8px;top:583.3px;width:60px;font-size:11px">5K</div>
<div class="a" style="left:948.5px;top:589.3px;width:244.0px;height:1px;background:#2c3144"></div>
<div class="ax" style="left:881.8px;top:622.2px;width:60px;font-size:11px">0K</div>
<div class="a" style="left:948.5px;top:628.2px;width:244.0px;height:1px;background:#2c3144"></div>
<svg style="left:944px;top:430px;width:252px;height:202px" viewBox="944 430 252 202"><rect x="948" y="448" width="245" height="16" fill="#3a1a34"/><rect x="948.5" y="464" width="244.0" height="14" fill="#a9586e"/><rect x="948.5" y="478" width="244.0" height="18" fill="#7a3a58"/><rect x="948.5" y="496" width="244.0" height="16" fill="#9a8a2c"/><rect x="948.5" y="512" width="244.0" height="15" fill="#21857a"/><rect x="948.5" y="527" width="244.0" height="18" fill="#2c6670"/><path d="M948.5,544.0 L949.6,549.5 L950.6,542.0 L951.7,556.7 L952.8,544.4 L953.8,550.7 L954.9,560.0 L956.0,548.6 L957.0,560.8 L958.1,556.5 L959.2,551.8 L960.2,553.2 L961.3,552.3 L962.4,547.0 L963.4,561.3 L964.5,548.9 L965.5,561.2 L966.6,559.4 L967.7,539.9 L968.7,543.3 L969.8,548.8 L970.9,557.2 L971.9,543.2 L973.0,552.0 L974.1,547.1 L975.1,556.4 L976.2,560.6 L977.3,557.2 L978.3,543.5 L979.4,555.4 L980.5,549.1 L981.5,557.8 L982.6,550.1 L983.7,559.5 L984.7,562.3 L985.8,558.8 L986.9,558.5 L987.9,558.3 L989.0,553.0 L990.1,542.7 L991.1,560.6 L992.2,550.2 L993.3,538.7 L994.3,547.3 L995.4,547.7 L996.4,542.8 L997.5,560.0 L998.6,541.9 L999.6,558.6 L1000.7,552.0 L1001.8,542.7 L1002.8,546.0 L1003.9,548.4 L1005.0,540.9 L1006.0,555.2 L1007.1,554.1 L1008.2,561.7 L1009.2,558.9 L1010.3,557.6 L1011.4,562.4 L1012.4,561.3 L1013.5,554.5 L1014.6,551.4 L1015.6,550.7 L1016.7,557.4 L1017.8,560.7 L1018.8,558.8 L1019.9,558.8 L1021.0,539.8 L1022.0,547.1 L1023.1,540.1 L1024.2,551.0 L1025.2,552.0 L1026.3,551.6 L1027.3,558.5 L1028.4,544.4 L1029.5,554.8 L1030.5,552.5 L1031.6,543.5 L1032.7,560.5 L1033.7,540.6 L1034.8,548.2 L1035.9,550.7 L1036.9,552.3 L1038.0,561.5 L1039.1,552.4 L1040.1,559.3 L1041.2,546.1 L1042.3,549.2 L1043.3,541.7 L1044.4,552.4 L1045.5,548.4 L1046.5,556.5 L1047.6,541.6 L1048.7,548.3 L1049.7,560.6 L1050.8,539.6 L1051.9,552.7 L1052.9,554.4 L1054.0,555.7 L1055.1,551.9 L1056.1,550.2 L1057.2,560.8 L1058.2,546.0 L1059.3,554.4 L1060.4,554.4 L1061.4,555.8 L1062.5,550.1 L1063.6,538.7 L1064.6,555.3 L1065.7,545.4 L1066.8,556.1 L1067.8,562.0 L1068.9,557.7 L1070.0,548.5 L1071.0,558.2 L1072.1,548.2 L1073.2,545.6 L1074.2,551.2 L1075.3,553.7 L1076.4,554.7 L1077.4,551.7 L1078.5,548.0 L1079.6,555.5 L1080.6,546.4 L1081.7,552.1 L1082.8,538.6 L1083.8,540.2 L1084.9,557.6 L1085.9,544.1 L1087.0,547.4 L1088.1,539.3 L1089.1,555.1 L1090.2,546.5 L1091.3,539.1 L1092.3,543.6 L1093.4,559.4 L1094.5,556.9 L1095.5,539.1 L1096.6,559.5 L1097.7,540.9 L1098.7,548.7 L1099.8,550.7 L1100.9,556.7 L1101.9,542.3 L1103.0,556.8 L1104.1,545.4 L1105.1,555.1 L1106.2,560.5 L1107.3,553.2 L1108.3,538.7 L1109.4,552.8 L1110.5,548.8 L1111.5,555.3 L1112.6,557.2 L1113.7,541.5 L1114.7,550.7 L1115.8,553.4 L1116.8,560.3 L1117.9,553.7 L1119.0,553.1 L1120.0,556.6 L1121.1,542.7 L1122.2,557.7 L1123.2,552.7 L1124.3,553.5 L1125.4,542.3 L1126.4,549.8 L1127.5,547.9 L1128.6,542.9 L1129.6,559.6 L1130.7,559.1 L1131.8,549.9 L1132.8,540.1 L1133.9,560.3 L1135.0,542.1 L1136.0,549.4 L1137.1,551.5 L1138.2,558.5 L1139.2,554.5 L1140.3,552.9 L1141.4,550.6 L1142.4,561.3 L1143.5,558.6 L1144.6,547.5 L1145.6,556.6 L1146.7,561.1 L1147.7,550.8 L1148.8,540.4 L1149.9,538.9 L1150.9,559.8 L1152.0,544.1 L1153.1,556.5 L1154.1,543.5 L1155.2,542.9 L1156.3,541.3 L1157.3,556.5 L1158.4,541.1 L1159.5,548.4 L1160.5,557.1 L1161.6,551.3 L1162.7,538.6 L1163.7,537.6 L1164.8,556.5 L1165.9,546.0 L1166.9,539.8 L1168.0,549.6 L1169.1,556.6 L1170.1,546.1 L1171.2,541.0 L1172.3,541.7 L1173.3,548.6 L1174.4,556.4 L1175.5,540.9 L1176.5,555.2 L1177.6,554.8 L1178.6,551.8 L1179.7,547.4 L1180.8,538.8 L1181.8,549.0 L1182.9,547.8 L1184.0,554.0 L1185.0,540.2 L1186.1,541.2 L1187.2,537.9 L1188.2,548.5 L1189.3,539.5 L1190.4,549.7 L1191.4,548.5 L1192.5,545.9 L1192.5,628.5 L1191.4,628.5 L1190.4,628.5 L1189.3,628.5 L1188.2,628.5 L1187.2,628.5 L1186.1,628.5 L1185.0,628.5 L1184.0,628.5 L1182.9,628.5 L1181.8,628.5 L1180.8,628.5 L1179.7,628.5 L1178.6,628.5 L1177.6,628.5 L1176.5,628.5 L1175.5,628.5 L1174.4,628.5 L1173.3,628.5 L1172.3,628.5 L1171.2,628.5 L1170.1,628.5 L1169.1,628.5 L1168.0,628.5 L1166.9,628.5 L1165.9,628.5 L1164.8,628.5 L1163.7,628.5 L1162.7,628.5 L1161.6,628.5 L1160.5,628.5 L1159.5,628.5 L1158.4,628.5 L1157.3,628.5 L1156.3,628.5 L1155.2,628.5 L1154.1,628.5 L1153.1,628.5 L1152.0,628.5 L1150.9,628.5 L1149.9,628.5 L1148.8,628.5 L1147.7,628.5 L1146.7,628.5 L1145.6,628.5 L1144.6,628.5 L1143.5,628.5 L1142.4,628.5 L1141.4,628.5 L1140.3,628.5 L1139.2,628.5 L1138.2,628.5 L1137.1,628.5 L1136.0,628.5 L1135.0,628.5 L1133.9,628.5 L1132.8,628.5 L1131.8,628.5 L1130.7,628.5 L1129.6,628.5 L1128.6,628.5 L1127.5,628.5 L1126.4,628.5 L1125.4,628.5 L1124.3,628.5 L1123.2,628.5 L1122.2,628.5 L1121.1,628.5 L1120.0,628.5 L1119.0,628.5 L1117.9,628.5 L1116.8,628.5 L1115.8,628.5 L1114.7,628.5 L1113.7,628.5 L1112.6,628.5 L1111.5,628.5 L1110.5,628.5 L1109.4,628.5 L1108.3,628.5 L1107.3,628.5 L1106.2,628.5 L1105.1,628.5 L1104.1,628.5 L1103.0,628.5 L1101.9,628.5 L1100.9,628.5 L1099.8,628.5 L1098.7,628.5 L1097.7,628.5 L1096.6,628.5 L1095.5,628.5 L1094.5,628.5 L1093.4,628.5 L1092.3,628.5 L1091.3,628.5 L1090.2,628.5 L1089.1,628.5 L1088.1,628.5 L1087.0,628.5 L1085.9,628.5 L1084.9,628.5 L1083.8,628.5 L1082.8,628.5 L1081.7,628.5 L1080.6,628.5 L1079.6,628.5 L1078.5,628.5 L1077.4,628.5 L1076.4,628.5 L1075.3,628.5 L1074.2,628.5 L1073.2,628.5 L1072.1,628.5 L1071.0,628.5 L1070.0,628.5 L1068.9,628.5 L1067.8,628.5 L1066.8,628.5 L1065.7,628.5 L1064.6,628.5 L1063.6,628.5 L1062.5,628.5 L1061.4,628.5 L1060.4,628.5 L1059.3,628.5 L1058.2,628.5 L1057.2,628.5 L1056.1,628.5 L1055.1,628.5 L1054.0,628.5 L1052.9,628.5 L1051.9,628.5 L1050.8,628.5 L1049.7,628.5 L1048.7,628.5 L1047.6,628.5 L1046.5,628.5 L1045.5,628.5 L1044.4,628.5 L1043.3,628.5 L1042.3,628.5 L1041.2,628.5 L1040.1,628.5 L1039.1,628.5 L1038.0,628.5 L1036.9,628.5 L1035.9,628.5 L1034.8,628.5 L1033.7,628.5 L1032.7,628.5 L1031.6,628.5 L1030.5,628.5 L1029.5,628.5 L1028.4,628.5 L1027.3,628.5 L1026.3,628.5 L1025.2,628.5 L1024.2,628.5 L1023.1,628.5 L1022.0,628.5 L1021.0,628.5 L1019.9,628.5 L1018.8,628.5 L1017.8,628.5 L1016.7,628.5 L1015.6,628.5 L1014.6,628.5 L1013.5,628.5 L1012.4,628.5 L1011.4,628.5 L1010.3,628.5 L1009.2,628.5 L1008.2,628.5 L1007.1,628.5 L1006.0,628.5 L1005.0,628.5 L1003.9,628.5 L1002.8,628.5 L1001.8,628.5 L1000.7,628.5 L999.6,628.5 L998.6,628.5 L997.5,628.5 L996.4,628.5 L995.4,628.5 L994.3,628.5 L993.3,628.5 L992.2,628.5 L991.1,628.5 L990.1,628.5 L989.0,628.5 L987.9,628.5 L986.9,628.5 L985.8,628.5 L984.7,628.5 L983.7,628.5 L982.6,628.5 L981.5,628.5 L980.5,628.5 L979.4,628.5 L978.3,628.5 L977.3,628.5 L976.2,628.5 L975.1,628.5 L974.1,628.5 L973.0,628.5 L971.9,628.5 L970.9,628.5 L969.8,628.5 L968.7,628.5 L967.7,628.5 L966.6,628.5 L965.5,628.5 L964.5,628.5 L963.4,628.5 L962.4,628.5 L961.3,628.5 L960.2,628.5 L959.2,628.5 L958.1,628.5 L957.0,628.5 L956.0,628.5 L954.9,628.5 L953.8,628.5 L952.8,628.5 L951.7,628.5 L950.6,628.5 L949.6,628.5 L948.5,628.5 Z" fill="#17577a"/><rect x="948" y="545" width="245" height="84" fill="#17577a"/><rect x="948.5" y="550.5" width="244.0" height="1" fill="#2a6a88" opacity="0.35"/><rect x="948.5" y="589.3" width="244.0" height="1" fill="#2a6a88" opacity="0.35"/><path d="M948.5,464.9 L949.6,466.5 L950.6,473.5 L951.7,460.7 L952.8,459.8 L953.8,469.7 L954.9,465.1 L956.0,459.5 L957.0,462.1 L958.1,460.1 L959.2,455.5 L960.2,467.6 L961.3,475.9 L962.4,471.2 L963.4,469.1 L964.5,461.0 L965.5,462.8 L966.6,455.2 L967.7,470.2 L968.7,460.0 L969.8,458.9 L970.9,477.4 L971.9,461.9 L973.0,459.4 L974.1,469.4 L975.1,472.5 L976.2,469.2 L977.3,456.7 L978.3,460.6 L979.4,459.0 L980.5,461.9 L981.5,454.7 L982.6,452.0 L983.7,460.1 L984.7,451.4 L985.8,460.5 L986.9,474.0 L987.9,472.4 L989.0,464.4 L990.1,454.3 L991.1,459.8 L992.2,452.7 L993.3,456.1 L994.3,467.3 L995.4,468.4 L996.4,452.7 L997.5,461.4 L998.6,462.8 L999.6,462.0 L1000.7,454.8 L1001.8,461.1 L1002.8,453.9 L1003.9,468.9 L1005.0,467.0 L1006.0,462.2 L1007.1,461.7 L1008.2,473.4 L1009.2,462.7 L1010.3,456.8 L1011.4,460.8 L1012.4,471.3 L1013.5,456.8 L1014.6,471.3 L1015.6,474.0 L1016.7,475.7 L1017.8,465.1 L1018.8,459.1 L1019.9,474.9 L1021.0,470.0 L1022.0,469.7 L1023.1,457.2 L1024.2,467.1 L1025.2,471.6 L1026.3,458.6 L1027.3,456.5 L1028.4,459.9 L1029.5,467.7 L1030.5,462.7 L1031.6,464.4 L1032.7,458.4 L1033.7,457.5 L1034.8,453.6 L1035.9,461.2 L1036.9,455.1 L1038.0,461.5 L1039.1,471.3 L1040.1,468.8 L1041.2,454.3 L1042.3,464.5 L1043.3,455.9 L1044.4,460.6 L1045.5,454.5 L1046.5,463.9 L1047.6,453.4 L1048.7,457.9 L1049.7,457.1 L1050.8,463.3 L1051.9,464.9 L1052.9,468.3 L1054.0,461.2 L1055.1,471.9 L1056.1,460.9 L1057.2,453.5 L1058.2,451.9 L1059.3,453.8 L1060.4,458.1 L1061.4,460.6 L1062.5,476.2 L1063.6,458.0 L1064.6,454.4 L1065.7,465.1 L1066.8,458.7 L1067.8,453.2 L1068.9,459.6 L1070.0,463.0 L1071.0,462.0 L1072.1,460.5 L1073.2,459.3 L1074.2,462.1 L1075.3,477.0 L1076.4,465.4 L1077.4,459.3 L1078.5,454.7 L1079.6,472.9 L1080.6,466.2 L1081.7,468.6 L1082.8,477.4 L1083.8,469.9 L1084.9,460.4 L1085.9,463.3 L1087.0,477.0 L1088.1,457.5 L1089.1,458.9 L1090.2,463.9 L1091.3,454.4 L1092.3,463.7 L1093.4,470.3 L1094.5,465.5 L1095.5,458.8 L1096.6,469.8 L1097.7,454.9 L1098.7,468.6 L1099.8,461.6 L1100.9,467.7 L1101.9,465.5 L1103.0,459.1 L1104.1,456.5 L1105.1,472.8 L1106.2,464.6 L1107.3,459.1 L1108.3,466.9 L1109.4,467.2 L1110.5,454.6 L1111.5,462.8 L1112.6,455.4 L1113.7,467.7 L1114.7,453.4 L1115.8,472.8 L1116.8,467.4 L1117.9,463.0 L1119.0,466.1 L1120.0,459.1 L1121.1,463.1 L1122.2,455.9 L1123.2,460.2 L1124.3,467.1 L1125.4,468.2 L1126.4,460.6 L1127.5,465.3 L1128.6,470.9 L1129.6,466.4 L1130.7,452.4 L1131.8,463.8 L1132.8,456.0 L1133.9,472.7 L1135.0,468.0 L1136.0,463.2 L1137.1,467.8 L1138.2,464.9 L1139.2,457.2 L1140.3,468.9 L1141.4,454.1 L1142.4,451.4 L1143.5,458.1 L1144.6,454.6 L1145.6,460.5 L1146.7,467.7 L1147.7,461.1 L1148.8,462.3 L1149.9,461.6 L1150.9,476.5 L1152.0,461.4 L1153.1,467.7 L1154.1,473.5 L1155.2,454.4 L1156.3,475.6 L1157.3,464.5 L1158.4,460.6 L1159.5,472.6 L1160.5,463.4 L1161.6,453.7 L1162.7,451.1 L1163.7,471.7 L1164.8,457.0 L1165.9,467.9 L1166.9,454.1 L1168.0,459.2 L1169.1,478.4 L1170.1,462.8 L1171.2,472.8 L1172.3,476.5 L1173.3,459.0 L1174.4,463.7 L1175.5,476.4 L1176.5,478.5 L1177.6,460.1 L1178.6,457.7 L1179.7,452.2 L1180.8,472.6 L1181.8,477.8 L1182.9,468.0 L1184.0,458.1 L1185.0,454.2 L1186.1,467.6 L1187.2,470.5 L1188.2,468.2 L1189.3,474.5 L1190.4,453.4 L1191.4,450.5 L1192.5,452.8" fill="none" stroke="#bd978c" stroke-width="1.6"/><path d="M948.5,468.1 L949.6,487.7 L950.6,490.0 L951.7,463.7 L952.8,484.8 L953.8,483.0 L954.9,481.9 L956.0,462.5 L957.0,484.1 L958.1,473.3 L959.2,484.6 L960.2,477.9 L961.3,483.7 L962.4,483.4 L963.4,472.1 L964.5,480.5 L965.5,490.0 L966.6,488.7 L967.7,489.0 L968.7,465.8 L969.8,479.0 L970.9,486.3 L971.9,471.4 L973.0,462.4 L974.1,481.8 L975.1,478.4 L976.2,489.7 L977.3,470.3 L978.3,463.6 L979.4,477.0 L980.5,486.0 L981.5,481.3 L982.6,465.2 L983.7,470.3 L984.7,464.7 L985.8,472.1 L986.9,483.6 L987.9,475.4 L989.0,477.0 L990.1,468.2 L991.1,475.7 L992.2,490.1 L993.3,474.5 L994.3,470.3 L995.4,480.9 L996.4,487.6 L997.5,464.4 L998.6,478.8 L999.6,479.2 L1000.7,479.3 L1001.8,476.7 L1002.8,481.3 L1003.9,486.6 L1005.0,470.0 L1006.0,465.2 L1007.1,464.7 L1008.2,476.4 L1009.2,468.6 L1010.3,474.5 L1011.4,476.6 L1012.4,474.3 L1013.5,479.5 L1014.6,477.1 L1015.6,477.0 L1016.7,484.2 L1017.8,473.1 L1018.8,462.1 L1019.9,486.4 L1021.0,473.0 L1022.0,472.7 L1023.1,464.7 L1024.2,477.1 L1025.2,485.0 L1026.3,464.7 L1027.3,476.7 L1028.4,462.9 L1029.5,472.4 L1030.5,465.7 L1031.6,481.6 L1032.7,488.9 L1033.7,478.2 L1034.8,472.2 L1035.9,482.4 L1036.9,485.6 L1038.0,464.5 L1039.1,474.3 L1040.1,482.4 L1041.2,488.6 L1042.3,467.5 L1043.3,486.2 L1044.4,469.3 L1045.5,478.4 L1046.5,486.0 L1047.6,486.1 L1048.7,471.8 L1049.7,481.6 L1050.8,472.7 L1051.9,467.9 L1052.9,488.3 L1054.0,464.2 L1055.1,488.6 L1056.1,463.9 L1057.2,484.4 L1058.2,469.8 L1059.3,470.6 L1060.4,461.1 L1061.4,476.6 L1062.5,483.4 L1063.6,486.1 L1064.6,469.0 L1065.7,468.1 L1066.8,461.7 L1067.8,464.0 L1068.9,478.2 L1070.0,467.2 L1071.0,465.0 L1072.1,463.5 L1073.2,462.3 L1074.2,465.1 L1075.3,480.0 L1076.4,479.4 L1077.4,477.9 L1078.5,470.6 L1079.6,482.7 L1080.6,469.2 L1081.7,481.2 L1082.8,480.4 L1083.8,483.0 L1084.9,479.0 L1085.9,466.3 L1087.0,480.4 L1088.1,476.3 L1089.1,461.9 L1090.2,474.3 L1091.3,468.0 L1092.3,466.7 L1093.4,473.3 L1094.5,487.5 L1095.5,468.1 L1096.6,472.8 L1097.7,483.7 L1098.7,476.0 L1099.8,489.6 L1100.9,487.4 L1101.9,484.3 L1103.0,477.4 L1104.1,478.1 L1105.1,480.5 L1106.2,487.3 L1107.3,463.1 L1108.3,486.1 L1109.4,470.2 L1110.5,461.4 L1111.5,474.2 L1112.6,467.5 L1113.7,470.7 L1114.7,464.2 L1115.8,479.1 L1116.8,473.1 L1117.9,466.0 L1119.0,486.0 L1120.0,463.5 L1121.1,486.5 L1122.2,489.3 L1123.2,469.7 L1124.3,483.0 L1125.4,475.9 L1126.4,466.2 L1127.5,468.3 L1128.6,473.9 L1129.6,469.4 L1130.7,468.1 L1131.8,478.1 L1132.8,474.5 L1133.9,488.0 L1135.0,487.4 L1136.0,466.2 L1137.1,483.2 L1138.2,467.9 L1139.2,479.5 L1140.3,471.9 L1141.4,486.9 L1142.4,473.5 L1143.5,485.8 L1144.6,488.5 L1145.6,467.1 L1146.7,485.8 L1147.7,464.1 L1148.8,465.3 L1149.9,467.7 L1150.9,479.5 L1152.0,464.4 L1153.1,476.6 L1154.1,488.8 L1155.2,463.8 L1156.3,485.0 L1157.3,477.1 L1158.4,476.4 L1159.5,475.6 L1160.5,474.4 L1161.6,475.1 L1162.7,488.2 L1163.7,488.8 L1164.8,485.8 L1165.9,483.3 L1166.9,472.1 L1168.0,462.2 L1169.1,484.9 L1170.1,476.4 L1171.2,476.5 L1172.3,481.7 L1173.3,471.8 L1174.4,474.9 L1175.5,479.4 L1176.5,483.3 L1177.6,463.1 L1178.6,460.7 L1179.7,487.7 L1180.8,487.5 L1181.8,485.0 L1182.9,487.0 L1184.0,480.8 L1185.0,462.1 L1186.1,472.3 L1187.2,473.5 L1188.2,477.9 L1189.3,480.7 L1190.4,477.6 L1191.4,487.6 L1192.5,467.5" fill="none" stroke="#e27886" stroke-width="1.7"/><path d="M948.5,482.8 L949.6,497.3 L950.6,482.3 L951.7,495.0 L952.8,509.6 L953.8,491.3 L954.9,509.2 L956.0,501.2 L957.0,507.6 L958.1,483.3 L959.2,501.5 L960.2,497.0 L961.3,499.1 L962.4,492.8 L963.4,509.4 L964.5,501.8 L965.5,503.1 L966.6,502.0 L967.7,497.9 L968.7,505.2 L969.8,500.3 L970.9,498.3 L971.9,485.8 L973.0,496.6 L974.1,486.1 L975.1,497.5 L976.2,494.0 L977.3,503.4 L978.3,499.3 L979.4,492.4 L980.5,496.2 L981.5,487.9 L982.6,509.1 L983.7,507.5 L984.7,494.1 L985.8,487.7 L986.9,493.6 L987.9,499.7 L989.0,494.8 L990.1,508.6 L991.1,484.3 L992.2,490.3 L993.3,495.9 L994.3,482.9 L995.4,493.7 L996.4,497.9 L997.5,490.5 L998.6,509.7 L999.6,493.0 L1000.7,491.9 L1001.8,498.3 L1002.8,489.5 L1003.9,494.5 L1005.0,486.0 L1006.0,482.2 L1007.1,499.9 L1008.2,490.0 L1009.2,485.6 L1010.3,488.0 L1011.4,492.8 L1012.4,485.5 L1013.5,500.6 L1014.6,502.9 L1015.6,510.2 L1016.7,484.3 L1017.8,489.5 L1018.8,500.3 L1019.9,506.4 L1021.0,489.8 L1022.0,505.9 L1023.1,483.8 L1024.2,496.1 L1025.2,482.3 L1026.3,484.8 L1027.3,501.1 L1028.4,495.0 L1029.5,507.7 L1030.5,509.8 L1031.6,495.8 L1032.7,496.9 L1033.7,492.6 L1034.8,486.1 L1035.9,492.7 L1036.9,504.2 L1038.0,494.3 L1039.1,504.6 L1040.1,486.4 L1041.2,483.7 L1042.3,508.6 L1043.3,489.6 L1044.4,485.1 L1045.5,506.0 L1046.5,504.3 L1047.6,507.8 L1048.7,507.7 L1049.7,486.3 L1050.8,497.2 L1051.9,500.2 L1052.9,489.7 L1054.0,498.4 L1055.1,492.0 L1056.1,490.4 L1057.2,492.4 L1058.2,497.2 L1059.3,487.0 L1060.4,501.9 L1061.4,492.8 L1062.5,492.7 L1063.6,493.3 L1064.6,497.6 L1065.7,509.5 L1066.8,508.5 L1067.8,497.8 L1068.9,485.3 L1070.0,482.7 L1071.0,504.7 L1072.1,482.7 L1073.2,488.1 L1074.2,495.5 L1075.3,481.7 L1076.4,498.6 L1077.4,507.5 L1078.5,501.9 L1079.6,502.4 L1080.6,503.2 L1081.7,500.5 L1082.8,482.4 L1083.8,481.2 L1084.9,502.0 L1085.9,504.1 L1087.0,506.2 L1088.1,503.7 L1089.1,489.2 L1090.2,481.6 L1091.3,496.0 L1092.3,482.8 L1093.4,499.4 L1094.5,490.8 L1095.5,501.0 L1096.6,503.7 L1097.7,509.5 L1098.7,497.9 L1099.8,495.6 L1100.9,486.7 L1101.9,487.9 L1103.0,482.1 L1104.1,508.0 L1105.1,487.1 L1106.2,502.4 L1107.3,482.8 L1108.3,493.5 L1109.4,486.7 L1110.5,502.5 L1111.5,485.8 L1112.6,502.5 L1113.7,505.3 L1114.7,498.3 L1115.8,497.3 L1116.8,494.5 L1117.9,501.5 L1119.0,495.0 L1120.0,506.6 L1121.1,487.9 L1122.2,484.2 L1123.2,497.4 L1124.3,487.2 L1125.4,486.3 L1126.4,498.7 L1127.5,510.0 L1128.6,487.0 L1129.6,488.3 L1130.7,488.0 L1131.8,490.7 L1132.8,499.5 L1133.9,497.6 L1135.0,488.2 L1136.0,507.0 L1137.1,487.8 L1138.2,490.0 L1139.2,506.2 L1140.3,504.0 L1141.4,502.2 L1142.4,488.8 L1143.5,487.2 L1144.6,500.5 L1145.6,490.4 L1146.7,487.0 L1147.7,495.9 L1148.8,495.7 L1149.9,492.6 L1150.9,506.5 L1152.0,491.0 L1153.1,508.8 L1154.1,493.1 L1155.2,481.9 L1156.3,491.2 L1157.3,488.4 L1158.4,483.9 L1159.5,489.9 L1160.5,492.5 L1161.6,488.7 L1162.7,501.3 L1163.7,510.5 L1164.8,486.0 L1165.9,484.7 L1166.9,490.1 L1168.0,505.8 L1169.1,492.5 L1170.1,502.5 L1171.2,490.7 L1172.3,487.2 L1173.3,482.7 L1174.4,483.6 L1175.5,494.3 L1176.5,501.2 L1177.6,502.3 L1178.6,485.9 L1179.7,487.2 L1180.8,501.8 L1181.8,506.5 L1182.9,500.7 L1184.0,488.5 L1185.0,502.1 L1186.1,509.5 L1187.2,484.1 L1188.2,497.5 L1189.3,486.8 L1190.4,503.4 L1191.4,503.7 L1192.5,499.9" fill="none" stroke="#d3a21e" stroke-width="1.7"/><path d="M948.5,523.4 L949.6,531.6 L950.6,519.9 L951.7,526.1 L952.8,533.2 L953.8,521.9 L954.9,526.9 L956.0,527.3 L957.0,531.0 L958.1,507.8 L959.2,509.3 L960.2,533.2 L961.3,528.4 L962.4,514.0 L963.4,526.4 L964.5,511.1 L965.5,515.1 L966.6,517.8 L967.7,512.0 L968.7,508.8 L969.8,519.1 L970.9,524.1 L971.9,515.2 L973.0,524.1 L974.1,534.3 L975.1,508.6 L976.2,512.5 L977.3,507.5 L978.3,523.9 L979.4,517.9 L980.5,518.0 L981.5,512.5 L982.6,527.2 L983.7,528.2 L984.7,519.3 L985.8,529.3 L986.9,513.2 L987.9,514.8 L989.0,532.7 L990.1,513.4 L991.1,509.1 L992.2,505.4 L993.3,523.5 L994.3,529.6 L995.4,508.0 L996.4,518.2 L997.5,516.8 L998.6,514.7 L999.6,511.8 L1000.7,515.9 L1001.8,509.3 L1002.8,531.1 L1003.9,512.4 L1005.0,520.3 L1006.0,524.1 L1007.1,524.9 L1008.2,519.8 L1009.2,520.6 L1010.3,532.6 L1011.4,511.9 L1012.4,510.6 L1013.5,513.4 L1014.6,526.3 L1015.6,518.4 L1016.7,516.7 L1017.8,507.5 L1018.8,508.0 L1019.9,523.2 L1021.0,512.5 L1022.0,518.1 L1023.1,512.3 L1024.2,513.8 L1025.2,510.5 L1026.3,530.8 L1027.3,524.7 L1028.4,520.1 L1029.5,512.2 L1030.5,528.9 L1031.6,522.7 L1032.7,509.7 L1033.7,509.8 L1034.8,531.9 L1035.9,516.1 L1036.9,517.0 L1038.0,508.1 L1039.1,529.6 L1040.1,513.6 L1041.2,521.2 L1042.3,526.5 L1043.3,521.7 L1044.4,516.6 L1045.5,512.8 L1046.5,524.9 L1047.6,513.5 L1048.7,522.7 L1049.7,533.4 L1050.8,533.5 L1051.9,526.3 L1052.9,523.4 L1054.0,510.5 L1055.1,528.1 L1056.1,532.6 L1057.2,516.8 L1058.2,507.1 L1059.3,519.6 L1060.4,518.0 L1061.4,529.9 L1062.5,528.3 L1063.6,518.9 L1064.6,520.8 L1065.7,519.5 L1066.8,524.6 L1067.8,524.5 L1068.9,525.0 L1070.0,512.4 L1071.0,528.0 L1072.1,507.9 L1073.2,512.0 L1074.2,520.8 L1075.3,506.4 L1076.4,521.6 L1077.4,515.0 L1078.5,514.8 L1079.6,507.4 L1080.6,515.3 L1081.7,521.8 L1082.8,507.2 L1083.8,528.4 L1084.9,534.7 L1085.9,522.1 L1087.0,521.7 L1088.1,529.3 L1089.1,525.4 L1090.2,525.3 L1091.3,519.8 L1092.3,520.6 L1093.4,516.1 L1094.5,508.2 L1095.5,526.8 L1096.6,525.5 L1097.7,506.3 L1098.7,526.6 L1099.8,534.7 L1100.9,518.9 L1101.9,531.9 L1103.0,513.0 L1104.1,523.1 L1105.1,529.0 L1106.2,518.2 L1107.3,513.8 L1108.3,508.9 L1109.4,520.2 L1110.5,514.4 L1111.5,518.8 L1112.6,523.2 L1113.7,512.7 L1114.7,516.6 L1115.8,506.4 L1116.8,523.3 L1117.9,527.0 L1119.0,514.8 L1120.0,511.1 L1121.1,523.0 L1122.2,519.0 L1123.2,529.0 L1124.3,528.1 L1125.4,519.4 L1126.4,517.9 L1127.5,522.1 L1128.6,523.1 L1129.6,519.6 L1130.7,521.3 L1131.8,516.4 L1132.8,525.2 L1133.9,520.1 L1135.0,509.4 L1136.0,522.7 L1137.1,515.2 L1138.2,514.9 L1139.2,521.9 L1140.3,530.9 L1141.4,518.3 L1142.4,517.0 L1143.5,523.7 L1144.6,530.5 L1145.6,529.7 L1146.7,535.0 L1147.7,508.9 L1148.8,519.8 L1149.9,516.0 L1150.9,515.7 L1152.0,514.1 L1153.1,522.1 L1154.1,527.7 L1155.2,525.3 L1156.3,508.2 L1157.3,517.9 L1158.4,529.2 L1159.5,517.6 L1160.5,513.4 L1161.6,515.2 L1162.7,522.7 L1163.7,514.6 L1164.8,510.1 L1165.9,505.0 L1166.9,507.9 L1168.0,524.0 L1169.1,507.9 L1170.1,513.9 L1171.2,512.9 L1172.3,528.3 L1173.3,530.3 L1174.4,507.8 L1175.5,508.4 L1176.5,511.8 L1177.6,509.2 L1178.6,518.3 L1179.7,532.6 L1180.8,518.4 L1181.8,525.0 L1182.9,520.8 L1184.0,532.2 L1185.0,518.1 L1186.1,524.5 L1187.2,509.5 L1188.2,515.3 L1189.3,506.2 L1190.4,519.0 L1191.4,523.8 L1192.5,511.5" fill="none" stroke="#6fc9c2" stroke-width="1.6"/><path d="M948.5,544.0 L949.6,549.5 L950.6,542.0 L951.7,556.7 L952.8,544.4 L953.8,550.7 L954.9,560.0 L956.0,548.6 L957.0,560.8 L958.1,556.5 L959.2,551.8 L960.2,553.2 L961.3,552.3 L962.4,547.0 L963.4,561.3 L964.5,548.9 L965.5,561.2 L966.6,559.4 L967.7,539.9 L968.7,543.3 L969.8,548.8 L970.9,557.2 L971.9,543.2 L973.0,552.0 L974.1,547.1 L975.1,556.4 L976.2,560.6 L977.3,557.2 L978.3,543.5 L979.4,555.4 L980.5,549.1 L981.5,557.8 L982.6,550.1 L983.7,559.5 L984.7,562.3 L985.8,558.8 L986.9,558.5 L987.9,558.3 L989.0,553.0 L990.1,542.7 L991.1,560.6 L992.2,550.2 L993.3,538.7 L994.3,547.3 L995.4,547.7 L996.4,542.8 L997.5,560.0 L998.6,541.9 L999.6,558.6 L1000.7,552.0 L1001.8,542.7 L1002.8,546.0 L1003.9,548.4 L1005.0,540.9 L1006.0,555.2 L1007.1,554.1 L1008.2,561.7 L1009.2,558.9 L1010.3,557.6 L1011.4,562.4 L1012.4,561.3 L1013.5,554.5 L1014.6,551.4 L1015.6,550.7 L1016.7,557.4 L1017.8,560.7 L1018.8,558.8 L1019.9,558.8 L1021.0,539.8 L1022.0,547.1 L1023.1,540.1 L1024.2,551.0 L1025.2,552.0 L1026.3,551.6 L1027.3,558.5 L1028.4,544.4 L1029.5,554.8 L1030.5,552.5 L1031.6,543.5 L1032.7,560.5 L1033.7,540.6 L1034.8,548.2 L1035.9,550.7 L1036.9,552.3 L1038.0,561.5 L1039.1,552.4 L1040.1,559.3 L1041.2,546.1 L1042.3,549.2 L1043.3,541.7 L1044.4,552.4 L1045.5,548.4 L1046.5,556.5 L1047.6,541.6 L1048.7,548.3 L1049.7,560.6 L1050.8,539.6 L1051.9,552.7 L1052.9,554.4 L1054.0,555.7 L1055.1,551.9 L1056.1,550.2 L1057.2,560.8 L1058.2,546.0 L1059.3,554.4 L1060.4,554.4 L1061.4,555.8 L1062.5,550.1 L1063.6,538.7 L1064.6,555.3 L1065.7,545.4 L1066.8,556.1 L1067.8,562.0 L1068.9,557.7 L1070.0,548.5 L1071.0,558.2 L1072.1,548.2 L1073.2,545.6 L1074.2,551.2 L1075.3,553.7 L1076.4,554.7 L1077.4,551.7 L1078.5,548.0 L1079.6,555.5 L1080.6,546.4 L1081.7,552.1 L1082.8,538.6 L1083.8,540.2 L1084.9,557.6 L1085.9,544.1 L1087.0,547.4 L1088.1,539.3 L1089.1,555.1 L1090.2,546.5 L1091.3,539.1 L1092.3,543.6 L1093.4,559.4 L1094.5,556.9 L1095.5,539.1 L1096.6,559.5 L1097.7,540.9 L1098.7,548.7 L1099.8,550.7 L1100.9,556.7 L1101.9,542.3 L1103.0,556.8 L1104.1,545.4 L1105.1,555.1 L1106.2,560.5 L1107.3,553.2 L1108.3,538.7 L1109.4,552.8 L1110.5,548.8 L1111.5,555.3 L1112.6,557.2 L1113.7,541.5 L1114.7,550.7 L1115.8,553.4 L1116.8,560.3 L1117.9,553.7 L1119.0,553.1 L1120.0,556.6 L1121.1,542.7 L1122.2,557.7 L1123.2,552.7 L1124.3,553.5 L1125.4,542.3 L1126.4,549.8 L1127.5,547.9 L1128.6,542.9 L1129.6,559.6 L1130.7,559.1 L1131.8,549.9 L1132.8,540.1 L1133.9,560.3 L1135.0,542.1 L1136.0,549.4 L1137.1,551.5 L1138.2,558.5 L1139.2,554.5 L1140.3,552.9 L1141.4,550.6 L1142.4,561.3 L1143.5,558.6 L1144.6,547.5 L1145.6,556.6 L1146.7,561.1 L1147.7,550.8 L1148.8,540.4 L1149.9,538.9 L1150.9,559.8 L1152.0,544.1 L1153.1,556.5 L1154.1,543.5 L1155.2,542.9 L1156.3,541.3 L1157.3,556.5 L1158.4,541.1 L1159.5,548.4 L1160.5,557.1 L1161.6,551.3 L1162.7,538.6 L1163.7,537.6 L1164.8,556.5 L1165.9,546.0 L1166.9,539.8 L1168.0,549.6 L1169.1,556.6 L1170.1,546.1 L1171.2,541.0 L1172.3,541.7 L1173.3,548.6 L1174.4,556.4 L1175.5,540.9 L1176.5,555.2 L1177.6,554.8 L1178.6,551.8 L1179.7,547.4 L1180.8,538.8 L1181.8,549.0 L1182.9,547.8 L1184.0,554.0 L1185.0,540.2 L1186.1,541.2 L1187.2,537.9 L1188.2,548.5 L1189.3,539.5 L1190.4,549.7 L1191.4,548.5 L1192.5,545.9" fill="none" stroke="#3592e6" stroke-width="1.8"/><rect x="948.5" y="625" width="244.0" height="4" fill="#3b4d8c"/><rect x="948" y="464" width="2" height="165" fill="#2c4a6a"/></svg>
<div class="sq" style="left:924px;top:638px;background:#7a7ef0"></div>
<div class="lg" style="left:935.5px;top:634.8px">GET</div>
<div class="sq" style="left:966px;top:638px;background:#a9c3d6"></div>
<div class="lg" style="left:977.6px;top:634.8px">POST</div>
<div class="sq" style="left:1015.5px;top:638px;background:#5d9b82"></div>
<div class="lg" style="left:1026.8px;top:634.8px">HEAD</div>
<div class="sq" style="left:1066px;top:638px;background:#c7b430"></div>
<div class="lg" style="left:1077px;top:634.8px">OPTIONS</div>
<svg style="left:1141px;top:635px;width:10px;height:12px" viewBox="0 0 10 12"><path d="M8.5,1 L1.5,6 L8.5,11 Z" fill="#5f6678"/></svg>
<div class="lg" style="left:1160px;top:634px">1/2</div>
<svg style="left:1184px;top:635px;width:10px;height:12px" viewBox="0 0 10 12"><path d="M1.5,1 L8.5,6 L1.5,11 Z" fill="#c9cdd8"/></svg>
<div class="a" style="left:287.8px;top:159.8px;width:56px;height:32px;background:#0c3a3b"></div>
<div class="a" style="left:351.8px;top:159.8px;width:56px;height:32px;background:#0c3a3b"></div>
<div class="a" style="left:416px;top:159.8px;width:64px;height:32px;background:#0c3a3b"></div>
<div class="a" style="left:488px;top:159.8px;width:48px;height:32px;background:#0c3a3b"></div>
<div class="a" style="left:286.1px;top:161px;font-size:31.5px;letter-spacing:2.6px;color:#6a8de8;-webkit-text-stroke:0.9px #6a8de8;line-height:31.5px">32d</div>
<div class="a" style="left:350.3px;top:161px;font-size:31.5px;letter-spacing:1.25px;color:#6a8de8;-webkit-text-stroke:0.9px #6a8de8;line-height:31.5px">13h</div>
<div class="a" style="left:413.7px;top:161px;font-size:31.5px;letter-spacing:2.2px;color:#6a8de8;-webkit-text-stroke:0.9px #6a8de8;line-height:31.5px">47m</div>
<div class="a" style="left:486px;top:161px;font-size:31.5px;letter-spacing:0px;color:#6a8de8;-webkit-text-stroke:0.9px #6a8de8;line-height:31.5px">17s</div>
<svg style="left:250px;top:280px;width:160px;height:100px" viewBox="250 280 160 100"><rect x="255" y="288" width="150" height="16" fill="#0c3636"/><rect x="255.0" y="293.6" width="1.3" height="42.4" fill="#4e64a0" opacity="0.9"/><rect x="256.3" y="296.8" width="1.3" height="39.2" fill="#4e64a0" opacity="0.9"/><rect x="257.5" y="290.1" width="1.3" height="45.9" fill="#4e64a0" opacity="0.9"/><rect x="258.8" y="300.8" width="1.3" height="35.2" fill="#4e64a0" opacity="0.9"/><rect x="260.0" y="299.0" width="1.3" height="37.0" fill="#4e64a0" opacity="0.9"/><rect x="261.3" y="301.0" width="1.3" height="35.0" fill="#4e64a0" opacity="0.9"/><rect x="262.5" y="292.9" width="1.3" height="43.1" fill="#4e64a0" opacity="0.9"/><rect x="263.8" y="292.2" width="1.3" height="43.8" fill="#4e64a0" opacity="0.9"/><rect x="265.0" y="290.6" width="1.3" height="45.4" fill="#4e64a0" opacity="0.9"/><rect x="266.3" y="292.1" width="1.3" height="43.9" fill="#4e64a0" opacity="0.9"/><rect x="267.5" y="290.3" width="1.3" height="45.7" fill="#4e64a0" opacity="0.9"/><rect x="268.8" y="297.6" width="1.3" height="38.4" fill="#4e64a0" opacity="0.9"/><rect x="270.0" y="294.0" width="1.3" height="42.0" fill="#4e64a0" opacity="0.9"/><rect x="271.3" y="299.0" width="1.3" height="37.0" fill="#4e64a0" opacity="0.9"/><rect x="272.5" y="298.4" width="1.3" height="37.6" fill="#4e64a0" opacity="0.9"/><rect x="273.8" y="293.8" width="1.3" height="42.2" fill="#4e64a0" opacity="0.9"/><rect x="275.0" y="291.8" width="1.3" height="44.2" fill="#4e64a0" opacity="0.9"/><rect x="276.3" y="293.8" width="1.3" height="42.2" fill="#4e64a0" opacity="0.9"/><rect x="277.5" y="290.3" width="1.3" height="45.7" fill="#4e64a0" opacity="0.9"/><rect x="278.8" y="297.1" width="1.3" height="38.9" fill="#4e64a0" opacity="0.9"/><rect x="280.0" y="292.1" width="1.3" height="43.9" fill="#4e64a0" opacity="0.9"/><rect x="281.3" y="291.6" width="1.3" height="44.4" fill="#4e64a0" opacity="0.9"/><rect x="282.5" y="299.8" width="1.3" height="36.2" fill="#4e64a0" opacity="0.9"/><rect x="283.8" y="294.8" width="1.3" height="41.2" fill="#4e64a0" opacity="0.9"/><rect x="285.1" y="300.4" width="1.3" height="35.6" fill="#4e64a0" opacity="0.9"/><rect x="286.3" y="300.8" width="1.3" height="35.2" fill="#4e64a0" opacity="0.9"/><rect x="287.6" y="297.3" width="1.3" height="38.7" fill="#4e64a0" opacity="0.9"/><rect x="288.8" y="292.7" width="1.3" height="43.3" fill="#4e64a0" opacity="0.9"/><rect x="290.1" y="291.6" width="1.3" height="44.4" fill="#4e64a0" opacity="0.9"/><rect x="291.3" y="292.7" width="1.3" height="43.3" fill="#4e64a0" opacity="0.9"/><rect x="292.6" y="298.1" width="1.3" height="37.9" fill="#4e64a0" opacity="0.9"/><rect x="293.8" y="295.6" width="1.3" height="40.4" fill="#4e64a0" opacity="0.9"/><rect x="295.1" y="293.3" width="1.3" height="42.7" fill="#4e64a0" opacity="0.9"/><rect x="296.3" y="290.2" width="1.3" height="45.8" fill="#4e64a0" opacity="0.9"/><rect x="297.6" y="293.9" width="1.3" height="42.1" fill="#4e64a0" opacity="0.9"/><rect x="298.8" y="294.3" width="1.3" height="41.7" fill="#4e64a0" opacity="0.9"/><rect x="300.1" y="290.8" width="1.3" height="45.2" fill="#4e64a0" opacity="0.9"/><rect x="301.3" y="292.7" width="1.3" height="43.3" fill="#4e64a0" opacity="0.9"/><rect x="302.6" y="293.2" width="1.3" height="42.8" fill="#4e64a0" opacity="0.9"/><rect x="303.8" y="294.6" width="1.3" height="41.4" fill="#4e64a0" opacity="0.9"/><rect x="305.1" y="295.4" width="1.3" height="40.6" fill="#4e64a0" opacity="0.9"/><rect x="306.3" y="296.2" width="1.3" height="39.8" fill="#4e64a0" opacity="0.9"/><rect x="307.6" y="299.3" width="1.3" height="36.7" fill="#4e64a0" opacity="0.9"/><rect x="308.8" y="293.2" width="1.3" height="42.8" fill="#4e64a0" opacity="0.9"/><rect x="310.1" y="291.0" width="1.3" height="45.0" fill="#4e64a0" opacity="0.9"/><rect x="311.3" y="293.3" width="1.3" height="42.7" fill="#4e64a0" opacity="0.9"/><rect x="312.6" y="292.4" width="1.3" height="43.6" fill="#4e64a0" opacity="0.9"/><rect x="313.8" y="296.3" width="1.3" height="39.7" fill="#4e64a0" opacity="0.9"/><rect x="315.1" y="295.2" width="1.3" height="40.8" fill="#4e64a0" opacity="0.9"/><rect x="316.4" y="293.5" width="1.3" height="42.5" fill="#4e64a0" opacity="0.9"/><rect x="317.6" y="291.0" width="1.3" height="45.0" fill="#4e64a0" opacity="0.9"/><rect x="318.9" y="298.3" width="1.3" height="37.7" fill="#4e64a0" opacity="0.9"/><rect x="320.1" y="296.9" width="1.3" height="39.1" fill="#4e64a0" opacity="0.9"/><rect x="321.4" y="296.9" width="1.3" height="39.1" fill="#4e64a0" opacity="0.9"/><rect x="322.6" y="297.7" width="1.3" height="38.3" fill="#4e64a0" opacity="0.9"/><rect x="323.9" y="299.4" width="1.3" height="36.6" fill="#4e64a0" opacity="0.9"/><rect x="325.1" y="290.4" width="1.3" height="45.6" fill="#4e64a0" opacity="0.9"/><rect x="326.4" y="292.1" width="1.3" height="43.9" fill="#4e64a0" opacity="0.9"/><rect x="327.6" y="295.2" width="1.3" height="40.8" fill="#4e64a0" opacity="0.9"/><rect x="328.9" y="297.7" width="1.3" height="38.3" fill="#4e64a0" opacity="0.9"/><rect x="330.1" y="295.5" width="1.3" height="40.5" fill="#4e64a0" opacity="0.9"/><rect x="331.4" y="295.6" width="1.3" height="40.4" fill="#4e64a0" opacity="0.9"/><rect x="332.6" y="293.4" width="1.3" height="42.6" fill="#4e64a0" opacity="0.9"/><rect x="333.9" y="292.7" width="1.3" height="43.3" fill="#4e64a0" opacity="0.9"/><rect x="335.1" y="299.6" width="1.3" height="36.4" fill="#4e64a0" opacity="0.9"/><rect x="336.4" y="300.8" width="1.3" height="35.2" fill="#4e64a0" opacity="0.9"/><rect x="337.6" y="295.5" width="1.3" height="40.5" fill="#4e64a0" opacity="0.9"/><rect x="338.9" y="295.1" width="1.3" height="40.9" fill="#4e64a0" opacity="0.9"/><rect x="340.1" y="291.4" width="1.3" height="44.6" fill="#4e64a0" opacity="0.9"/><rect x="341.4" y="296.6" width="1.3" height="39.4" fill="#4e64a0" opacity="0.9"/><rect x="342.6" y="292.3" width="1.3" height="43.7" fill="#4e64a0" opacity="0.9"/><rect x="343.9" y="296.9" width="1.3" height="39.1" fill="#4e64a0" opacity="0.9"/><rect x="345.2" y="293.1" width="1.3" height="42.9" fill="#4e64a0" opacity="0.9"/><rect x="346.4" y="295.1" width="1.3" height="40.9" fill="#4e64a0" opacity="0.9"/><rect x="347.7" y="299.5" width="1.3" height="36.5" fill="#4e64a0" opacity="0.9"/><rect x="348.9" y="293.4" width="1.3" height="42.6" fill="#4e64a0" opacity="0.9"/><rect x="350.2" y="295.9" width="1.3" height="40.1" fill="#4e64a0" opacity="0.9"/><rect x="351.4" y="293.5" width="1.3" height="42.5" fill="#4e64a0" opacity="0.9"/><rect x="352.7" y="295.3" width="1.3" height="40.7" fill="#4e64a0" opacity="0.9"/><rect x="353.9" y="299.5" width="1.3" height="36.5" fill="#4e64a0" opacity="0.9"/><rect x="355.2" y="295.4" width="1.3" height="40.6" fill="#4e64a0" opacity="0.9"/><rect x="356.4" y="300.6" width="1.3" height="35.4" fill="#4e64a0" opacity="0.9"/><rect x="357.7" y="294.5" width="1.3" height="41.5" fill="#4e64a0" opacity="0.9"/><rect x="358.9" y="295.0" width="1.3" height="41.0" fill="#4e64a0" opacity="0.9"/><rect x="360.2" y="297.1" width="1.3" height="38.9" fill="#4e64a0" opacity="0.9"/><rect x="361.4" y="295.5" width="1.3" height="40.5" fill="#4e64a0" opacity="0.9"/><rect x="362.7" y="297.4" width="1.3" height="38.6" fill="#4e64a0" opacity="0.9"/><rect x="363.9" y="293.2" width="1.3" height="42.8" fill="#4e64a0" opacity="0.9"/><rect x="365.2" y="290.1" width="1.3" height="45.9" fill="#4e64a0" opacity="0.9"/><rect x="366.4" y="294.6" width="1.3" height="41.4" fill="#4e64a0" opacity="0.9"/><rect x="367.7" y="290.7" width="1.3" height="45.3" fill="#4e64a0" opacity="0.9"/><rect x="368.9" y="292.7" width="1.3" height="43.3" fill="#4e64a0" opacity="0.9"/><rect x="370.2" y="296.6" width="1.3" height="39.4" fill="#4e64a0" opacity="0.9"/><rect x="371.4" y="297.6" width="1.3" height="38.4" fill="#4e64a0" opacity="0.9"/><rect x="372.7" y="300.0" width="1.3" height="36.0" fill="#4e64a0" opacity="0.9"/><rect x="373.9" y="297.5" width="1.3" height="38.5" fill="#4e64a0" opacity="0.9"/><rect x="375.2" y="296.1" width="1.3" height="39.9" fill="#4e64a0" opacity="0.9"/><rect x="376.5" y="293.8" width="1.3" height="42.2" fill="#4e64a0" opacity="0.9"/><rect x="377.7" y="295.2" width="1.3" height="40.8" fill="#4e64a0" opacity="0.9"/><rect x="379.0" y="293.2" width="1.3" height="42.8" fill="#4e64a0" opacity="0.9"/><rect x="380.2" y="291.1" width="1.3" height="44.9" fill="#4e64a0" opacity="0.9"/><rect x="381.5" y="295.9" width="1.3" height="40.1" fill="#4e64a0" opacity="0.9"/><rect x="382.7" y="296.9" width="1.3" height="39.1" fill="#4e64a0" opacity="0.9"/><rect x="384.0" y="293.4" width="1.3" height="42.6" fill="#4e64a0" opacity="0.9"/><rect x="385.2" y="298.1" width="1.3" height="37.9" fill="#4e64a0" opacity="0.9"/><rect x="386.5" y="295.8" width="1.3" height="40.2" fill="#4e64a0" opacity="0.9"/><rect x="387.7" y="293.4" width="1.3" height="42.6" fill="#4e64a0" opacity="0.9"/><rect x="389.0" y="299.4" width="1.3" height="36.6" fill="#4e64a0" opacity="0.9"/><rect x="390.2" y="290.2" width="1.3" height="45.8" fill="#4e64a0" opacity="0.9"/><rect x="391.5" y="293.0" width="1.3" height="43.0" fill="#4e64a0" opacity="0.9"/><rect x="392.7" y="293.5" width="1.3" height="42.5" fill="#4e64a0" opacity="0.9"/><rect x="394.0" y="297.4" width="1.3" height="38.6" fill="#4e64a0" opacity="0.9"/><rect x="395.2" y="292.8" width="1.3" height="43.2" fill="#4e64a0" opacity="0.9"/><rect x="396.5" y="300.8" width="1.3" height="35.2" fill="#4e64a0" opacity="0.9"/><rect x="397.7" y="291.2" width="1.3" height="44.8" fill="#4e64a0" opacity="0.9"/><rect x="399.0" y="295.0" width="1.3" height="41.0" fill="#4e64a0" opacity="0.9"/><rect x="400.2" y="295.2" width="1.3" height="40.8" fill="#4e64a0" opacity="0.9"/><rect x="401.5" y="298.2" width="1.3" height="37.8" fill="#4e64a0" opacity="0.9"/><rect x="402.7" y="292.8" width="1.3" height="43.2" fill="#4e64a0" opacity="0.9"/><rect x="404.0" y="291.8" width="1.3" height="44.2" fill="#4e64a0" opacity="0.9"/><rect x="255" y="304" width="150" height="32" fill="#1d6a80" opacity="0.5"/><linearGradient id="tg" x1="0" y1="0" x2="0" y2="1"><stop offset="0" stop-color="#2a4f70"/><stop offset="1" stop-color="#232736"/></linearGradient><rect x="255" y="336" width="150" height="22" fill="url(#tg)"/></svg>
<svg style="left:413px;top:280px;width:157px;height:100px" viewBox="413 280 157 100"><rect x="418" y="288" width="149" height="16" fill="#0c3636"/><rect x="418.0" y="296.5" width="1.2" height="35.7" fill="#4f6eaa" opacity="0.85"/><rect x="419.5" y="290.6" width="1.2" height="43.1" fill="#4f6eaa" opacity="0.85"/><rect x="421.0" y="305.8" width="1.2" height="28.0" fill="#4f6eaa" opacity="0.85"/><rect x="422.5" y="296.0" width="1.2" height="51.3" fill="#4f6eaa" opacity="0.85"/><rect x="424.0" y="300.0" width="1.2" height="55.1" fill="#4f6eaa" opacity="0.85"/><rect x="425.5" y="298.7" width="1.2" height="40.3" fill="#4f6eaa" opacity="0.85"/><rect x="427.0" y="301.9" width="1.2" height="30.8" fill="#4f6eaa" opacity="0.85"/><rect x="428.5" y="309.5" width="1.2" height="28.1" fill="#4f6eaa" opacity="0.85"/><rect x="430.0" y="296.1" width="1.2" height="51.1" fill="#4f6eaa" opacity="0.85"/><rect x="431.5" y="290.0" width="1.2" height="56.5" fill="#4f6eaa" opacity="0.85"/><rect x="432.9" y="308.1" width="1.2" height="28.4" fill="#4f6eaa" opacity="0.85"/><rect x="434.4" y="310.6" width="1.2" height="31.8" fill="#4f6eaa" opacity="0.85"/><rect x="435.9" y="306.1" width="1.2" height="34.4" fill="#4f6eaa" opacity="0.85"/><rect x="437.4" y="296.5" width="1.2" height="37.9" fill="#4f6eaa" opacity="0.85"/><rect x="438.9" y="286.2" width="1.2" height="46.1" fill="#4f6eaa" opacity="0.85"/><rect x="440.4" y="311.7" width="1.2" height="30.8" fill="#4f6eaa" opacity="0.85"/><rect x="441.9" y="298.0" width="1.2" height="55.9" fill="#4f6eaa" opacity="0.85"/><rect x="443.4" y="301.7" width="1.2" height="54.5" fill="#4f6eaa" opacity="0.85"/><rect x="444.9" y="295.3" width="1.2" height="37.4" fill="#4f6eaa" opacity="0.85"/><rect x="446.4" y="309.9" width="1.2" height="21.0" fill="#4f6eaa" opacity="0.85"/><rect x="447.9" y="306.6" width="1.2" height="37.9" fill="#4f6eaa" opacity="0.85"/><rect x="449.4" y="311.6" width="1.2" height="43.7" fill="#4f6eaa" opacity="0.85"/><rect x="450.9" y="303.2" width="1.2" height="24.0" fill="#4f6eaa" opacity="0.85"/><rect x="452.4" y="286.6" width="1.2" height="54.1" fill="#4f6eaa" opacity="0.85"/><rect x="453.9" y="307.3" width="1.2" height="21.2" fill="#4f6eaa" opacity="0.85"/><rect x="455.4" y="297.1" width="1.2" height="31.6" fill="#4f6eaa" opacity="0.85"/><rect x="456.9" y="294.1" width="1.2" height="32.1" fill="#4f6eaa" opacity="0.85"/><rect x="458.4" y="294.6" width="1.2" height="47.7" fill="#4f6eaa" opacity="0.85"/><rect x="459.9" y="291.2" width="1.2" height="59.2" fill="#4f6eaa" opacity="0.85"/><rect x="461.4" y="287.4" width="1.2" height="45.1" fill="#4f6eaa" opacity="0.85"/><rect x="462.8" y="292.7" width="1.2" height="45.8" fill="#4f6eaa" opacity="0.85"/><rect x="464.3" y="305.9" width="1.2" height="31.1" fill="#4f6eaa" opacity="0.85"/><rect x="465.8" y="304.1" width="1.2" height="50.5" fill="#4f6eaa" opacity="0.85"/><rect x="467.3" y="289.4" width="1.2" height="63.4" fill="#4f6eaa" opacity="0.85"/><rect x="468.8" y="301.6" width="1.2" height="47.6" fill="#4f6eaa" opacity="0.85"/><rect x="470.3" y="301.8" width="1.2" height="36.8" fill="#4f6eaa" opacity="0.85"/><rect x="471.8" y="288.5" width="1.2" height="41.9" fill="#4f6eaa" opacity="0.85"/><rect x="473.3" y="290.5" width="1.2" height="41.0" fill="#4f6eaa" opacity="0.85"/><rect x="474.8" y="289.8" width="1.2" height="42.7" fill="#4f6eaa" opacity="0.85"/><rect x="476.3" y="300.6" width="1.2" height="49.3" fill="#4f6eaa" opacity="0.85"/><rect x="477.8" y="306.7" width="1.2" height="45.5" fill="#4f6eaa" opacity="0.85"/><rect x="479.3" y="289.0" width="1.2" height="62.4" fill="#4f6eaa" opacity="0.85"/><rect x="480.8" y="290.8" width="1.2" height="37.4" fill="#4f6eaa" opacity="0.85"/><rect x="482.3" y="293.5" width="1.2" height="50.7" fill="#4f6eaa" opacity="0.85"/><rect x="483.8" y="287.2" width="1.2" height="45.5" fill="#4f6eaa" opacity="0.85"/><rect x="485.3" y="296.4" width="1.2" height="55.1" fill="#4f6eaa" opacity="0.85"/><rect x="486.8" y="296.4" width="1.2" height="42.5" fill="#4f6eaa" opacity="0.85"/><rect x="488.3" y="295.6" width="1.2" height="33.2" fill="#4f6eaa" opacity="0.85"/><rect x="489.8" y="308.9" width="1.2" height="45.7" fill="#4f6eaa" opacity="0.85"/><rect x="491.3" y="304.8" width="1.2" height="33.6" fill="#4f6eaa" opacity="0.85"/><rect x="492.7" y="297.5" width="1.2" height="38.1" fill="#4f6eaa" opacity="0.85"/><rect x="494.2" y="303.0" width="1.2" height="43.2" fill="#4f6eaa" opacity="0.85"/><rect x="495.7" y="294.1" width="1.2" height="59.0" fill="#4f6eaa" opacity="0.85"/><rect x="497.2" y="304.7" width="1.2" height="28.0" fill="#4f6eaa" opacity="0.85"/><rect x="498.7" y="307.0" width="1.2" height="39.9" fill="#4f6eaa" opacity="0.85"/><rect x="500.2" y="292.5" width="1.2" height="42.7" fill="#4f6eaa" opacity="0.85"/><rect x="501.7" y="305.5" width="1.2" height="22.9" fill="#4f6eaa" opacity="0.85"/><rect x="503.2" y="297.4" width="1.2" height="58.5" fill="#4f6eaa" opacity="0.85"/><rect x="504.7" y="292.7" width="1.2" height="48.9" fill="#4f6eaa" opacity="0.85"/><rect x="506.2" y="309.6" width="1.2" height="43.5" fill="#4f6eaa" opacity="0.85"/><rect x="507.7" y="306.5" width="1.2" height="36.0" fill="#4f6eaa" opacity="0.85"/><rect x="509.2" y="310.2" width="1.2" height="23.8" fill="#4f6eaa" opacity="0.85"/><rect x="510.7" y="308.9" width="1.2" height="29.8" fill="#4f6eaa" opacity="0.85"/><rect x="512.2" y="303.1" width="1.2" height="41.8" fill="#4f6eaa" opacity="0.85"/><rect x="513.7" y="293.3" width="1.2" height="53.7" fill="#4f6eaa" opacity="0.85"/><rect x="515.2" y="301.7" width="1.2" height="54.9" fill="#4f6eaa" opacity="0.85"/><rect x="516.7" y="303.3" width="1.2" height="36.3" fill="#4f6eaa" opacity="0.85"/><rect x="518.2" y="295.9" width="1.2" height="57.6" fill="#4f6eaa" opacity="0.85"/><rect x="519.7" y="295.0" width="1.2" height="51.7" fill="#4f6eaa" opacity="0.85"/><rect x="521.2" y="304.1" width="1.2" height="51.9" fill="#4f6eaa" opacity="0.85"/><rect x="522.6" y="291.0" width="1.2" height="55.6" fill="#4f6eaa" opacity="0.85"/><rect x="524.1" y="290.5" width="1.2" height="55.4" fill="#4f6eaa" opacity="0.85"/><rect x="525.6" y="303.1" width="1.2" height="45.9" fill="#4f6eaa" opacity="0.85"/><rect x="527.1" y="308.5" width="1.2" height="24.6" fill="#4f6eaa" opacity="0.85"/><rect x="528.6" y="308.4" width="1.2" height="28.3" fill="#4f6eaa" opacity="0.85"/><rect x="530.1" y="296.4" width="1.2" height="33.1" fill="#4f6eaa" opacity="0.85"/><rect x="531.6" y="299.8" width="1.2" height="26.2" fill="#4f6eaa" opacity="0.85"/><rect x="533.1" y="294.1" width="1.2" height="52.8" fill="#4f6eaa" opacity="0.85"/><rect x="534.6" y="305.4" width="1.2" height="25.8" fill="#4f6eaa" opacity="0.85"/><rect x="536.1" y="306.4" width="1.2" height="33.4" fill="#4f6eaa" opacity="0.85"/><rect x="537.6" y="291.3" width="1.2" height="57.9" fill="#4f6eaa" opacity="0.85"/><rect x="539.1" y="305.2" width="1.2" height="35.3" fill="#4f6eaa" opacity="0.85"/><rect x="540.6" y="299.8" width="1.2" height="45.4" fill="#4f6eaa" opacity="0.85"/><rect x="542.1" y="302.4" width="1.2" height="47.3" fill="#4f6eaa" opacity="0.85"/><rect x="543.6" y="306.0" width="1.2" height="26.2" fill="#4f6eaa" opacity="0.85"/><rect x="545.1" y="286.5" width="1.2" height="42.7" fill="#4f6eaa" opacity="0.85"/><rect x="546.6" y="294.0" width="1.2" height="50.0" fill="#4f6eaa" opacity="0.85"/><rect x="548.1" y="311.0" width="1.2" height="27.9" fill="#4f6eaa" opacity="0.85"/><rect x="549.6" y="295.6" width="1.2" height="47.7" fill="#4f6eaa" opacity="0.85"/><rect x="551.1" y="310.7" width="1.2" height="33.6" fill="#4f6eaa" opacity="0.85"/><rect x="552.5" y="293.7" width="1.2" height="55.8" fill="#4f6eaa" opacity="0.85"/><rect x="554.0" y="311.8" width="1.2" height="38.8" fill="#4f6eaa" opacity="0.85"/><rect x="555.5" y="296.4" width="1.2" height="35.0" fill="#4f6eaa" opacity="0.85"/><rect x="557.0" y="298.0" width="1.2" height="32.0" fill="#4f6eaa" opacity="0.85"/><rect x="558.5" y="289.4" width="1.2" height="50.4" fill="#4f6eaa" opacity="0.85"/><rect x="560.0" y="308.1" width="1.2" height="39.7" fill="#4f6eaa" opacity="0.85"/><rect x="561.5" y="296.9" width="1.2" height="58.7" fill="#4f6eaa" opacity="0.85"/><rect x="563.0" y="290.6" width="1.2" height="43.1" fill="#4f6eaa" opacity="0.85"/><rect x="564.5" y="293.1" width="1.2" height="50.6" fill="#4f6eaa" opacity="0.85"/><rect x="566.0" y="309.1" width="1.2" height="28.7" fill="#4f6eaa" opacity="0.85"/><rect x="418" y="304" width="128" height="34" fill="#12606a" opacity="0.5"/></svg>
<svg style="left:0px;top:336px;width:175px;height:16.5px;opacity:1.0" viewBox="0 336 175 16.5"><rect x="0" y="336" width="175" height="16.5" fill="#5a0b3c"/><path d="M0.0,352.5 L1.0,339.1 L2.1,352.5 Z" fill="#047048"/><path d="M2.5,352.5 L3.5,338.5 L4.5,352.5 Z" fill="#047048"/><path d="M5.0,352.5 L6.4,345.3 L7.7,352.5 Z" fill="#047048"/><path d="M7.5,352.5 L8.9,342.7 L10.3,352.5 Z" fill="#047048"/><path d="M10.0,352.5 L11.5,342.6 L13.0,352.5 Z" fill="#047048"/><path d="M12.5,352.5 L13.4,344.0 L14.2,352.5 Z" fill="#047048"/><path d="M15.0,352.5 L16.2,343.6 L17.3,352.5 Z" fill="#047048"/><path d="M17.5,352.5 L18.4,343.3 L19.4,352.5 Z" fill="#047048"/><path d="M20.0,352.5 L20.9,344.8 L21.8,352.5 Z" fill="#047048"/><path d="M22.5,352.5 L23.5,341.2 L24.4,352.5 Z" fill="#047048"/><path d="M25.0,352.5 L25.9,340.9 L26.8,352.5 Z" fill="#047048"/><path d="M27.5,352.5 L28.8,345.3 L30.2,352.5 Z" fill="#047048"/><path d="M30.0,352.5 L31.3,338.8 L32.5,352.5 Z" fill="#047048"/><path d="M32.5,352.5 L33.8,339.2 L35.1,352.5 Z" fill="#047048"/><path d="M35.0,352.5 L36.2,342.2 L37.4,352.5 Z" fill="#047048"/><path d="M37.5,352.5 L38.9,345.4 L40.4,352.5 Z" fill="#047048"/><path d="M40.0,352.5 L41.0,344.7 L42.0,352.5 Z" fill="#047048"/><path d="M42.5,352.5 L43.8,339.3 L45.0,352.5 Z" fill="#047048"/><path d="M45.0,352.5 L46.5,343.3 L48.1,352.5 Z" fill="#047048"/><path d="M47.5,352.5 L48.4,346.5 L49.3,352.5 Z" fill="#047048"/><path d="M50.0,352.5 L51.4,342.2 L52.7,352.5 Z" fill="#047048"/><path d="M52.5,352.5 L54.1,342.3 L55.7,352.5 Z" fill="#047048"/><path d="M55.0,352.5 L56.1,338.6 L57.2,352.5 Z" fill="#047048"/><path d="M57.5,352.5 L59.1,346.1 L60.7,352.5 Z" fill="#047048"/><path d="M60.0,352.5 L61.0,343.1 L61.9,352.5 Z" fill="#047048"/><path d="M62.5,352.5 L63.5,343.8 L64.6,352.5 Z" fill="#047048"/><path d="M65.0,352.5 L66.0,344.8 L67.1,352.5 Z" fill="#047048"/><path d="M67.5,352.5 L68.8,340.2 L70.0,352.5 Z" fill="#047048"/><path d="M70.0,352.5 L71.2,345.5 L72.4,352.5 Z" fill="#047048"/><path d="M72.5,352.5 L73.7,343.9 L75.0,352.5 Z" fill="#047048"/><path d="M75.0,352.5 L75.8,343.2 L76.5,352.5 Z" fill="#047048"/><path d="M77.5,352.5 L79.0,341.9 L80.5,352.5 Z" fill="#047048"/><path d="M80.0,352.5 L81.4,343.1 L82.9,352.5 Z" fill="#047048"/><path d="M82.5,352.5 L83.3,347.1 L84.1,352.5 Z" fill="#047048"/><path d="M85.0,352.5 L86.2,345.1 L87.4,352.5 Z" fill="#047048"/><path d="M87.5,352.5 L88.4,338.5 L89.4,352.5 Z" fill="#047048"/><path d="M90.0,352.5 L91.2,343.0 L92.3,352.5 Z" fill="#047048"/><path d="M92.5,352.5 L93.6,346.4 L94.6,352.5 Z" fill="#047048"/><path d="M95.0,352.5 L96.1,345.6 L97.2,352.5 Z" fill="#047048"/><path d="M97.5,352.5 L99.1,347.0 L100.7,352.5 Z" fill="#047048"/><path d="M100.0,352.5 L101.5,339.9 L102.9,352.5 Z" fill="#047048"/><path d="M102.5,352.5 L103.5,339.5 L104.6,352.5 Z" fill="#047048"/><path d="M105.0,352.5 L106.1,346.5 L107.3,352.5 Z" fill="#047048"/><path d="M107.5,352.5 L108.3,338.7 L109.0,352.5 Z" fill="#047048"/><path d="M110.0,352.5 L111.5,347.4 L113.0,352.5 Z" fill="#047048"/><path d="M112.5,352.5 L113.5,347.2 L114.6,352.5 Z" fill="#047048"/><path d="M115.0,352.5 L116.3,341.2 L117.7,352.5 Z" fill="#047048"/><path d="M117.5,352.5 L118.8,338.9 L120.0,352.5 Z" fill="#047048"/><path d="M120.0,352.5 L120.9,339.9 L121.8,352.5 Z" fill="#047048"/><path d="M122.5,352.5 L123.5,345.3 L124.4,352.5 Z" fill="#047048"/><path d="M125.0,352.5 L126.3,347.4 L127.7,352.5 Z" fill="#047048"/><path d="M127.5,352.5 L128.8,343.9 L130.1,352.5 Z" fill="#047048"/><path d="M130.0,352.5 L131.6,340.6 L133.2,352.5 Z" fill="#047048"/><path d="M132.5,352.5 L134.0,338.8 L135.6,352.5 Z" fill="#047048"/><path d="M135.0,352.5 L136.3,343.3 L137.6,352.5 Z" fill="#047048"/><path d="M137.5,352.5 L138.6,343.4 L139.7,352.5 Z" fill="#047048"/><path d="M140.0,352.5 L141.1,340.0 L142.1,352.5 Z" fill="#047048"/><path d="M142.5,352.5 L143.5,344.3 L144.5,352.5 Z" fill="#047048"/><path d="M145.0,352.5 L146.4,345.7 L147.7,352.5 Z" fill="#047048"/><path d="M147.5,352.5 L148.3,338.7 L149.2,352.5 Z" fill="#047048"/><path d="M150.0,352.5 L151.2,346.2 L152.4,352.5 Z" fill="#047048"/><path d="M152.5,352.5 L153.7,339.7 L154.9,352.5 Z" fill="#047048"/><path d="M155.0,352.5 L156.4,343.5 L157.7,352.5 Z" fill="#047048"/><path d="M157.5,352.5 L159.1,342.8 L160.6,352.5 Z" fill="#047048"/><path d="M160.0,352.5 L161.5,338.6 L163.1,352.5 Z" fill="#047048"/><path d="M162.5,352.5 L163.6,344.9 L164.7,352.5 Z" fill="#047048"/><path d="M165.0,352.5 L165.9,339.4 L166.8,352.5 Z" fill="#047048"/><path d="M167.5,352.5 L168.8,344.9 L170.2,352.5 Z" fill="#047048"/><path d="M170.0,352.5 L170.8,343.3 L171.6,352.5 Z" fill="#047048"/><path d="M172.5,352.5 L173.7,339.4 L174.9,352.5 Z" fill="#047048"/></svg>
<svg style="left:0px;top:367.5px;width:168px;height:17px;opacity:1.0" viewBox="0 367.5 168 17"><rect x="0" y="367.5" width="168" height="17" fill="#5a0b3c"/><path d="M0.0,384.5 L1.4,368.3 L2.9,384.5 Z" fill="#02483a"/><path d="M2.4,384.5 L3.3,372.6 L4.2,384.5 Z" fill="#02483a"/><path d="M4.8,384.5 L6.0,374.1 L7.2,384.5 Z" fill="#02483a"/><path d="M7.2,384.5 L8.4,374.5 L9.7,384.5 Z" fill="#02483a"/><path d="M9.6,384.5 L11.0,373.6 L12.3,384.5 Z" fill="#02483a"/><path d="M12.0,384.5 L12.8,370.4 L13.6,384.5 Z" fill="#02483a"/><path d="M14.4,384.5 L15.2,375.1 L16.0,384.5 Z" fill="#02483a"/><path d="M16.8,384.5 L18.4,372.2 L19.9,384.5 Z" fill="#02483a"/><path d="M19.2,384.5 L20.1,370.5 L21.1,384.5 Z" fill="#02483a"/><path d="M21.6,384.5 L22.5,370.8 L23.4,384.5 Z" fill="#02483a"/><path d="M24.0,384.5 L25.0,373.9 L25.9,384.5 Z" fill="#02483a"/><path d="M26.4,384.5 L27.6,368.1 L28.8,384.5 Z" fill="#02483a"/><path d="M28.8,384.5 L29.7,369.7 L30.5,384.5 Z" fill="#02483a"/><path d="M31.2,384.5 L32.6,367.6 L34.0,384.5 Z" fill="#02483a"/><path d="M33.6,384.5 L34.8,370.7 L36.0,384.5 Z" fill="#02483a"/><path d="M36.0,384.5 L37.5,371.6 L38.9,384.5 Z" fill="#02483a"/><path d="M38.4,384.5 L39.7,368.1 L40.9,384.5 Z" fill="#02483a"/><path d="M40.8,384.5 L41.8,374.6 L42.7,384.5 Z" fill="#02483a"/><path d="M43.2,384.5 L44.2,371.2 L45.2,384.5 Z" fill="#02483a"/><path d="M45.6,384.5 L47.1,370.3 L48.6,384.5 Z" fill="#02483a"/><path d="M48.0,384.5 L49.3,369.4 L50.7,384.5 Z" fill="#02483a"/><path d="M50.4,384.5 L51.8,367.9 L53.2,384.5 Z" fill="#02483a"/><path d="M52.8,384.5 L54.2,368.2 L55.6,384.5 Z" fill="#02483a"/><path d="M55.2,384.5 L56.1,368.1 L57.0,384.5 Z" fill="#02483a"/><path d="M57.6,384.5 L58.6,369.7 L59.5,384.5 Z" fill="#02483a"/><path d="M60.0,384.5 L61.1,374.1 L62.3,384.5 Z" fill="#02483a"/><path d="M62.4,384.5 L63.3,367.9 L64.1,384.5 Z" fill="#02483a"/><path d="M64.8,384.5 L66.1,371.1 L67.4,384.5 Z" fill="#02483a"/><path d="M67.2,384.5 L68.3,372.9 L69.4,384.5 Z" fill="#02483a"/><path d="M69.6,384.5 L71.1,374.4 L72.6,384.5 Z" fill="#02483a"/><path d="M72.0,384.5 L73.6,375.6 L75.1,384.5 Z" fill="#02483a"/><path d="M74.4,384.5 L75.9,375.3 L77.5,384.5 Z" fill="#02483a"/><path d="M76.8,384.5 L78.1,373.6 L79.4,384.5 Z" fill="#02483a"/><path d="M79.2,384.5 L80.2,372.5 L81.3,384.5 Z" fill="#02483a"/><path d="M81.6,384.5 L82.6,374.6 L83.7,384.5 Z" fill="#02483a"/><path d="M84.0,384.5 L85.1,375.2 L86.2,384.5 Z" fill="#02483a"/><path d="M86.4,384.5 L87.8,367.7 L89.3,384.5 Z" fill="#02483a"/><path d="M88.8,384.5 L89.5,371.6 L90.2,384.5 Z" fill="#02483a"/><path d="M91.2,384.5 L92.6,374.5 L94.0,384.5 Z" fill="#02483a"/><path d="M93.6,384.5 L94.7,374.9 L95.8,384.5 Z" fill="#02483a"/><path d="M96.0,384.5 L96.9,368.9 L97.8,384.5 Z" fill="#02483a"/><path d="M98.4,384.5 L99.7,372.1 L101.0,384.5 Z" fill="#02483a"/><path d="M100.8,384.5 L101.7,372.2 L102.6,384.5 Z" fill="#02483a"/><path d="M103.2,384.5 L104.7,368.8 L106.3,384.5 Z" fill="#02483a"/><path d="M105.6,384.5 L107.1,376.0 L108.6,384.5 Z" fill="#02483a"/><path d="M108.0,384.5 L108.8,371.9 L109.6,384.5 Z" fill="#02483a"/><path d="M110.4,384.5 L111.6,369.4 L112.8,384.5 Z" fill="#02483a"/><path d="M112.8,384.5 L114.1,374.9 L115.4,384.5 Z" fill="#02483a"/><path d="M115.2,384.5 L116.7,368.4 L118.2,384.5 Z" fill="#02483a"/><path d="M117.6,384.5 L118.7,373.0 L119.8,384.5 Z" fill="#02483a"/><path d="M120.0,384.5 L121.1,374.0 L122.1,384.5 Z" fill="#02483a"/><path d="M122.4,384.5 L123.1,372.1 L123.9,384.5 Z" fill="#02483a"/><path d="M124.8,384.5 L126.3,368.1 L127.8,384.5 Z" fill="#02483a"/><path d="M127.2,384.5 L128.6,371.1 L130.0,384.5 Z" fill="#02483a"/><path d="M129.6,384.5 L130.6,370.7 L131.7,384.5 Z" fill="#02483a"/><path d="M132.0,384.5 L133.5,368.4 L134.9,384.5 Z" fill="#02483a"/><path d="M134.4,384.5 L135.8,369.6 L137.1,384.5 Z" fill="#02483a"/><path d="M136.8,384.5 L137.8,369.0 L138.7,384.5 Z" fill="#02483a"/><path d="M139.2,384.5 L140.5,368.3 L141.8,384.5 Z" fill="#02483a"/><path d="M141.6,384.5 L142.8,375.3 L144.1,384.5 Z" fill="#02483a"/><path d="M144.0,384.5 L144.9,373.0 L145.9,384.5 Z" fill="#02483a"/><path d="M146.4,384.5 L147.2,375.6 L148.0,384.5 Z" fill="#02483a"/><path d="M148.8,384.5 L150.0,369.6 L151.2,384.5 Z" fill="#02483a"/><path d="M151.2,384.5 L152.2,372.9 L153.1,384.5 Z" fill="#02483a"/><path d="M153.6,384.5 L154.4,372.5 L155.2,384.5 Z" fill="#02483a"/><path d="M156.0,384.5 L157.1,367.9 L158.2,384.5 Z" fill="#02483a"/><path d="M158.4,384.5 L159.9,372.4 L161.3,384.5 Z" fill="#02483a"/><path d="M160.8,384.5 L162.3,371.5 L163.8,384.5 Z" fill="#02483a"/><path d="M163.2,384.5 L164.7,374.0 L166.3,384.5 Z" fill="#02483a"/><path d="M165.6,384.5 L166.7,373.5 L167.8,384.5 Z" fill="#02483a"/></svg>
<svg style="left:0px;top:399px;width:160px;height:16px;opacity:0.5" viewBox="0 399 160 16"><rect x="0" y="399" width="160" height="16" fill="#3a1a36"/><path d="M0.0,415 L2.2,405.5 L4.4,415 Z" fill="#03483a"/><path d="M4.0,415 L5.9,406.6 L7.8,415 Z" fill="#03483a"/><path d="M8.0,415 L9.5,409.9 L11.0,415 Z" fill="#03483a"/><path d="M12.0,415 L13.9,411.5 L15.9,415 Z" fill="#03483a"/><path d="M16.0,415 L18.2,401.7 L20.5,415 Z" fill="#03483a"/><path d="M20.0,415 L22.6,403.2 L25.1,415 Z" fill="#03483a"/><path d="M24.0,415 L25.5,408.3 L27.0,415 Z" fill="#03483a"/><path d="M28.0,415 L29.7,411.4 L31.3,415 Z" fill="#03483a"/><path d="M32.0,415 L33.2,411.3 L34.4,415 Z" fill="#03483a"/><path d="M36.0,415 L38.1,403.9 L40.2,415 Z" fill="#03483a"/><path d="M40.0,415 L41.7,403.7 L43.3,415 Z" fill="#03483a"/><path d="M44.0,415 L46.0,401.8 L48.1,415 Z" fill="#03483a"/><path d="M48.0,415 L49.6,410.1 L51.3,415 Z" fill="#03483a"/><path d="M52.0,415 L53.9,408.1 L55.9,415 Z" fill="#03483a"/><path d="M56.0,415 L58.6,408.4 L61.2,415 Z" fill="#03483a"/><path d="M60.0,415 L61.7,406.6 L63.4,415 Z" fill="#03483a"/><path d="M64.0,415 L66.2,406.0 L68.4,415 Z" fill="#03483a"/><path d="M68.0,415 L70.6,411.8 L73.2,415 Z" fill="#03483a"/><path d="M72.0,415 L73.3,404.0 L74.7,415 Z" fill="#03483a"/><path d="M76.0,415 L77.5,411.2 L79.0,415 Z" fill="#03483a"/><path d="M80.0,415 L81.4,408.2 L82.8,415 Z" fill="#03483a"/><path d="M84.0,415 L86.2,406.2 L88.4,415 Z" fill="#03483a"/><path d="M88.0,415 L89.7,411.3 L91.4,415 Z" fill="#03483a"/><path d="M92.0,415 L94.3,405.4 L96.7,415 Z" fill="#03483a"/><path d="M96.0,415 L97.4,406.4 L98.7,415 Z" fill="#03483a"/><path d="M100.0,415 L101.5,404.4 L103.1,415 Z" fill="#03483a"/><path d="M104.0,415 L106.1,409.1 L108.2,415 Z" fill="#03483a"/><path d="M108.0,415 L109.9,401.6 L111.8,415 Z" fill="#03483a"/><path d="M112.0,415 L114.4,409.3 L116.7,415 Z" fill="#03483a"/><path d="M116.0,415 L118.0,408.7 L120.0,415 Z" fill="#03483a"/><path d="M120.0,415 L122.5,406.0 L125.1,415 Z" fill="#03483a"/><path d="M124.0,415 L125.6,405.8 L127.1,415 Z" fill="#03483a"/><path d="M128.0,415 L129.7,404.0 L131.4,415 Z" fill="#03483a"/><path d="M132.0,415 L133.6,405.2 L135.2,415 Z" fill="#03483a"/><path d="M136.0,415 L138.4,404.8 L140.8,415 Z" fill="#03483a"/><path d="M140.0,415 L141.4,402.3 L142.8,415 Z" fill="#03483a"/><path d="M144.0,415 L145.4,403.1 L146.9,415 Z" fill="#03483a"/><path d="M148.0,415 L150.4,411.6 L152.7,415 Z" fill="#03483a"/><path d="M152.0,415 L153.2,409.8 L154.4,415 Z" fill="#03483a"/><path d="M156.0,415 L158.2,408.1 L160.4,415 Z" fill="#03483a"/></svg>
<div class="a" style="left:208px;top:320.5px;width:252px;height:16px;overflow:hidden;background:#5a0b3c;opacity:0.9"><div class="a" style="left:-1px;top:-1.7px;font-size:32px;font-weight:400;letter-spacing:0px;color:#047048;-webkit-text-stroke:0.3px #047048;line-height:32px">32d 13h 47m 17s</div></div>
<svg style="left:265px;top:336.5px;width:205px;height:12.5px;opacity:0.75" viewBox="265 336.5 205 12.5"><rect x="265" y="336.5" width="205" height="12.5" fill="#5a0b3c"/><path d="M265.0,349.0 L266.4,342.2 L267.7,349.0 Z" fill="#047048"/><path d="M267.6,349.0 L268.5,345.2 L269.5,349.0 Z" fill="#047048"/><path d="M270.1,349.0 L271.5,339.1 L272.9,349.0 Z" fill="#047048"/><path d="M272.7,349.0 L274.1,340.8 L275.5,349.0 Z" fill="#047048"/><path d="M275.2,349.0 L276.1,345.2 L276.9,349.0 Z" fill="#047048"/><path d="M277.8,349.0 L278.7,341.0 L279.7,349.0 Z" fill="#047048"/><path d="M280.4,349.0 L282.0,340.6 L283.6,349.0 Z" fill="#047048"/><path d="M282.9,349.0 L284.1,339.5 L285.2,349.0 Z" fill="#047048"/><path d="M285.5,349.0 L286.4,339.4 L287.3,349.0 Z" fill="#047048"/><path d="M288.1,349.0 L288.9,338.7 L289.7,349.0 Z" fill="#047048"/><path d="M290.6,349.0 L292.0,344.7 L293.4,349.0 Z" fill="#047048"/><path d="M293.2,349.0 L294.6,340.8 L296.1,349.0 Z" fill="#047048"/><path d="M295.8,349.0 L296.7,345.8 L297.7,349.0 Z" fill="#047048"/><path d="M298.3,349.0 L299.2,343.5 L300.1,349.0 Z" fill="#047048"/><path d="M300.9,349.0 L302.0,340.3 L303.1,349.0 Z" fill="#047048"/><path d="M303.4,349.0 L304.8,341.8 L306.1,349.0 Z" fill="#047048"/><path d="M306.0,349.0 L307.1,341.0 L308.2,349.0 Z" fill="#047048"/><path d="M308.6,349.0 L309.7,344.6 L310.8,349.0 Z" fill="#047048"/><path d="M311.1,349.0 L312.6,343.8 L314.0,349.0 Z" fill="#047048"/><path d="M313.7,349.0 L314.7,345.6 L315.6,349.0 Z" fill="#047048"/><path d="M316.2,349.0 L317.7,339.9 L319.1,349.0 Z" fill="#047048"/><path d="M318.8,349.0 L320.0,340.2 L321.3,349.0 Z" fill="#047048"/><path d="M321.4,349.0 L323.0,340.5 L324.6,349.0 Z" fill="#047048"/><path d="M323.9,349.0 L324.9,342.1 L325.8,349.0 Z" fill="#047048"/><path d="M326.5,349.0 L327.3,345.7 L328.1,349.0 Z" fill="#047048"/><path d="M329.1,349.0 L330.4,340.2 L331.8,349.0 Z" fill="#047048"/><path d="M331.6,349.0 L333.1,340.8 L334.6,349.0 Z" fill="#047048"/><path d="M334.2,349.0 L335.4,346.3 L336.7,349.0 Z" fill="#047048"/><path d="M336.8,349.0 L338.4,342.1 L340.0,349.0 Z" fill="#047048"/><path d="M339.3,349.0 L340.7,343.4 L342.1,349.0 Z" fill="#047048"/><path d="M341.9,349.0 L343.4,342.6 L344.9,349.0 Z" fill="#047048"/><path d="M344.4,349.0 L345.3,345.3 L346.1,349.0 Z" fill="#047048"/><path d="M347.0,349.0 L347.8,339.4 L348.6,349.0 Z" fill="#047048"/><path d="M349.6,349.0 L350.6,339.8 L351.6,349.0 Z" fill="#047048"/><path d="M352.1,349.0 L353.2,341.1 L354.4,349.0 Z" fill="#047048"/><path d="M354.7,349.0 L356.0,342.6 L357.4,349.0 Z" fill="#047048"/><path d="M357.2,349.0 L358.2,337.8 L359.1,349.0 Z" fill="#047048"/><path d="M359.8,349.0 L361.5,345.0 L363.1,349.0 Z" fill="#047048"/><path d="M362.4,349.0 L363.4,338.4 L364.4,349.0 Z" fill="#047048"/><path d="M364.9,349.0 L366.1,342.7 L367.3,349.0 Z" fill="#047048"/><path d="M367.5,349.0 L369.0,339.1 L370.6,349.0 Z" fill="#047048"/><path d="M370.1,349.0 L371.2,343.0 L372.3,349.0 Z" fill="#047048"/><path d="M372.6,349.0 L373.5,340.5 L374.4,349.0 Z" fill="#047048"/><path d="M375.2,349.0 L376.8,339.7 L378.5,349.0 Z" fill="#047048"/><path d="M377.8,349.0 L378.8,346.1 L379.9,349.0 Z" fill="#047048"/><path d="M380.3,349.0 L381.1,342.6 L381.9,349.0 Z" fill="#047048"/><path d="M382.9,349.0 L383.8,345.7 L384.7,349.0 Z" fill="#047048"/><path d="M385.4,349.0 L387.0,343.7 L388.5,349.0 Z" fill="#047048"/><path d="M388.0,349.0 L389.6,342.2 L391.2,349.0 Z" fill="#047048"/><path d="M390.6,349.0 L391.4,339.6 L392.2,349.0 Z" fill="#047048"/><path d="M393.1,349.0 L393.9,337.8 L394.8,349.0 Z" fill="#047048"/><path d="M395.7,349.0 L396.8,339.5 L397.9,349.0 Z" fill="#047048"/><path d="M398.2,349.0 L399.1,338.7 L399.9,349.0 Z" fill="#047048"/><path d="M400.8,349.0 L402.4,338.7 L403.9,349.0 Z" fill="#047048"/><path d="M403.4,349.0 L405.0,345.7 L406.7,349.0 Z" fill="#047048"/><path d="M405.9,349.0 L407.5,345.5 L409.0,349.0 Z" fill="#047048"/><path d="M408.5,349.0 L410.0,340.9 L411.4,349.0 Z" fill="#047048"/><path d="M411.1,349.0 L412.1,343.4 L413.0,349.0 Z" fill="#047048"/><path d="M413.6,349.0 L415.0,346.4 L416.4,349.0 Z" fill="#047048"/><path d="M416.2,349.0 L417.0,342.1 L417.9,349.0 Z" fill="#047048"/><path d="M418.8,349.0 L420.3,343.9 L421.8,349.0 Z" fill="#047048"/><path d="M421.3,349.0 L422.5,342.7 L423.6,349.0 Z" fill="#047048"/><path d="M423.9,349.0 L425.0,346.4 L426.2,349.0 Z" fill="#047048"/><path d="M426.4,349.0 L427.7,345.6 L428.9,349.0 Z" fill="#047048"/><path d="M429.0,349.0 L430.0,338.1 L431.0,349.0 Z" fill="#047048"/><path d="M431.6,349.0 L432.5,346.0 L433.5,349.0 Z" fill="#047048"/><path d="M434.1,349.0 L435.4,337.9 L436.7,349.0 Z" fill="#047048"/><path d="M436.7,349.0 L437.8,340.7 L438.9,349.0 Z" fill="#047048"/><path d="M439.2,349.0 L440.0,339.7 L440.8,349.0 Z" fill="#047048"/><path d="M441.8,349.0 L442.6,340.3 L443.5,349.0 Z" fill="#047048"/><path d="M444.4,349.0 L445.1,338.7 L445.9,349.0 Z" fill="#047048"/><path d="M446.9,349.0 L447.8,339.2 L448.6,349.0 Z" fill="#047048"/><path d="M449.5,349.0 L450.8,343.9 L452.0,349.0 Z" fill="#047048"/><path d="M452.1,349.0 L453.4,337.9 L454.7,349.0 Z" fill="#047048"/><path d="M454.6,349.0 L456.1,343.3 L457.7,349.0 Z" fill="#047048"/><path d="M457.2,349.0 L458.1,338.7 L459.0,349.0 Z" fill="#047048"/><path d="M459.8,349.0 L461.2,340.0 L462.6,349.0 Z" fill="#047048"/><path d="M462.3,349.0 L463.8,343.1 L465.4,349.0 Z" fill="#047048"/><path d="M464.9,349.0 L465.7,340.0 L466.4,349.0 Z" fill="#047048"/><path d="M467.4,349.0 L468.6,343.8 L469.7,349.0 Z" fill="#047048"/></svg>
<div class="a" style="left:199px;top:352px;width:250px;height:16px;overflow:hidden;background:#5a0b3c;opacity:0.9"><div class="a" style="left:0px;top:-17.6px;font-size:32px;font-weight:400;letter-spacing:0px;color:#047048;-webkit-text-stroke:0.3px #047048;line-height:32px">32d 13h 47m 17s</div></div>
<svg style="left:256px;top:368.5px;width:214px;height:13.5px;opacity:0.7" viewBox="256 368.5 214 13.5"><rect x="256" y="368.5" width="214" height="13.5" fill="#5a0b3c"/><path d="M256.0,382.0 L256.7,373.0 L257.5,382.0 Z" fill="#02503a"/><path d="M258.4,382.0 L259.3,376.3 L260.3,382.0 Z" fill="#02503a"/><path d="M260.8,382.0 L261.6,373.7 L262.5,382.0 Z" fill="#02503a"/><path d="M263.1,382.0 L264.4,371.5 L265.7,382.0 Z" fill="#02503a"/><path d="M265.5,382.0 L266.5,376.0 L267.5,382.0 Z" fill="#02503a"/><path d="M267.9,382.0 L268.7,370.1 L269.4,382.0 Z" fill="#02503a"/><path d="M270.3,382.0 L271.2,372.5 L272.2,382.0 Z" fill="#02503a"/><path d="M272.6,382.0 L273.5,368.7 L274.3,382.0 Z" fill="#02503a"/><path d="M275.0,382.0 L276.3,373.1 L277.5,382.0 Z" fill="#02503a"/><path d="M277.4,382.0 L278.7,373.8 L280.1,382.0 Z" fill="#02503a"/><path d="M279.8,382.0 L280.6,370.8 L281.4,382.0 Z" fill="#02503a"/><path d="M282.2,382.0 L283.4,374.2 L284.6,382.0 Z" fill="#02503a"/><path d="M284.5,382.0 L285.3,373.3 L286.0,382.0 Z" fill="#02503a"/><path d="M286.9,382.0 L288.3,369.3 L289.6,382.0 Z" fill="#02503a"/><path d="M289.3,382.0 L290.3,369.5 L291.4,382.0 Z" fill="#02503a"/><path d="M291.7,382.0 L292.9,374.1 L294.0,382.0 Z" fill="#02503a"/><path d="M294.0,382.0 L294.8,374.4 L295.5,382.0 Z" fill="#02503a"/><path d="M296.4,382.0 L297.4,372.9 L298.3,382.0 Z" fill="#02503a"/><path d="M298.8,382.0 L299.7,374.0 L300.7,382.0 Z" fill="#02503a"/><path d="M301.2,382.0 L302.2,375.7 L303.2,382.0 Z" fill="#02503a"/><path d="M303.6,382.0 L304.7,370.2 L305.9,382.0 Z" fill="#02503a"/><path d="M305.9,382.0 L307.3,369.5 L308.7,382.0 Z" fill="#02503a"/><path d="M308.3,382.0 L309.5,368.9 L310.7,382.0 Z" fill="#02503a"/><path d="M310.7,382.0 L311.7,374.4 L312.6,382.0 Z" fill="#02503a"/><path d="M313.1,382.0 L314.4,370.7 L315.7,382.0 Z" fill="#02503a"/><path d="M315.4,382.0 L316.3,373.0 L317.2,382.0 Z" fill="#02503a"/><path d="M317.8,382.0 L318.9,375.9 L319.9,382.0 Z" fill="#02503a"/><path d="M320.2,382.0 L321.2,371.8 L322.2,382.0 Z" fill="#02503a"/><path d="M322.6,382.0 L323.7,375.2 L324.8,382.0 Z" fill="#02503a"/><path d="M325.0,382.0 L325.8,374.6 L326.7,382.0 Z" fill="#02503a"/><path d="M327.3,382.0 L328.8,368.8 L330.2,382.0 Z" fill="#02503a"/><path d="M329.7,382.0 L330.6,370.7 L331.4,382.0 Z" fill="#02503a"/><path d="M332.1,382.0 L333.0,370.8 L334.0,382.0 Z" fill="#02503a"/><path d="M334.5,382.0 L335.9,372.1 L337.4,382.0 Z" fill="#02503a"/><path d="M336.8,382.0 L337.7,373.2 L338.6,382.0 Z" fill="#02503a"/><path d="M339.2,382.0 L340.7,369.5 L342.3,382.0 Z" fill="#02503a"/><path d="M341.6,382.0 L342.7,369.3 L343.9,382.0 Z" fill="#02503a"/><path d="M344.0,382.0 L344.8,370.2 L345.7,382.0 Z" fill="#02503a"/><path d="M346.4,382.0 L347.4,371.5 L348.5,382.0 Z" fill="#02503a"/><path d="M348.7,382.0 L349.6,375.8 L350.5,382.0 Z" fill="#02503a"/><path d="M351.1,382.0 L352.0,372.7 L352.9,382.0 Z" fill="#02503a"/><path d="M353.5,382.0 L354.7,375.6 L355.9,382.0 Z" fill="#02503a"/><path d="M355.9,382.0 L357.3,374.0 L358.7,382.0 Z" fill="#02503a"/><path d="M358.2,382.0 L359.4,371.1 L360.5,382.0 Z" fill="#02503a"/><path d="M360.6,382.0 L361.9,371.6 L363.3,382.0 Z" fill="#02503a"/><path d="M363.0,382.0 L363.8,376.4 L364.6,382.0 Z" fill="#02503a"/><path d="M365.4,382.0 L366.3,370.9 L367.2,382.0 Z" fill="#02503a"/><path d="M367.8,382.0 L368.5,372.1 L369.3,382.0 Z" fill="#02503a"/><path d="M370.1,382.0 L371.1,369.1 L372.1,382.0 Z" fill="#02503a"/><path d="M372.5,382.0 L373.7,373.5 L374.9,382.0 Z" fill="#02503a"/><path d="M374.9,382.0 L375.7,370.4 L376.5,382.0 Z" fill="#02503a"/><path d="M377.3,382.0 L378.1,374.5 L378.9,382.0 Z" fill="#02503a"/><path d="M379.6,382.0 L380.8,374.3 L382.0,382.0 Z" fill="#02503a"/><path d="M382.0,382.0 L382.8,376.2 L383.5,382.0 Z" fill="#02503a"/><path d="M384.4,382.0 L385.1,369.3 L385.9,382.0 Z" fill="#02503a"/><path d="M386.8,382.0 L387.9,375.3 L389.0,382.0 Z" fill="#02503a"/><path d="M389.2,382.0 L390.0,369.6 L390.8,382.0 Z" fill="#02503a"/><path d="M391.5,382.0 L392.7,372.2 L393.9,382.0 Z" fill="#02503a"/><path d="M393.9,382.0 L395.1,369.8 L396.3,382.0 Z" fill="#02503a"/><path d="M396.3,382.0 L397.6,370.1 L399.0,382.0 Z" fill="#02503a"/><path d="M398.7,382.0 L399.6,373.7 L400.6,382.0 Z" fill="#02503a"/><path d="M401.0,382.0 L402.4,373.1 L403.7,382.0 Z" fill="#02503a"/><path d="M403.4,382.0 L404.2,370.0 L404.9,382.0 Z" fill="#02503a"/><path d="M405.8,382.0 L407.1,373.0 L408.4,382.0 Z" fill="#02503a"/><path d="M408.2,382.0 L409.3,371.9 L410.5,382.0 Z" fill="#02503a"/><path d="M410.6,382.0 L411.6,369.2 L412.7,382.0 Z" fill="#02503a"/><path d="M412.9,382.0 L414.1,370.7 L415.3,382.0 Z" fill="#02503a"/><path d="M415.3,382.0 L416.2,376.5 L417.1,382.0 Z" fill="#02503a"/><path d="M417.7,382.0 L419.0,372.6 L420.3,382.0 Z" fill="#02503a"/><path d="M420.1,382.0 L420.9,374.4 L421.8,382.0 Z" fill="#02503a"/><path d="M422.4,382.0 L423.5,375.7 L424.5,382.0 Z" fill="#02503a"/><path d="M424.8,382.0 L425.7,374.9 L426.5,382.0 Z" fill="#02503a"/><path d="M427.2,382.0 L428.7,371.5 L430.2,382.0 Z" fill="#02503a"/><path d="M429.6,382.0 L431.1,374.5 L432.6,382.0 Z" fill="#02503a"/><path d="M432.0,382.0 L433.3,374.4 L434.6,382.0 Z" fill="#02503a"/><path d="M434.3,382.0 L435.2,374.3 L436.0,382.0 Z" fill="#02503a"/><path d="M436.7,382.0 L438.2,374.3 L439.7,382.0 Z" fill="#02503a"/><path d="M439.1,382.0 L440.5,375.2 L441.9,382.0 Z" fill="#02503a"/><path d="M441.5,382.0 L442.2,376.0 L443.0,382.0 Z" fill="#02503a"/><path d="M443.8,382.0 L444.7,375.6 L445.5,382.0 Z" fill="#02503a"/><path d="M446.2,382.0 L447.2,371.7 L448.2,382.0 Z" fill="#02503a"/><path d="M448.6,382.0 L449.6,376.0 L450.6,382.0 Z" fill="#02503a"/><path d="M451.0,382.0 L452.2,374.1 L453.3,382.0 Z" fill="#02503a"/><path d="M453.4,382.0 L454.6,376.1 L455.9,382.0 Z" fill="#02503a"/><path d="M455.7,382.0 L456.6,369.6 L457.4,382.0 Z" fill="#02503a"/><path d="M458.1,382.0 L459.2,371.9 L460.2,382.0 Z" fill="#02503a"/><path d="M460.5,382.0 L461.3,372.1 L462.0,382.0 Z" fill="#02503a"/><path d="M462.9,382.0 L463.7,371.9 L464.5,382.0 Z" fill="#02503a"/><path d="M465.2,382.0 L466.5,370.1 L467.8,382.0 Z" fill="#02503a"/><path d="M467.6,382.0 L468.6,370.5 L469.5,382.0 Z" fill="#02503a"/></svg>
<svg style="left:558px;top:320px;width:58px;height:16px;opacity:0.85" viewBox="558 320 58 16"><rect x="558" y="320" width="58" height="16" fill="#5a0b3c"/><path d="M558.0,336 L559.5,326.2 L561.1,336 Z" fill="#047048"/><path d="M560.6,336 L561.9,327.1 L563.1,336 Z" fill="#047048"/><path d="M563.3,336 L564.7,324.7 L566.1,336 Z" fill="#047048"/><path d="M565.9,336 L567.6,324.8 L569.3,336 Z" fill="#047048"/><path d="M568.5,336 L570.2,324.7 L571.9,336 Z" fill="#047048"/><path d="M571.2,336 L572.4,323.3 L573.6,336 Z" fill="#047048"/><path d="M573.8,336 L575.5,327.7 L577.2,336 Z" fill="#047048"/><path d="M576.5,336 L577.5,330.5 L578.6,336 Z" fill="#047048"/><path d="M579.1,336 L580.7,328.5 L582.3,336 Z" fill="#047048"/><path d="M581.7,336 L583.3,324.1 L584.8,336 Z" fill="#047048"/><path d="M584.4,336 L586.0,330.2 L587.7,336 Z" fill="#047048"/><path d="M587.0,336 L588.5,324.5 L589.9,336 Z" fill="#047048"/><path d="M589.6,336 L591.3,326.8 L593.0,336 Z" fill="#047048"/><path d="M592.3,336 L593.1,329.8 L593.9,336 Z" fill="#047048"/><path d="M594.9,336 L596.5,331.4 L598.0,336 Z" fill="#047048"/><path d="M597.5,336 L599.2,325.1 L600.9,336 Z" fill="#047048"/><path d="M600.2,336 L601.8,324.0 L603.5,336 Z" fill="#047048"/><path d="M602.8,336 L603.6,328.1 L604.4,336 Z" fill="#047048"/><path d="M605.5,336 L606.5,330.2 L607.6,336 Z" fill="#047048"/><path d="M608.1,336 L609.0,323.1 L610.0,336 Z" fill="#047048"/><path d="M610.7,336 L611.9,323.2 L613.1,336 Z" fill="#047048"/><path d="M613.4,336 L615.0,325.2 L616.6,336 Z" fill="#047048"/></svg>
<svg style="left:543.5px;top:352px;width:72.5px;height:16px;opacity:0.8" viewBox="543.5 352 72.5 16"><rect x="543.5" y="352" width="72.5" height="16" fill="#5a0b3c"/><path d="M543.5,368 L545.3,352.3 L547.1,368 Z" fill="#047048"/><path d="M546.3,368 L548.1,353.9 L549.9,368 Z" fill="#047048"/><path d="M549.1,368 L550.2,361.1 L551.3,368 Z" fill="#047048"/><path d="M551.9,368 L553.1,357.0 L554.3,368 Z" fill="#047048"/><path d="M554.7,368 L556.3,355.9 L557.9,368 Z" fill="#047048"/><path d="M557.4,368 L558.5,359.9 L559.6,368 Z" fill="#047048"/><path d="M560.2,368 L561.7,357.2 L563.2,368 Z" fill="#047048"/><path d="M563.0,368 L564.0,357.7 L564.9,368 Z" fill="#047048"/><path d="M565.8,368 L567.1,355.8 L568.4,368 Z" fill="#047048"/><path d="M568.6,368 L570.2,360.9 L571.9,368 Z" fill="#047048"/><path d="M571.4,368 L572.5,358.5 L573.6,368 Z" fill="#047048"/><path d="M574.2,368 L575.2,361.0 L576.3,368 Z" fill="#047048"/><path d="M577.0,368 L578.0,355.2 L578.9,368 Z" fill="#047048"/><path d="M579.8,368 L581.4,357.7 L583.0,368 Z" fill="#047048"/><path d="M582.5,368 L584.2,358.7 L585.8,368 Z" fill="#047048"/><path d="M585.3,368 L586.8,358.7 L588.3,368 Z" fill="#047048"/><path d="M588.1,368 L589.9,354.4 L591.7,368 Z" fill="#047048"/><path d="M590.9,368 L592.5,361.5 L594.0,368 Z" fill="#047048"/><path d="M593.7,368 L595.4,361.6 L597.1,368 Z" fill="#047048"/><path d="M596.5,368 L598.1,360.4 L599.6,368 Z" fill="#047048"/><path d="M599.3,368 L600.8,359.8 L602.3,368 Z" fill="#047048"/><path d="M602.1,368 L603.7,353.2 L605.4,368 Z" fill="#047048"/><path d="M604.8,368 L606.3,355.4 L607.8,368 Z" fill="#047048"/><path d="M607.6,368 L609.0,360.6 L610.3,368 Z" fill="#047048"/><path d="M610.4,368 L611.8,354.6 L613.2,368 Z" fill="#047048"/><path d="M613.2,368 L614.9,360.4 L616.5,368 Z" fill="#047048"/></svg>
<div class="sq" style="left:600px;top:351.5px;background:#4a8ef0"></div>
<div class="lg" style="left:611.5px;top:348.3px">200</div>
<div class="a" style="left:152.6px;top:399.7px;width:2px;height:14px;background:#03553d;opacity:0.85"></div><div class="a" style="left:154.6px;top:399.7px;width:2px;height:14px;background:#4a1238;opacity:0.85"></div>
<div class="a" style="left:248.6px;top:399.7px;width:1.5px;height:14px;background:#4a1238;opacity:0.8"></div><div class="a" style="left:250.1px;top:399.7px;width:3px;height:14px;background:#0a3a38;opacity:0.6"></div>
<div class="a" style="left:144.8px;top:432.0px;width:2px;height:14px;background:#03553d;opacity:0.85"></div><div class="a" style="left:146.8px;top:432.0px;width:2px;height:14px;background:#4a1238;opacity:0.85"></div>
<div class="a" style="left:240.8px;top:432.0px;width:1.5px;height:14px;background:#4a1238;opacity:0.8"></div><div class="a" style="left:242.3px;top:432.0px;width:3px;height:14px;background:#0a3a38;opacity:0.6"></div>
<div class="a" style="left:137.0px;top:464.3px;width:2px;height:14px;background:#03553d;opacity:0.85"></div><div class="a" style="left:139.0px;top:464.3px;width:2px;height:14px;background:#4a1238;opacity:0.85"></div>
<div class="a" style="left:233.0px;top:464.3px;width:1.5px;height:14px;background:#4a1238;opacity:0.8"></div><div class="a" style="left:234.5px;top:464.3px;width:3px;height:14px;background:#0a3a38;opacity:0.6"></div>
<div class="a" style="left:129.2px;top:496.6px;width:2px;height:14px;background:#03553d;opacity:0.85"></div><div class="a" style="left:131.2px;top:496.6px;width:2px;height:14px;background:#4a1238;opacity:0.85"></div>
<div class="a" style="left:225.2px;top:496.6px;width:1.5px;height:14px;background:#4a1238;opacity:0.8"></div><div class="a" style="left:226.7px;top:496.6px;width:3px;height:14px;background:#0a3a38;opacity:0.6"></div>
<div class="a" style="left:121.4px;top:528.9px;width:2px;height:14px;background:#03553d;opacity:0.85"></div><div class="a" style="left:123.4px;top:528.9px;width:2px;height:14px;background:#4a1238;opacity:0.85"></div>
<div class="a" style="left:217.4px;top:528.9px;width:1.5px;height:14px;background:#4a1238;opacity:0.8"></div><div class="a" style="left:218.9px;top:528.9px;width:3px;height:14px;background:#0a3a38;opacity:0.6"></div>
<div class="a" style="left:113.6px;top:561.2px;width:2px;height:14px;background:#03553d;opacity:0.85"></div><div class="a" style="left:115.6px;top:561.2px;width:2px;height:14px;background:#4a1238;opacity:0.85"></div>
<div class="a" style="left:209.6px;top:561.2px;width:1.5px;height:14px;background:#4a1238;opacity:0.8"></div><div class="a" style="left:211.1px;top:561.2px;width:3px;height:14px;background:#0a3a38;opacity:0.6"></div>
<div class="a" style="left:105.8px;top:593.5px;width:2px;height:14px;background:#03553d;opacity:0.85"></div><div class="a" style="left:107.8px;top:593.5px;width:2px;height:14px;background:#4a1238;opacity:0.85"></div>
<div class="a" style="left:201.8px;top:593.5px;width:1.5px;height:14px;background:#4a1238;opacity:0.8"></div><div class="a" style="left:203.3px;top:593.5px;width:3px;height:14px;background:#0a3a38;opacity:0.6"></div>
<div class="a" style="left:98.0px;top:625.8px;width:2px;height:14px;background:#03553d;opacity:0.85"></div><div class="a" style="left:100.0px;top:625.8px;width:2px;height:14px;background:#4a1238;opacity:0.85"></div>
<div class="a" style="left:194.0px;top:625.8px;width:1.5px;height:14px;background:#4a1238;opacity:0.8"></div><div class="a" style="left:195.5px;top:625.8px;width:3px;height:14px;background:#0a3a38;opacity:0.6"></div>
<div class="a" style="left:90.2px;top:658.1px;width:2px;height:14px;background:#03553d;opacity:0.85"></div><div class="a" style="left:92.2px;top:658.1px;width:2px;height:14px;background:#4a1238;opacity:0.85"></div>
<div class="a" style="left:186.2px;top:658.1px;width:1.5px;height:14px;background:#4a1238;opacity:0.8"></div><div class="a" style="left:187.7px;top:658.1px;width:3px;height:14px;background:#0a3a38;opacity:0.6"></div>
<div class="a" style="left:82.4px;top:690.4px;width:2px;height:14px;background:#03553d;opacity:0.85"></div><div class="a" style="left:84.4px;top:690.4px;width:2px;height:14px;background:#4a1238;opacity:0.85"></div>
<div class="a" style="left:178.4px;top:690.4px;width:1.5px;height:14px;background:#4a1238;opacity:0.8"></div><div class="a" style="left:179.9px;top:690.4px;width:3px;height:14px;background:#0a3a38;opacity:0.6"></div>
<div class="a" style="left:74.6px;top:722.7px;width:2px;height:14px;background:#03553d;opacity:0.85"></div><div class="a" style="left:76.6px;top:722.7px;width:2px;height:14px;background:#4a1238;opacity:0.85"></div>
<div class="a" style="left:170.6px;top:722.7px;width:1.5px;height:14px;background:#4a1238;opacity:0.8"></div><div class="a" style="left:172.1px;top:722.7px;width:3px;height:14px;background:#0a3a38;opacity:0.6"></div>
<svg style="left:110px;top:576px;width:190px;height:16px;opacity:0.45" viewBox="110 576 190 16"><rect x="110" y="576" width="190" height="16" fill="#3a1836"/><path d="M110.0,592 L111.9,583.9 L113.9,592 Z" fill="#034a36"/><path d="M113.5,592 L115.6,577.8 L117.7,592 Z" fill="#034a36"/><path d="M116.9,592 L118.7,584.7 L120.6,592 Z" fill="#034a36"/><path d="M120.4,592 L121.8,587.1 L123.3,592 Z" fill="#034a36"/><path d="M123.8,592 L125.7,586.6 L127.5,592 Z" fill="#034a36"/><path d="M127.3,592 L129.2,579.1 L131.1,592 Z" fill="#034a36"/><path d="M130.7,592 L132.8,584.3 L134.8,592 Z" fill="#034a36"/><path d="M134.2,592 L136.0,586.9 L137.9,592 Z" fill="#034a36"/><path d="M137.6,592 L139.8,584.4 L142.0,592 Z" fill="#034a36"/><path d="M141.1,592 L142.3,579.6 L143.6,592 Z" fill="#034a36"/><path d="M144.5,592 L146.4,584.9 L148.2,592 Z" fill="#034a36"/><path d="M148.0,592 L149.9,588.4 L151.8,592 Z" fill="#034a36"/><path d="M151.5,592 L153.6,583.6 L155.7,592 Z" fill="#034a36"/><path d="M154.9,592 L156.2,579.0 L157.6,592 Z" fill="#034a36"/><path d="M158.4,592 L160.3,588.6 L162.2,592 Z" fill="#034a36"/><path d="M161.8,592 L163.5,584.7 L165.2,592 Z" fill="#034a36"/><path d="M165.3,592 L166.8,578.3 L168.3,592 Z" fill="#034a36"/><path d="M168.7,592 L170.1,580.0 L171.4,592 Z" fill="#034a36"/><path d="M172.2,592 L173.3,582.9 L174.5,592 Z" fill="#034a36"/><path d="M175.6,592 L176.8,586.8 L178.1,592 Z" fill="#034a36"/><path d="M179.1,592 L180.7,577.6 L182.4,592 Z" fill="#034a36"/><path d="M182.5,592 L183.8,580.6 L185.1,592 Z" fill="#034a36"/><path d="M186.0,592 L187.8,585.7 L189.6,592 Z" fill="#034a36"/><path d="M189.5,592 L191.7,587.1 L193.9,592 Z" fill="#034a36"/><path d="M192.9,592 L194.6,580.7 L196.3,592 Z" fill="#034a36"/><path d="M196.4,592 L197.7,581.4 L199.0,592 Z" fill="#034a36"/><path d="M199.8,592 L201.3,580.6 L202.7,592 Z" fill="#034a36"/><path d="M203.3,592 L205.1,582.9 L207.0,592 Z" fill="#034a36"/><path d="M206.7,592 L208.8,588.5 L210.9,592 Z" fill="#034a36"/><path d="M210.2,592 L211.5,578.4 L212.8,592 Z" fill="#034a36"/><path d="M213.6,592 L215.8,588.0 L218.0,592 Z" fill="#034a36"/><path d="M217.1,592 L218.4,583.6 L219.7,592 Z" fill="#034a36"/><path d="M220.5,592 L221.6,578.4 L222.7,592 Z" fill="#034a36"/><path d="M224.0,592 L226.0,588.2 L227.9,592 Z" fill="#034a36"/><path d="M227.5,592 L229.3,584.0 L231.1,592 Z" fill="#034a36"/><path d="M230.9,592 L232.6,581.5 L234.2,592 Z" fill="#034a36"/><path d="M234.4,592 L236.3,580.0 L238.2,592 Z" fill="#034a36"/><path d="M237.8,592 L239.6,584.5 L241.3,592 Z" fill="#034a36"/><path d="M241.3,592 L242.4,579.0 L243.4,592 Z" fill="#034a36"/><path d="M244.7,592 L246.7,577.7 L248.7,592 Z" fill="#034a36"/><path d="M248.2,592 L250.0,588.0 L251.8,592 Z" fill="#034a36"/><path d="M251.6,592 L253.2,585.9 L254.7,592 Z" fill="#034a36"/><path d="M255.1,592 L256.4,583.0 L257.7,592 Z" fill="#034a36"/><path d="M258.5,592 L259.6,587.4 L260.7,592 Z" fill="#034a36"/><path d="M262.0,592 L264.1,586.4 L266.2,592 Z" fill="#034a36"/><path d="M265.5,592 L267.3,579.9 L269.1,592 Z" fill="#034a36"/><path d="M268.9,592 L271.0,582.5 L273.0,592 Z" fill="#034a36"/><path d="M272.4,592 L274.1,579.7 L275.8,592 Z" fill="#034a36"/><path d="M275.8,592 L277.3,583.4 L278.7,592 Z" fill="#034a36"/><path d="M279.3,592 L280.6,581.7 L282.0,592 Z" fill="#034a36"/><path d="M282.7,592 L284.5,583.8 L286.3,592 Z" fill="#034a36"/><path d="M286.2,592 L287.3,584.7 L288.4,592 Z" fill="#034a36"/><path d="M289.6,592 L291.5,588.0 L293.3,592 Z" fill="#034a36"/><path d="M293.1,592 L295.2,582.0 L297.4,592 Z" fill="#034a36"/><path d="M296.5,592 L297.7,588.3 L298.9,592 Z" fill="#034a36"/></svg>
<svg style="left:300px;top:576px;width:122px;height:16px;opacity:0.45" viewBox="300 576 122 16"><rect x="300" y="576" width="122" height="16" fill="none"/><path d="M300.0,592 L302.2,582.0 L304.5,592 Z" fill="#0a6a5a"/><path d="M303.5,592 L304.6,585.5 L305.7,592 Z" fill="#0a6a5a"/><path d="M307.0,592 L308.2,583.9 L309.4,592 Z" fill="#0a6a5a"/><path d="M310.5,592 L312.5,578.1 L314.6,592 Z" fill="#0a6a5a"/><path d="M313.9,592 L315.6,588.7 L317.3,592 Z" fill="#0a6a5a"/><path d="M317.4,592 L318.6,584.8 L319.9,592 Z" fill="#0a6a5a"/><path d="M320.9,592 L322.3,578.6 L323.7,592 Z" fill="#0a6a5a"/><path d="M324.4,592 L326.4,578.4 L328.4,592 Z" fill="#0a6a5a"/><path d="M327.9,592 L329.5,579.4 L331.1,592 Z" fill="#0a6a5a"/><path d="M331.4,592 L332.7,578.2 L333.9,592 Z" fill="#0a6a5a"/><path d="M334.9,592 L336.5,581.4 L338.2,592 Z" fill="#0a6a5a"/><path d="M338.3,592 L340.1,580.9 L341.8,592 Z" fill="#0a6a5a"/><path d="M341.8,592 L343.1,584.4 L344.3,592 Z" fill="#0a6a5a"/><path d="M345.3,592 L346.5,583.9 L347.6,592 Z" fill="#0a6a5a"/><path d="M348.8,592 L350.8,584.9 L352.9,592 Z" fill="#0a6a5a"/><path d="M352.3,592 L354.4,588.1 L356.5,592 Z" fill="#0a6a5a"/><path d="M355.8,592 L358.0,584.2 L360.2,592 Z" fill="#0a6a5a"/><path d="M359.3,592 L361.1,585.4 L363.0,592 Z" fill="#0a6a5a"/><path d="M362.7,592 L363.8,578.2 L364.9,592 Z" fill="#0a6a5a"/><path d="M366.2,592 L368.4,580.5 L370.5,592 Z" fill="#0a6a5a"/><path d="M369.7,592 L371.8,587.7 L373.8,592 Z" fill="#0a6a5a"/><path d="M373.2,592 L374.5,583.0 L375.8,592 Z" fill="#0a6a5a"/><path d="M376.7,592 L378.9,581.8 L381.1,592 Z" fill="#0a6a5a"/><path d="M380.2,592 L382.3,580.3 L384.4,592 Z" fill="#0a6a5a"/><path d="M383.7,592 L385.4,584.5 L387.1,592 Z" fill="#0a6a5a"/><path d="M387.1,592 L388.5,580.5 L389.9,592 Z" fill="#0a6a5a"/><path d="M390.6,592 L392.7,580.4 L394.7,592 Z" fill="#0a6a5a"/><path d="M394.1,592 L395.6,578.0 L397.1,592 Z" fill="#0a6a5a"/><path d="M397.6,592 L399.0,584.9 L400.4,592 Z" fill="#0a6a5a"/><path d="M401.1,592 L403.4,579.6 L405.6,592 Z" fill="#0a6a5a"/><path d="M404.6,592 L406.8,581.0 L409.1,592 Z" fill="#0a6a5a"/><path d="M408.1,592 L410.0,583.9 L411.9,592 Z" fill="#0a6a5a"/><path d="M411.5,592 L413.3,581.9 L415.0,592 Z" fill="#0a6a5a"/><path d="M415.0,592 L417.1,582.3 L419.1,592 Z" fill="#0a6a5a"/><path d="M418.5,592 L420.0,578.9 L421.6,592 Z" fill="#0a6a5a"/></svg>
<div class="a" style="left:114px;top:607.7px;width:124px;height:17px;overflow:hidden;background:#3a1836;opacity:0.7"><div class="a" style="left:0px;top:0.4px;font-size:27px;font-weight:400;letter-spacing:0.6px;color:#034a36;-webkit-text-stroke:0.7px #034a36;line-height:27px">19,230rps</div></div>
<div class="a" style="left:114px;top:637px;width:124px;height:18px;overflow:hidden;background:#3a1836;opacity:0.7"><div class="a" style="left:0px;top:-10.9px;font-size:27px;font-weight:400;letter-spacing:0.6px;color:#034a36;-webkit-text-stroke:0.7px #034a36;line-height:27px">19,230rps</div></div>
<div class="a" style="left:300px;top:607.7px;width:85px;height:17px;overflow:hidden;background:none;opacity:0.4"><div class="a" style="left:-6px;top:-0.5px;font-size:33.5px;font-weight:400;letter-spacing:0px;color:#0a6a5a;-webkit-text-stroke:0.5px #0a6a5a;line-height:33.5px">3.23%</div></div>
<div class="a" style="left:280px;top:637px;width:105px;height:18px;overflow:hidden;background:none;opacity:0.3"><div class="a" style="left:12px;top:-16px;font-size:33.5px;font-weight:400;letter-spacing:0px;color:#0a5a4a;-webkit-text-stroke:0.5px #0a5a4a;line-height:33.5px">3.23%</div></div>
<svg style="left:86px;top:670px;width:322px;height:16px;opacity:0.6" viewBox="86 670 322 16"><rect x="86" y="670" width="322" height="16" fill="#2c1a32"/><path d="M86.0,686 L87.3,673.3 L88.7,686 Z" fill="#03382f"/><path d="M89.6,686 L91.2,671.8 L92.8,686 Z" fill="#03382f"/><path d="M93.2,686 L94.6,677.3 L96.1,686 Z" fill="#03382f"/><path d="M96.7,686 L98.5,675.5 L100.2,686 Z" fill="#03382f"/><path d="M100.3,686 L101.8,674.0 L103.3,686 Z" fill="#03382f"/><path d="M103.9,686 L105.5,677.8 L107.2,686 Z" fill="#03382f"/><path d="M107.5,686 L109.5,680.5 L111.6,686 Z" fill="#03382f"/><path d="M111.0,686 L112.8,679.2 L114.6,686 Z" fill="#03382f"/><path d="M114.6,686 L116.7,674.9 L118.7,686 Z" fill="#03382f"/><path d="M118.2,686 L119.7,679.8 L121.1,686 Z" fill="#03382f"/><path d="M121.8,686 L123.4,673.9 L125.0,686 Z" fill="#03382f"/><path d="M125.4,686 L126.9,675.4 L128.4,686 Z" fill="#03382f"/><path d="M128.9,686 L130.5,675.6 L132.0,686 Z" fill="#03382f"/><path d="M132.5,686 L134.2,671.9 L135.9,686 Z" fill="#03382f"/><path d="M136.1,686 L137.3,682.1 L138.5,686 Z" fill="#03382f"/><path d="M139.7,686 L141.6,679.5 L143.5,686 Z" fill="#03382f"/><path d="M143.2,686 L144.6,682.3 L146.0,686 Z" fill="#03382f"/><path d="M146.8,686 L148.0,678.4 L149.2,686 Z" fill="#03382f"/><path d="M150.4,686 L152.2,673.2 L154.1,686 Z" fill="#03382f"/><path d="M154.0,686 L155.2,673.7 L156.4,686 Z" fill="#03382f"/><path d="M157.6,686 L159.4,680.6 L161.2,686 Z" fill="#03382f"/><path d="M161.1,686 L162.8,679.0 L164.5,686 Z" fill="#03382f"/><path d="M164.7,686 L166.6,681.4 L168.4,686 Z" fill="#03382f"/><path d="M168.3,686 L170.6,676.2 L172.9,686 Z" fill="#03382f"/><path d="M171.9,686 L173.2,677.7 L174.6,686 Z" fill="#03382f"/><path d="M175.4,686 L177.6,675.1 L179.8,686 Z" fill="#03382f"/><path d="M179.0,686 L180.7,680.0 L182.4,686 Z" fill="#03382f"/><path d="M182.6,686 L184.1,678.7 L185.5,686 Z" fill="#03382f"/><path d="M186.2,686 L187.3,674.1 L188.5,686 Z" fill="#03382f"/><path d="M189.8,686 L191.4,679.2 L193.1,686 Z" fill="#03382f"/><path d="M193.3,686 L195.3,681.2 L197.2,686 Z" fill="#03382f"/><path d="M196.9,686 L198.9,676.2 L200.8,686 Z" fill="#03382f"/><path d="M200.5,686 L202.1,674.9 L203.7,686 Z" fill="#03382f"/><path d="M204.1,686 L205.8,679.9 L207.6,686 Z" fill="#03382f"/><path d="M207.6,686 L208.8,672.1 L210.0,686 Z" fill="#03382f"/><path d="M211.2,686 L213.1,680.5 L214.9,686 Z" fill="#03382f"/><path d="M214.8,686 L217.0,672.1 L219.2,686 Z" fill="#03382f"/><path d="M218.4,686 L220.0,675.4 L221.6,686 Z" fill="#03382f"/><path d="M222.0,686 L223.9,672.4 L225.9,686 Z" fill="#03382f"/><path d="M225.5,686 L226.8,675.2 L228.0,686 Z" fill="#03382f"/><path d="M229.1,686 L230.5,682.8 L231.9,686 Z" fill="#03382f"/><path d="M232.7,686 L234.3,674.2 L235.8,686 Z" fill="#03382f"/><path d="M236.3,686 L237.3,677.5 L238.4,686 Z" fill="#03382f"/><path d="M239.8,686 L241.8,675.8 L243.8,686 Z" fill="#03382f"/><path d="M243.4,686 L244.9,680.2 L246.3,686 Z" fill="#03382f"/><path d="M247.0,686 L248.7,675.8 L250.5,686 Z" fill="#03382f"/><path d="M250.6,686 L252.5,681.1 L254.5,686 Z" fill="#03382f"/><path d="M254.2,686 L256.2,672.3 L258.1,686 Z" fill="#03382f"/><path d="M257.7,686 L258.9,674.0 L260.2,686 Z" fill="#03382f"/><path d="M261.3,686 L262.7,674.9 L264.1,686 Z" fill="#03382f"/><path d="M264.9,686 L266.0,675.3 L267.0,686 Z" fill="#03382f"/><path d="M268.5,686 L270.5,681.3 L272.6,686 Z" fill="#03382f"/><path d="M272.0,686 L273.5,672.7 L275.0,686 Z" fill="#03382f"/><path d="M275.6,686 L277.0,677.9 L278.4,686 Z" fill="#03382f"/><path d="M279.2,686 L281.0,682.6 L282.8,686 Z" fill="#03382f"/><path d="M282.8,686 L284.0,674.4 L285.2,686 Z" fill="#03382f"/><path d="M286.4,686 L288.1,678.1 L289.9,686 Z" fill="#03382f"/><path d="M289.9,686 L291.6,680.4 L293.2,686 Z" fill="#03382f"/><path d="M293.5,686 L295.8,678.2 L298.1,686 Z" fill="#03382f"/><path d="M297.1,686 L298.4,673.0 L299.8,686 Z" fill="#03382f"/><path d="M300.7,686 L301.9,678.4 L303.1,686 Z" fill="#03382f"/><path d="M304.2,686 L305.4,679.7 L306.6,686 Z" fill="#03382f"/><path d="M307.8,686 L309.9,675.1 L311.9,686 Z" fill="#03382f"/><path d="M311.4,686 L313.7,678.7 L316.0,686 Z" fill="#03382f"/><path d="M315.0,686 L316.4,678.0 L317.7,686 Z" fill="#03382f"/><path d="M318.6,686 L320.0,673.1 L321.4,686 Z" fill="#03382f"/><path d="M322.1,686 L324.1,677.0 L326.1,686 Z" fill="#03382f"/><path d="M325.7,686 L326.9,675.2 L328.0,686 Z" fill="#03382f"/><path d="M329.3,686 L331.2,671.9 L333.0,686 Z" fill="#03382f"/><path d="M332.9,686 L335.0,681.9 L337.1,686 Z" fill="#03382f"/><path d="M336.4,686 L337.9,681.9 L339.4,686 Z" fill="#03382f"/><path d="M340.0,686 L341.4,677.9 L342.7,686 Z" fill="#03382f"/><path d="M343.6,686 L344.9,681.4 L346.3,686 Z" fill="#03382f"/><path d="M347.2,686 L349.4,673.7 L351.6,686 Z" fill="#03382f"/><path d="M350.8,686 L352.3,682.3 L353.8,686 Z" fill="#03382f"/><path d="M354.3,686 L356.2,681.8 L358.1,686 Z" fill="#03382f"/><path d="M357.9,686 L359.4,673.4 L360.9,686 Z" fill="#03382f"/><path d="M361.5,686 L363.1,676.5 L364.8,686 Z" fill="#03382f"/><path d="M365.1,686 L366.5,679.6 L367.9,686 Z" fill="#03382f"/><path d="M368.6,686 L369.7,674.4 L370.8,686 Z" fill="#03382f"/><path d="M372.2,686 L373.3,675.5 L374.4,686 Z" fill="#03382f"/><path d="M375.8,686 L377.4,682.6 L379.1,686 Z" fill="#03382f"/><path d="M379.4,686 L381.2,677.2 L383.0,686 Z" fill="#03382f"/><path d="M383.0,686 L384.8,681.4 L386.6,686 Z" fill="#03382f"/><path d="M386.5,686 L388.2,674.9 L389.8,686 Z" fill="#03382f"/><path d="M390.1,686 L391.9,673.6 L393.8,686 Z" fill="#03382f"/><path d="M393.7,686 L395.4,675.1 L397.2,686 Z" fill="#03382f"/><path d="M397.3,686 L398.7,673.5 L400.2,686 Z" fill="#03382f"/><path d="M400.8,686 L402.5,678.1 L404.2,686 Z" fill="#03382f"/><path d="M404.4,686 L406.3,673.6 L408.2,686 Z" fill="#03382f"/></svg>
<div class="a" style="left:0;top:689px;width:84px;height:6px;background:#03342e"></div><div class="a" style="left:0;top:695px;width:84px;height:7px;background:#34192f"></div>
<div class="a" style="left:178px;top:689px;width:230px;height:6px;background:#03342e"></div><div class="a" style="left:178px;top:695px;width:230px;height:7px;background:#34192f"></div>
<div class="a" style="left:468px;top:672px;width:149px;height:6px;background:#03342e"></div><div class="a" style="left:468px;top:678px;width:149px;height:10px;background:#34192f"></div>
<div class="a" style="left:133px;top:720px;width:6px;height:5px;background:#03603c"></div><div class="a" style="left:131px;top:725px;width:10px;height:8px;background:#34192f"></div>
<div class="a" style="left:173px;top:720px;width:6px;height:5px;background:#03603c"></div><div class="a" style="left:171px;top:725px;width:10px;height:8px;background:#34192f"></div>
<div class="a" style="left:214px;top:720px;width:6px;height:5px;background:#03603c"></div><div class="a" style="left:212px;top:725px;width:10px;height:8px;background:#34192f"></div>
<div class="a" style="left:424px;top:704.5px;width:6px;height:5.5px;background:#03603c"></div><div class="a" style="left:424px;top:710px;width:6px;height:7px;background:#34192f"></div>
<div class="a" style="left:465px;top:704.5px;width:6px;height:5.5px;background:#03603c"></div><div class="a" style="left:465px;top:710px;width:6px;height:7px;background:#34192f"></div>
<div class="a" style="left:506px;top:704.5px;width:6px;height:5.5px;background:#03603c"></div><div class="a" style="left:506px;top:710px;width:6px;height:7px;background:#34192f"></div>
<div class="a" style="left:269px;top:305.2px;font-size:25px;letter-spacing:1.1px;color:#7290f0;-webkit-text-stroke:0.4px #7290f0;line-height:25px">19,230rps</div>
<div class="a" style="left:442.2px;top:301.5px;font-size:33.5px;letter-spacing:0.75px;color:#4a90e8;-webkit-text-stroke:0.6px #4a90e8;line-height:33.5px">3.23%</div>
<div class="a" style="left:924px;top:646px;width:7px;height:8px;background:#0e3a3a"></div>
<div class="a" style="left:966px;top:646px;width:7px;height:8px;background:#0e3a3a"></div>
<div class="a" style="left:1015.5px;top:646px;width:7px;height:8px;background:#0b4a40"></div>
<div class="a" style="left:1066px;top:646px;width:7px;height:8px;background:#3a1a30"></div>
<div class="a" style="left:600px;top:646px;width:7px;height:8px;background:#0b4040"></div>
<div class="a" style="left:641px;top:360px;width:7px;height:8px;background:#0b3a36"></div>
<div class="a" style="left:681.5px;top:360px;width:7px;height:8px;background:#0b3a36"></div>
<div class="a" style="left:924px;top:360px;width:7px;height:8px;background:#0b3a36"></div>
<div class="a" style="left:965px;top:360px;width:7px;height:8px;background:#0b3a36"></div>
<div class="a" style="left:1005.5px;top:360px;width:7px;height:8px;background:#0b3a36"></div>
<div class="a" style="left:600px;top:672px;width:16px;height:6px;background:#03342e"></div><div class="a" style="left:600px;top:678px;width:16px;height:10px;background:#34192f"></div>
<!--BODY-->
</body></html>
